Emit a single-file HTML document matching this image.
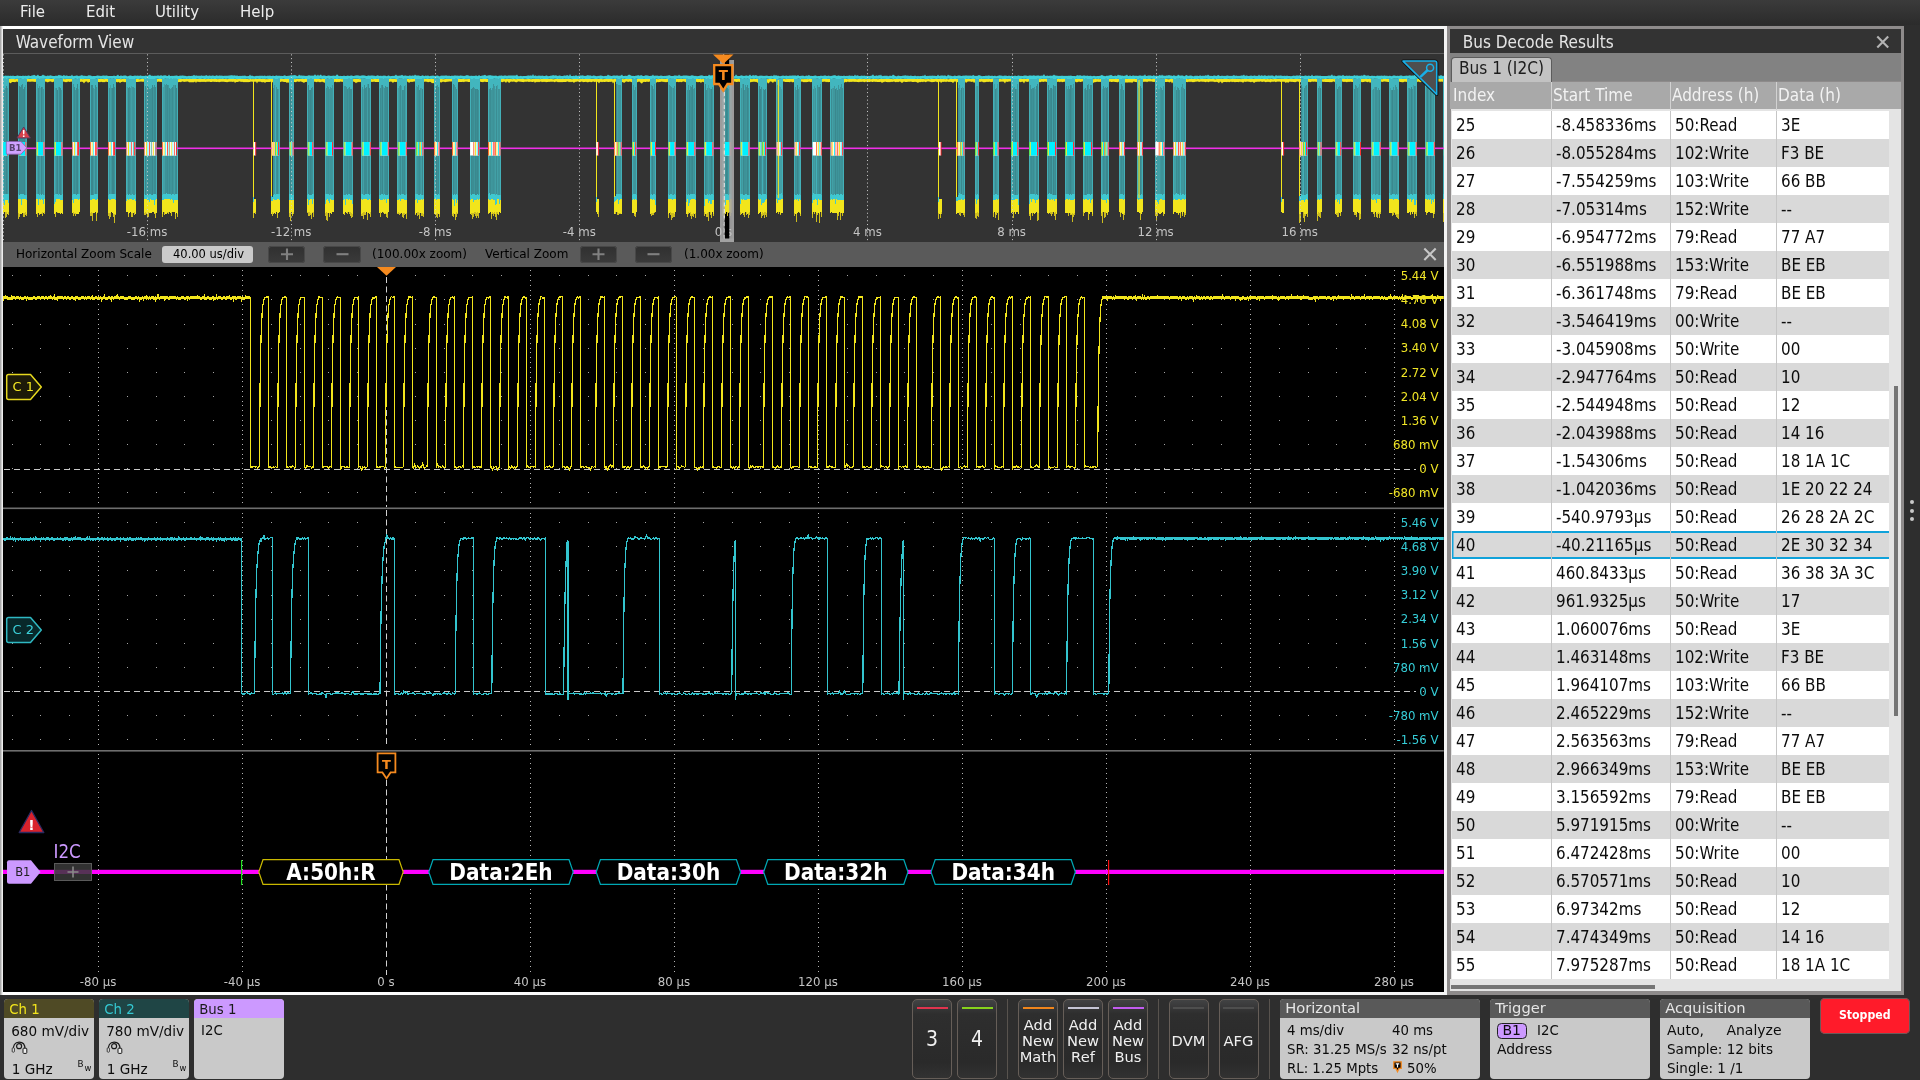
<!DOCTYPE html><html><head><meta charset="utf-8"><title>Oscilloscope</title><style>
html,body{margin:0;padding:0;}
body{width:1920px;height:1080px;position:relative;overflow:hidden;background:#2e2e2e;font-family:"DejaVu Sans", "Liberation Sans", sans-serif;}
#root{position:absolute;left:0;top:0;width:1920px;height:1080px;will-change:transform;}
.abs{position:absolute;}
#menubar{left:0;top:0;width:1920px;height:25px;background:linear-gradient(#3b3b3b,#2b2b2b);}
#menubar span{position:absolute;top:3.9px;font-size:15px;color:#ececec;line-height:17px;}
#wvframe{left:0;top:26px;width:1447.2px;height:968.7px;background:linear-gradient(90deg,#9a9a9a,#ffffff 3px,#f4f4f4);}
#wvtitle{left:3px;top:29px;width:1441px;height:24px;background:#333333;}
#wvtitle span{position:absolute;left:12.7px;top:3.2px;font-size:17px;color:#e4e4e4;line-height:20px;font-family:"DejaVu Sans Condensed", "Liberation Sans Narrow", "Liberation Sans", sans-serif;}
#ovline{left:3px;top:53px;width:1441px;height:1px;background:#5c5c5c;}
#ov{left:3px;top:54px;width:1441px;height:188px;background:#333333;}
#zoombar{left:3px;top:242px;width:1441px;height:25px;background:#5a5a5a;font-size:12px;color:#000;}
#zoombar span{position:absolute;top:4.8px;line-height:14px;white-space:nowrap;}
.zbtn{position:absolute;top:3.6px;height:17.2px;width:37.6px;margin-left:-0.8px;background:linear-gradient(#303030,#3a3a3a);border-radius:3.5px;box-shadow:0 0 0 1px #484848 inset;}
#main{left:3px;top:267px;width:1440.8px;height:724.7px;background:#000;}
svg{position:absolute;left:0;top:0;}
#bdframe{left:1448px;top:27px;width:1456px;}
#bdr{left:1447.2px;top:26px;width:456.6px;height:969px;background:#8e8b8b;}
#bdtitle{left:1450px;top:29px;width:451px;height:24px;background:#333333;}
#bdtitle span{position:absolute;left:12.7px;top:3.2px;font-size:17px;color:#e4e4e4;line-height:20px;font-family:"DejaVu Sans Condensed", "Liberation Sans Narrow", "Liberation Sans", sans-serif;}
#bdtabs{left:1450px;top:53px;width:451px;height:28px;background:#828282;}
#bdtab{left:1450.6px;top:57px;width:101.2px;height:24.6px;background:#c2c2c2;border-radius:4px 4px 0 0;border:1px solid #5c5c5c;border-bottom:none;box-sizing:border-box;font-size:17.1px;color:#1c1c1c;line-height:20px;font-family:"DejaVu Sans Condensed", "Liberation Sans Narrow", "Liberation Sans", sans-serif;}
#bdhead{left:1450px;top:81.6px;width:451px;height:27.4px;background:#a9a9a9;font-size:17px;color:#f2f2f2;font-family:"DejaVu Sans Condensed", "Liberation Sans Narrow", "Liberation Sans", sans-serif;}
#bdhead span{position:absolute;top:3.6px;line-height:20px;white-space:nowrap;}
#bdhead i{position:absolute;top:0;width:1.2px;height:28px;background:#d2d2d2;}
#bdbody{left:1451.2px;top:109px;width:449.8px;height:882px;background:#e4e4e4;}
.row{position:absolute;left:1451.5px;width:437.5px;height:28px;font-size:16.85px;color:#0c0c0c;font-family:"DejaVu Sans Condensed", "Liberation Sans Narrow", "Liberation Sans", sans-serif;}
.r0{background:#ffffff;}.r1{background:#d9d9d9;}
.sel{box-shadow:0 2px 0 0 #10a2da inset,0 -2px 0 0 #10a2da inset,1.5px 0 0 0 #10a2da inset;}
.c{position:absolute;top:0;height:28px;line-height:28.6px;white-space:nowrap;box-sizing:border-box;border-right:1px solid #c6c6c6;padding-left:4.5px;}
.c1{left:0;width:100px;}.c2{left:100px;width:119px;}.c3{left:219px;width:106px;}.c4{left:325px;width:112.5px;border-right:none;}
.badge{position:absolute;top:999px;height:80px;border-radius:4px;overflow:hidden;background:#c9c9c9;font-size:13.3px;color:#0c0c0c;}
.badge .hd{position:absolute;left:0;top:0;right:0;height:18.5px;line-height:18.8px;font-size:14.7px;padding-left:5.2px;}
.badge span{position:absolute;white-space:nowrap;line-height:17px;}
.btn{position:absolute;top:999px;height:80px;width:40px;border-radius:5px;box-sizing:border-box;border:1.2px solid #665e58;background:linear-gradient(#424344,#2e2e2e 18%,#2a2a2a 80%,#323232);color:#f0f0f0;text-align:center;}
.btn i{position:absolute;left:3.5px;right:3.5px;top:7px;height:2px;}
.btn span{position:absolute;left:-4px;right:-4px;text-align:center;}
.vsep{position:absolute;top:999px;width:1.2px;height:80px;background:#58534e;}
</style></head><body><div id="root">
<div id="menubar" class="abs"><span style="left:20px">File</span><span style="left:86px">Edit</span><span style="left:155px">Utility</span><span style="left:240px">Help</span></div>
<div id="wvframe" class="abs"></div>
<div id="wvtitle" class="abs"><span>Waveform View</span></div>
<div id="ovline" class="abs"></div>
<div id="ov" class="abs"></div>
<div id="zoombar" class="abs"><span style="left:13px">Horizontal Zoom Scale</span><div style="position:absolute;left:158.5px;top:4px;width:91.5px;height:16.5px;background:#cacaca;border-radius:3px;"></div><span style="left:170px;font-size:11.5px">40.00 us/div</span><div class="zbtn" style="left:265.5px"></div><div class="zbtn" style="left:321px"></div><span style="left:369px">(100.00x zoom)</span><span style="left:482px">Vertical Zoom</span><div class="zbtn" style="left:577.5px"></div><div class="zbtn" style="left:632.5px"></div><span style="left:681px">(1.00x zoom)</span></div>
<div id="main" class="abs"></div>
<svg class="abs" width="1447" height="1000" viewBox="0 0 1447 1000" style="left:0;top:0">
<g>
<rect x="724.8" y="54" width="4.4" height="188" fill="#000"/>
<clipPath id="ovclip"><rect x="3" y="54" width="1441" height="188"/></clipPath>
<g clip-path="url(#ovclip)">
<path d="M3 78.9 L4 78.9 L5 78.8 L6 79.1 L7 78.7 L8 78.7 L9 79 L10 78.7 L11 78.8 L12 78.9 L13 79 L14 79 L15 79.2 L16 79.1 L17 78.8 L18 78.9 L19 79.2 L20 78.8 L21 79.2 L22 79 L23 78.7 L24 79.1 L25 78.8 L26 78.8 L27 78.8 L28 79 L29 78.8 L30 79.1 L31 78.8 L32 79 L33 78.8 L34 78.9 L35 78.7 L36 79 L37 79.2 L38 79.1 L39 79.2 L40 78.8 L41 78.8 L42 79 L43 78.7 L44 79.1 L45 79 L46 79.1 L47 79 L48 78.8 L49 78.7 L50 78.7 L51 79 L52 79.1 L53 79 L54 78.7 L55 79.1 L56 79 L57 78.9 L58 79 L59 79.1 L60 79.2 L61 79.2 L62 79.1 L63 79 L64 79 L65 79.2 L66 78.9 L67 78.9 L68 79.1 L69 78.9 L70 78.9 L71 78.8 L72 79 L73 79.2 L74 79.1 L75 78.8 L76 79.2 L77 79 L78 78.9 L79 79.1 L80 78.8 L81 78.8 L82 78.9 L83 79.2 L84 78.7 L85 79.1 L86 79.1 L87 78.9 L88 78.8 L89 79 L90 79 L91 79 L92 78.8 L93 79.1 L94 78.9 L95 79 L96 79.1 L97 79.2 L98 78.9 L99 78.9 L100 79.1 L101 79 L102 79.1 L103 78.8 L104 79.2 L105 78.9 L106 78.9 L107 79 L108 78.7 L109 79.1 L110 79.1 L111 79 L112 79 L113 79.2 L114 79 L115 79 L116 79 L117 79.1 L118 79.1 L119 79 L120 79 L121 79.2 L122 79.1 L123 79 L124 78.9 L125 78.8 L126 78.9 L127 78.9 L128 79 L129 79.1 L130 78.8 L131 78.9 L132 79.1 L133 78.8 L134 78.9 L135 79 L136 79 L137 79.1 L138 78.8 L139 79.2 L140 79.2 L141 79.1 L142 79.1 L143 79.1 L144 78.8 L145 78.7 L146 79.2 L147 79 L148 79 L149 78.8 L150 79 L151 78.8 L152 79.2 L153 78.7 L154 79.1 L155 79 L156 78.7 L157 78.8 L158 78.9 L159 79 L160 79.1 L161 79 L162 79 L163 78.8 L164 79.1 L165 79.1 L166 79.1 L167 79.1 L168 78.9 L169 79 L170 79.2 L171 79 L172 78.9 L173 79.1 L174 78.7 L175 78.8 L176 78.8 L177 78.8 L178 79 L179 79.2 L180 78.7 L181 78.7 L182 78.9 L183 79 L184 78.9 L185 78.9 L186 79 L187 78.8 L188 78.7 L189 78.9 L190 78.7 L191 78.7 L192 78.9 L193 79 L194 78.9 L195 79 L196 78.9 L197 79 L198 79 L199 79 L200 79 L201 79.1 L202 79.1 L203 78.9 L204 79 L205 79.1 L206 79.2 L207 78.7 L208 78.9 L209 79 L210 79 L211 78.9 L212 78.9 L213 78.7 L214 79 L215 78.9 L216 78.9 L217 78.9 L218 79.2 L219 78.7 L220 78.7 L221 79 L222 78.7 L223 78.7 L224 79 L225 78.9 L226 78.8 L227 79.2 L228 78.9 L229 78.9 L230 79.1 L231 78.9 L232 78.9 L233 79.1 L234 79 L235 79.1 L236 79 L237 79.2 L238 78.7 L239 78.7 L240 79.1 L241 78.8 L242 78.8 L243 79 L244 78.9 L245 78.9 L246 79.1 L247 79.1 L248 79.1 L249 79.2 L250 79.1 L251 78.9 L252 79.2 L253 78.8 L254 79.2 L255 78.8 L256 78.8 L257 79 L258 78.8 L259 78.8 L260 78.8 L261 78.8 L262 79 L263 78.8 L264 78.9 L265 78.9 L266 79.2 L267 79 L268 79.2 L269 78.7 L270 79.1 L271 78.8 L272 78.8 L273 79 L274 79 L275 78.7 L276 79.1 L277 79.1 L278 78.9 L279 79.1 L280 78.9 L281 79.1 L282 79 L283 78.9 L284 78.9 L285 78.9 L286 78.9 L287 79.1 L288 78.9 L289 79 L290 79.2 L291 79 L292 79 L293 78.9 L294 78.8 L295 79.2 L296 78.9 L297 78.8 L298 79.1 L299 79.1 L300 78.8 L301 78.9 L302 78.9 L303 79.1 L304 78.9 L305 78.9 L306 79.1 L307 78.7 L308 79 L309 79 L310 79 L311 79.2 L312 79 L313 79.2 L314 79.1 L315 79 L316 78.8 L317 78.9 L318 78.9 L319 78.8 L320 79 L321 79.2 L322 79 L323 78.8 L324 79 L325 79 L326 78.8 L327 79 L328 79.1 L329 79.1 L330 78.9 L331 79 L332 78.8 L333 79 L334 78.8 L335 78.9 L336 79 L337 78.9 L338 79.1 L339 79 L340 79 L341 78.9 L342 79.2 L343 79.1 L344 78.7 L345 79 L346 79 L347 78.9 L348 78.7 L349 79 L350 79.1 L351 79 L352 79.1 L353 79.2 L354 78.8 L355 79.1 L356 78.9 L357 78.7 L358 78.9 L359 78.9 L360 79.2 L361 79.1 L362 78.8 L363 78.8 L364 79.1 L365 79.1 L366 79.1 L367 79 L368 78.7 L369 79.1 L370 78.8 L371 78.9 L372 79 L373 79.2 L374 79 L375 78.9 L376 78.7 L377 78.8 L378 78.8 L379 78.8 L380 79.1 L381 78.9 L382 79.2 L383 79 L384 79 L385 79 L386 79 L387 79.1 L388 78.8 L389 79.1 L390 78.9 L391 78.9 L392 79.1 L393 78.8 L394 78.9 L395 78.8 L396 79.2 L397 79.1 L398 78.9 L399 79 L400 79 L401 78.8 L402 79 L403 78.7 L404 78.8 L405 78.9 L406 78.8 L407 78.7 L408 78.8 L409 78.9 L410 79.2 L411 78.8 L412 78.8 L413 78.9 L414 79 L415 79 L416 79 L417 79.1 L418 79.1 L419 78.8 L420 79 L421 78.8 L422 78.9 L423 79.1 L424 78.7 L425 78.8 L426 78.8 L427 79.1 L428 78.8 L429 79.1 L430 78.7 L431 78.7 L432 79.1 L433 78.9 L434 78.8 L435 78.9 L436 78.8 L437 79.1 L438 78.8 L439 78.9 L440 78.8 L441 78.8 L442 79 L443 79.2 L444 79.2 L445 79 L446 78.8 L447 78.9 L448 78.9 L449 78.8 L450 78.9 L451 78.8 L452 78.9 L453 79.1 L454 78.7 L455 78.7 L456 78.9 L457 78.9 L458 78.9 L459 78.8 L460 78.9 L461 78.9 L462 79.1 L463 78.9 L464 79.1 L465 79.2 L466 79 L467 79.2 L468 78.8 L469 78.7 L470 78.8 L471 79 L472 79.1 L473 78.9 L474 79.1 L475 79.2 L476 79 L477 78.9 L478 79 L479 78.9 L480 78.8 L481 78.8 L482 78.9 L483 78.8 L484 78.7 L485 79.1 L486 78.8 L487 78.9 L488 79.1 L489 79.1 L490 79.1 L491 79 L492 78.7 L493 79.2 L494 78.9 L495 79.2 L496 79.1 L497 78.8 L498 78.8 L499 79 L500 78.9 L501 78.8 L502 79.1 L503 79 L504 78.8 L505 79.2 L506 78.8 L507 79 L508 78.8 L509 78.9 L510 78.7 L511 78.7 L512 79.2 L513 78.9 L514 78.9 L515 79 L516 79.2 L517 78.9 L518 78.8 L519 78.8 L520 79.1 L521 78.7 L522 78.7 L523 79.1 L524 79.1 L525 79.2 L526 78.9 L527 79.2 L528 78.8 L529 79 L530 79 L531 79.2 L532 78.9 L533 79.1 L534 78.8 L535 78.9 L536 79 L537 79 L538 79.1 L539 78.8 L540 79.2 L541 79.1 L542 79 L543 78.8 L544 78.8 L545 79 L546 79.1 L547 79 L548 79.1 L549 79 L550 78.8 L551 79 L552 78.9 L553 79.2 L554 79.2 L555 79.1 L556 79.1 L557 78.9 L558 79 L559 79.1 L560 78.7 L561 78.8 L562 79 L563 78.8 L564 79 L565 78.8 L566 79.1 L567 79.1 L568 78.8 L569 79.1 L570 78.8 L571 79 L572 79.2 L573 79.1 L574 79 L575 78.9 L576 78.8 L577 78.8 L578 78.9 L579 79.2 L580 78.8 L581 79.1 L582 78.9 L583 78.9 L584 78.9 L585 78.9 L586 79 L587 78.8 L588 78.9 L589 79.1 L590 78.7 L591 78.9 L592 79 L593 78.9 L594 78.8 L595 79.1 L596 79 L597 78.7 L598 79.1 L599 79.1 L600 79 L601 78.9 L602 79 L603 79.2 L604 79 L605 78.7 L606 79 L607 78.8 L608 78.9 L609 78.8 L610 79.1 L611 79.1 L612 78.9 L613 79.2 L614 78.9 L615 78.8 L616 79 L617 78.8 L618 78.8 L619 78.9 L620 78.9 L621 79.1 L622 78.8 L623 78.9 L624 79.2 L625 78.8 L626 79.1 L627 78.7 L628 79.2 L629 78.7 L630 78.8 L631 78.9 L632 79.1 L633 79 L634 78.8 L635 78.9 L636 78.9 L637 78.7 L638 79 L639 78.8 L640 78.9 L641 79.1 L642 78.9 L643 79 L644 79 L645 79 L646 78.9 L647 78.7 L648 78.8 L649 79.1 L650 79 L651 79.1 L652 79.1 L653 78.7 L654 79 L655 79 L656 79.1 L657 79.1 L658 79.2 L659 79.1 L660 78.9 L661 78.8 L662 78.7 L663 79 L664 78.8 L665 79 L666 78.9 L667 78.8 L668 78.7 L669 79 L670 79 L671 78.8 L672 79 L673 78.8 L674 79 L675 79.1 L676 78.9 L677 79 L678 79.1 L679 78.7 L680 79.1 L681 79 L682 78.9 L683 79.1 L684 79.1 L685 79 L686 78.8 L687 79.1 L688 78.8 L689 79 L690 79 L691 79 L692 79.1 L693 79.1 L694 78.7 L695 78.8 L696 78.9 L697 78.8 L698 78.8 L699 79 L700 79 L701 79.1 L702 79.2 L703 78.8 L704 79.1 L705 79 L706 79.2 L707 79 L708 78.8 L709 79.2 L710 78.7 L711 78.7 L712 79 L713 79 L714 78.8 L715 78.9 L716 78.9 L717 78.9 L718 79 L719 78.9 L720 79.2 L721 79.1 L722 78.9 L723 79 L724 78.7 L725 78.7 L726 79.2 L727 79.1 L728 79 L729 78.7 L730 79.2 L731 78.9 L732 79.1 L733 79 L734 78.9 L735 78.8 L736 78.9 L737 78.8 L738 79 L739 78.8 L740 78.9 L741 79.1 L742 79.1 L743 78.9 L744 78.9 L745 78.9 L746 79.1 L747 78.9 L748 79.1 L749 78.7 L750 78.7 L751 78.8 L752 79.2 L753 78.8 L754 78.8 L755 79.1 L756 78.9 L757 78.8 L758 78.8 L759 78.9 L760 79 L761 79.1 L762 78.7 L763 78.9 L764 79 L765 79 L766 79.2 L767 79.1 L768 79.2 L769 79.1 L770 78.8 L771 78.8 L772 79.1 L773 78.9 L774 78.9 L775 79 L776 79 L777 79.1 L778 79 L779 79.2 L780 79.1 L781 79 L782 78.8 L783 79 L784 78.8 L785 78.9 L786 79.2 L787 78.7 L788 79 L789 78.7 L790 79 L791 78.9 L792 78.8 L793 78.8 L794 78.9 L795 78.9 L796 79.1 L797 78.8 L798 79.1 L799 79 L800 79.1 L801 79.1 L802 79.2 L803 78.9 L804 79.2 L805 78.7 L806 79.2 L807 78.8 L808 79.2 L809 79.1 L810 79.1 L811 79 L812 78.9 L813 78.7 L814 78.8 L815 79 L816 78.8 L817 79 L818 79.2 L819 79.2 L820 79.1 L821 79 L822 79.1 L823 79.1 L824 79 L825 78.7 L826 79 L827 78.9 L828 78.9 L829 78.9 L830 79 L831 79.2 L832 79.2 L833 79.1 L834 79 L835 79.1 L836 79 L837 78.9 L838 79.2 L839 78.7 L840 78.9 L841 79 L842 79 L843 78.7 L844 78.7 L845 78.7 L846 78.8 L847 78.9 L848 79.2 L849 78.8 L850 78.9 L851 78.8 L852 78.9 L853 78.9 L854 78.9 L855 78.9 L856 78.9 L857 79.2 L858 79 L859 79.1 L860 79 L861 78.8 L862 79.2 L863 78.7 L864 78.8 L865 78.9 L866 79.2 L867 79.1 L868 79 L869 79.1 L870 79.1 L871 79.2 L872 78.9 L873 78.8 L874 78.9 L875 79.1 L876 79.1 L877 79 L878 79.2 L879 78.9 L880 78.9 L881 79.1 L882 78.9 L883 78.9 L884 78.9 L885 78.8 L886 78.7 L887 78.8 L888 78.7 L889 78.8 L890 78.9 L891 78.9 L892 79.1 L893 79.2 L894 79 L895 78.9 L896 79.1 L897 78.8 L898 78.8 L899 78.8 L900 79.1 L901 78.7 L902 79 L903 78.9 L904 79.1 L905 78.7 L906 78.8 L907 78.9 L908 79 L909 78.8 L910 78.7 L911 78.8 L912 78.9 L913 79.1 L914 79 L915 78.9 L916 78.9 L917 79.1 L918 78.7 L919 79.1 L920 78.8 L921 79 L922 78.9 L923 79.1 L924 79.1 L925 79.2 L926 78.9 L927 79.2 L928 78.7 L929 79 L930 79.2 L931 79 L932 78.9 L933 78.8 L934 78.9 L935 78.7 L936 78.8 L937 78.9 L938 78.8 L939 79.1 L940 78.7 L941 78.8 L942 78.8 L943 78.9 L944 78.8 L945 79.2 L946 78.9 L947 79.1 L948 79.2 L949 79.2 L950 78.8 L951 79.1 L952 79 L953 79.1 L954 78.9 L955 78.7 L956 78.9 L957 79 L958 79 L959 79 L960 79.1 L961 78.7 L962 79.1 L963 79.1 L964 79.1 L965 78.7 L966 78.9 L967 79.1 L968 78.7 L969 78.8 L970 79 L971 79 L972 79 L973 78.9 L974 78.8 L975 79.1 L976 79 L977 78.9 L978 79.1 L979 78.8 L980 79.1 L981 78.8 L982 79.1 L983 79.1 L984 79 L985 79 L986 79.1 L987 78.8 L988 78.8 L989 79 L990 79 L991 79.1 L992 78.9 L993 79.1 L994 78.9 L995 78.7 L996 79.2 L997 79.1 L998 79.1 L999 78.9 L1000 78.9 L1001 79 L1002 79.2 L1003 78.8 L1004 78.8 L1005 79 L1006 78.7 L1007 79.1 L1008 79.1 L1009 79 L1010 78.7 L1011 79 L1012 79.1 L1013 79 L1014 79 L1015 79 L1016 79.1 L1017 78.7 L1018 79 L1019 78.7 L1020 79 L1021 78.8 L1022 79.1 L1023 78.9 L1024 78.9 L1025 78.9 L1026 78.8 L1027 79 L1028 78.8 L1029 78.8 L1030 78.9 L1031 79.1 L1032 79 L1033 79 L1034 78.9 L1035 78.8 L1036 78.9 L1037 78.8 L1038 78.9 L1039 78.8 L1040 79.2 L1041 78.9 L1042 79.1 L1043 78.8 L1044 79.1 L1045 78.9 L1046 79.1 L1047 79 L1048 78.8 L1049 79.1 L1050 78.9 L1051 79.2 L1052 79.1 L1053 79.1 L1054 79.2 L1055 78.9 L1056 79 L1057 79.1 L1058 79.1 L1059 78.8 L1060 79.1 L1061 78.9 L1062 79 L1063 78.8 L1064 79.1 L1065 78.8 L1066 78.8 L1067 79 L1068 78.8 L1069 79.1 L1070 78.9 L1071 78.7 L1072 79.2 L1073 79.1 L1074 79.1 L1075 78.7 L1076 78.8 L1077 79.1 L1078 79 L1079 79 L1080 78.9 L1081 79 L1082 79.1 L1083 78.7 L1084 78.9 L1085 79 L1086 78.9 L1087 78.7 L1088 79.1 L1089 79.1 L1090 78.9 L1091 78.9 L1092 78.8 L1093 79 L1094 79.2 L1095 78.8 L1096 78.8 L1097 79.2 L1098 78.8 L1099 79.2 L1100 78.9 L1101 79.1 L1102 78.9 L1103 78.9 L1104 78.9 L1105 78.7 L1106 78.7 L1107 79.2 L1108 78.9 L1109 78.8 L1110 78.9 L1111 78.7 L1112 79.1 L1113 78.8 L1114 79.1 L1115 78.9 L1116 78.8 L1117 79 L1118 78.8 L1119 79.1 L1120 78.9 L1121 78.8 L1122 79 L1123 78.8 L1124 79 L1125 78.8 L1126 78.8 L1127 78.9 L1128 79 L1129 79 L1130 78.9 L1131 78.8 L1132 78.7 L1133 79.1 L1134 79 L1135 79.1 L1136 78.9 L1137 79.1 L1138 79.1 L1139 79 L1140 79.1 L1141 79.1 L1142 79.2 L1143 78.9 L1144 79 L1145 78.9 L1146 79.1 L1147 79.1 L1148 78.8 L1149 79.1 L1150 79 L1151 78.9 L1152 79.2 L1153 78.8 L1154 78.9 L1155 78.9 L1156 79.2 L1157 78.8 L1158 79 L1159 79.2 L1160 78.7 L1161 79.1 L1162 78.8 L1163 78.8 L1164 79.2 L1165 79.1 L1166 78.8 L1167 78.9 L1168 79.2 L1169 79.2 L1170 79.1 L1171 79 L1172 79.1 L1173 78.7 L1174 79.1 L1175 79 L1176 78.9 L1177 79.2 L1178 78.9 L1179 79 L1180 78.7 L1181 78.8 L1182 79 L1183 78.7 L1184 79.1 L1185 78.9 L1186 78.7 L1187 79 L1188 79.2 L1189 78.9 L1190 79 L1191 78.9 L1192 79 L1193 79.1 L1194 78.9 L1195 78.7 L1196 79.2 L1197 79 L1198 78.9 L1199 78.9 L1200 79.2 L1201 78.8 L1202 79.1 L1203 79 L1204 78.7 L1205 79.1 L1206 79 L1207 78.7 L1208 79.1 L1209 78.8 L1210 79 L1211 79 L1212 78.9 L1213 78.8 L1214 79 L1215 79.2 L1216 79.2 L1217 78.7 L1218 78.7 L1219 79.1 L1220 79.1 L1221 79.1 L1222 78.7 L1223 79 L1224 78.8 L1225 78.9 L1226 78.9 L1227 78.8 L1228 79.1 L1229 78.7 L1230 79.2 L1231 78.8 L1232 79 L1233 78.8 L1234 78.7 L1235 78.9 L1236 79.1 L1237 78.7 L1238 78.7 L1239 79 L1240 78.8 L1241 79.2 L1242 78.7 L1243 78.7 L1244 79.1 L1245 78.9 L1246 79 L1247 79 L1248 79.1 L1249 78.8 L1250 78.7 L1251 79.1 L1252 78.8 L1253 78.8 L1254 79 L1255 78.8 L1256 79.1 L1257 78.8 L1258 78.8 L1259 78.7 L1260 78.9 L1261 78.8 L1262 79 L1263 78.8 L1264 78.9 L1265 79 L1266 79.2 L1267 79.1 L1268 78.7 L1269 79.2 L1270 79.1 L1271 79.1 L1272 79 L1273 79.2 L1274 79 L1275 78.7 L1276 79.1 L1277 78.9 L1278 79 L1279 78.9 L1280 78.7 L1281 79.1 L1282 79 L1283 79.1 L1284 79 L1285 78.9 L1286 79 L1287 79 L1288 78.8 L1289 78.7 L1290 78.8 L1291 78.8 L1292 79.1 L1293 78.8 L1294 79.1 L1295 78.9 L1296 78.8 L1297 78.8 L1298 78.8 L1299 78.8 L1300 78.9 L1301 79.1 L1302 79.2 L1303 78.9 L1304 78.8 L1305 79.1 L1306 78.9 L1307 79 L1308 79 L1309 79 L1310 78.9 L1311 78.8 L1312 78.9 L1313 78.7 L1314 78.8 L1315 79 L1316 79 L1317 79 L1318 79 L1319 79 L1320 79 L1321 78.9 L1322 79.1 L1323 79.2 L1324 79 L1325 78.7 L1326 79 L1327 79.1 L1328 79 L1329 78.7 L1330 78.9 L1331 78.8 L1332 78.8 L1333 79.1 L1334 79.2 L1335 78.7 L1336 78.9 L1337 78.8 L1338 79.1 L1339 78.9 L1340 79 L1341 79 L1342 79.1 L1343 78.9 L1344 78.8 L1345 79 L1346 78.9 L1347 78.8 L1348 78.9 L1349 78.9 L1350 79.1 L1351 78.9 L1352 79 L1353 79.2 L1354 79.2 L1355 79.1 L1356 78.8 L1357 78.7 L1358 78.7 L1359 79.2 L1360 79 L1361 78.8 L1362 78.8 L1363 78.8 L1364 78.8 L1365 78.8 L1366 79 L1367 79 L1368 78.9 L1369 79 L1370 79 L1371 78.7 L1372 78.8 L1373 78.8 L1374 79 L1375 79.1 L1376 78.8 L1377 78.8 L1378 79 L1379 78.9 L1380 78.9 L1381 78.9 L1382 79.2 L1383 79 L1384 79.1 L1385 79 L1386 78.8 L1387 79 L1388 78.9 L1389 78.8 L1390 78.8 L1391 79.1 L1392 78.8 L1393 78.7 L1394 78.9 L1395 79 L1396 78.7 L1397 79.1 L1398 79.1 L1399 78.8 L1400 79 L1401 79 L1402 78.9 L1403 79.1 L1404 79.1 L1405 78.8 L1406 78.8 L1407 79 L1408 78.9 L1409 78.9 L1410 78.9 L1411 79.1 L1412 79.2 L1413 79 L1414 78.9 L1415 78.9 L1416 78.9 L1417 79.2 L1418 78.8 L1419 78.7 L1420 79 L1421 78.8 L1422 78.9 L1423 78.8 L1424 78.8 L1425 79 L1426 79.2 L1427 79.1 L1428 79 L1429 79 L1430 78.9 L1431 79 L1432 78.8 L1433 78.9 L1434 78.8 L1435 79 L1436 79.2 L1437 78.8 L1438 79.1 L1439 79 L1440 78.8 L1441 78.9 L1442 78.9 L1443 78.9 L1444 79.2 L1444 82.2 L1443 82.1 L1442 81.6 L1441 81.8 L1440 81.8 L1439 81.6 L1438 81.7 L1437 82.2 L1436 82 L1435 82.1 L1434 82.9 L1433 82 L1432 81.9 L1431 82.2 L1430 81.7 L1429 81.5 L1428 82 L1427 81.6 L1426 82.1 L1425 82.1 L1424 81.5 L1423 82 L1422 81.9 L1421 81.9 L1420 82.2 L1419 81.7 L1418 81.5 L1417 82.3 L1416 82.3 L1415 81.5 L1414 81.9 L1413 81.8 L1412 81.9 L1411 82.1 L1410 82 L1409 81.8 L1408 82.1 L1407 81.8 L1406 82 L1405 81.6 L1404 82.1 L1403 82.3 L1402 82.2 L1401 82 L1400 82 L1399 81.6 L1398 82 L1397 81.7 L1396 81.7 L1395 81.5 L1394 81.5 L1393 82.2 L1392 81.7 L1391 81.6 L1390 82.3 L1389 81.9 L1388 82.1 L1387 81.8 L1386 81.8 L1385 81.6 L1384 81.5 L1383 81.8 L1382 82.1 L1381 81.6 L1380 82.1 L1379 82.2 L1378 81.7 L1377 81.9 L1376 82.1 L1375 82.2 L1374 81.9 L1373 82 L1372 82.1 L1371 81.9 L1370 82.9 L1369 81.6 L1368 82.3 L1367 82.1 L1366 81.7 L1365 81.6 L1364 82 L1363 81.9 L1362 82.2 L1361 81.8 L1360 82.2 L1359 82 L1358 81.8 L1357 82.9 L1356 81.9 L1355 83 L1354 82.8 L1353 82.1 L1352 81.9 L1351 81.8 L1350 81.7 L1349 82 L1348 81.7 L1347 82.3 L1346 82.1 L1345 81.7 L1344 81.9 L1343 81.7 L1342 81.5 L1341 81.7 L1340 81.8 L1339 81.9 L1338 81.6 L1337 81.8 L1336 82 L1335 82.3 L1334 81.6 L1333 81.6 L1332 82.2 L1331 81.9 L1330 82.3 L1329 82 L1328 82 L1327 82 L1326 82.1 L1325 82 L1324 81.8 L1323 81.9 L1322 81.6 L1321 81.8 L1320 82.1 L1319 82.3 L1318 81.7 L1317 81.7 L1316 82 L1315 81.6 L1314 81.7 L1313 81.7 L1312 81.6 L1311 82 L1310 82.2 L1309 81.7 L1308 82 L1307 81.9 L1306 81.8 L1305 83 L1304 82 L1303 81.8 L1302 82 L1301 82.3 L1300 82.2 L1299 82.1 L1298 81.6 L1297 81.5 L1296 82 L1295 82.3 L1294 82 L1293 82.1 L1292 81.7 L1291 82 L1290 81.5 L1289 82.1 L1288 83 L1287 81.8 L1286 83 L1285 82.2 L1284 81.5 L1283 82 L1282 81.6 L1281 82 L1280 81.8 L1279 81.6 L1278 81.8 L1277 81.5 L1276 82.2 L1275 81.8 L1274 81.6 L1273 81.9 L1272 81.6 L1271 82.2 L1270 82.3 L1269 81.7 L1268 82.1 L1267 81.7 L1266 82.2 L1265 82.1 L1264 81.5 L1263 81.7 L1262 82.1 L1261 81.6 L1260 81.6 L1259 82.1 L1258 81.5 L1257 82.1 L1256 81.8 L1255 82.2 L1254 83.1 L1253 81.9 L1252 81.7 L1251 82.3 L1250 81.9 L1249 81.8 L1248 81.7 L1247 81.5 L1246 82 L1245 81.7 L1244 81.8 L1243 83 L1242 81.8 L1241 82.2 L1240 81.6 L1239 82.2 L1238 82.1 L1237 82 L1236 81.9 L1235 82.3 L1234 81.9 L1233 81.7 L1232 82.3 L1231 81.5 L1230 82 L1229 82.3 L1228 81.8 L1227 82.2 L1226 81.9 L1225 82.1 L1224 82.1 L1223 82.2 L1222 83.4 L1221 81.9 L1220 81.5 L1219 83.2 L1218 82.3 L1217 82 L1216 81.7 L1215 82.3 L1214 81.8 L1213 81.7 L1212 81.6 L1211 81.7 L1210 81.6 L1209 82 L1208 82.3 L1207 81.6 L1206 82.2 L1205 82.1 L1204 81.8 L1203 81.7 L1202 81.7 L1201 81.5 L1200 81.7 L1199 82.1 L1198 81.6 L1197 81.6 L1196 81.8 L1195 81.8 L1194 82.2 L1193 82.1 L1192 82.3 L1191 81.5 L1190 82.2 L1189 81.5 L1188 82.2 L1187 82 L1186 82 L1185 81.6 L1184 82 L1183 82.2 L1182 82.2 L1181 81.7 L1180 81.8 L1179 81.9 L1178 81.7 L1177 82.1 L1176 82 L1175 82 L1174 82.3 L1173 82.1 L1172 83.5 L1171 81.6 L1170 82.2 L1169 82.3 L1168 81.7 L1167 82 L1166 81.9 L1165 82.1 L1164 82.1 L1163 81.6 L1162 82.1 L1161 81.5 L1160 81.7 L1159 83 L1158 82 L1157 81.7 L1156 82.2 L1155 82 L1154 81.8 L1153 82 L1152 81.6 L1151 81.6 L1150 81.5 L1149 81.5 L1148 81.6 L1147 82.2 L1146 81.5 L1145 82.1 L1144 81.6 L1143 82.3 L1142 81.5 L1141 82 L1140 83.5 L1139 82 L1138 82 L1137 82.2 L1136 82.1 L1135 81.9 L1134 81.5 L1133 81.8 L1132 83.2 L1131 81.7 L1130 83 L1129 81.8 L1128 83 L1127 81.9 L1126 82.9 L1125 82.1 L1124 82.2 L1123 81.8 L1122 81.5 L1121 82.2 L1120 82.2 L1119 81.6 L1118 82.3 L1117 82.3 L1116 82.1 L1115 81.9 L1114 81.7 L1113 81.8 L1112 82.1 L1111 82.1 L1110 81.6 L1109 82 L1108 81.8 L1107 83.5 L1106 81.6 L1105 81.8 L1104 82 L1103 82 L1102 81.9 L1101 82.1 L1100 81.7 L1099 81.9 L1098 81.7 L1097 81.7 L1096 82.1 L1095 82.2 L1094 82.2 L1093 83.3 L1092 81.6 L1091 81.7 L1090 81.9 L1089 82 L1088 81.6 L1087 81.9 L1086 82.2 L1085 81.7 L1084 81.9 L1083 81.6 L1082 81.6 L1081 82 L1080 81.9 L1079 81.6 L1078 81.9 L1077 82.3 L1076 82.3 L1075 81.6 L1074 81.6 L1073 82 L1072 81.8 L1071 81.8 L1070 82 L1069 83.3 L1068 81.6 L1067 82.1 L1066 83.4 L1065 81.7 L1064 81.8 L1063 82.1 L1062 82.2 L1061 81.6 L1060 82.2 L1059 81.8 L1058 81.8 L1057 82.1 L1056 81.8 L1055 81.8 L1054 81.8 L1053 82 L1052 82 L1051 82 L1050 81.8 L1049 81.9 L1048 81.6 L1047 82.1 L1046 81.8 L1045 81.6 L1044 81.7 L1043 81.9 L1042 81.5 L1041 82.1 L1040 82.3 L1039 82 L1038 81.7 L1037 81.5 L1036 82.2 L1035 81.5 L1034 81.6 L1033 81.5 L1032 81.7 L1031 82.1 L1030 81.6 L1029 81.5 L1028 81.8 L1027 82.1 L1026 81.6 L1025 81.6 L1024 83.6 L1023 81.8 L1022 81.8 L1021 81.9 L1020 82.3 L1019 81.6 L1018 81.9 L1017 81.9 L1016 82 L1015 82.3 L1014 82 L1013 82.1 L1012 81.8 L1011 81.6 L1010 81.6 L1009 81.5 L1008 81.8 L1007 82 L1006 81.5 L1005 83.6 L1004 82.1 L1003 81.5 L1002 81.7 L1001 81.6 L1000 82.1 L999 81.8 L998 82.2 L997 81.7 L996 82 L995 81.8 L994 82.8 L993 81.7 L992 82.1 L991 82.3 L990 81.7 L989 81.7 L988 82.1 L987 81.8 L986 82 L985 82.2 L984 82.3 L983 82.2 L982 81.6 L981 81.8 L980 82.1 L979 81.7 L978 83.5 L977 82.1 L976 82.3 L975 82 L974 83.1 L973 81.5 L972 81.9 L971 81.8 L970 81.6 L969 81.6 L968 81.6 L967 82 L966 82.9 L965 81.5 L964 81.6 L963 83.4 L962 82 L961 81.7 L960 81.6 L959 81.7 L958 81.9 L957 82.2 L956 81.8 L955 81.5 L954 81.8 L953 83.2 L952 82 L951 82.1 L950 81.7 L949 82 L948 81.7 L947 81.6 L946 82.2 L945 81.5 L944 82 L943 81.7 L942 81.9 L941 83 L940 81.5 L939 82.1 L938 82 L937 82.3 L936 81.6 L935 81.7 L934 82 L933 81.9 L932 82.2 L931 82 L930 81.8 L929 81.6 L928 81.6 L927 81.6 L926 82.2 L925 81.9 L924 81.6 L923 82.3 L922 81.8 L921 82.1 L920 82.2 L919 82 L918 83 L917 82.2 L916 81.9 L915 81.8 L914 82.1 L913 82.1 L912 81.9 L911 81.6 L910 81.7 L909 81.7 L908 81.8 L907 81.9 L906 82 L905 82.1 L904 81.6 L903 82.3 L902 82.9 L901 82.2 L900 81.5 L899 81.8 L898 82.2 L897 81.8 L896 82.2 L895 81.9 L894 81.6 L893 81.7 L892 82 L891 81.8 L890 82.2 L889 82.1 L888 82.2 L887 81.9 L886 82.1 L885 81.6 L884 82.2 L883 82 L882 83.2 L881 81.8 L880 82.1 L879 82.1 L878 82 L877 81.9 L876 81.8 L875 82 L874 81.6 L873 82 L872 82.1 L871 81.6 L870 81.9 L869 82 L868 82.1 L867 82.2 L866 81.5 L865 82.3 L864 82 L863 81.8 L862 81.8 L861 82.1 L860 81.8 L859 82.3 L858 82.1 L857 82.1 L856 81.8 L855 81.9 L854 81.7 L853 81.8 L852 81.8 L851 82.1 L850 81.8 L849 82.2 L848 81.6 L847 82 L846 82.3 L845 81.8 L844 83.2 L843 82.1 L842 82 L841 82.1 L840 81.6 L839 81.7 L838 83.5 L837 81.6 L836 82.1 L835 81.8 L834 81.7 L833 81.5 L832 81.9 L831 81.7 L830 82 L829 82 L828 82.3 L827 81.8 L826 82.3 L825 81.5 L824 81.7 L823 81.7 L822 81.9 L821 83.2 L820 81.8 L819 82 L818 82.2 L817 82.3 L816 81.6 L815 81.9 L814 82 L813 81.6 L812 81.8 L811 82.3 L810 82.1 L809 81.5 L808 82 L807 82.1 L806 82.2 L805 82 L804 82.2 L803 82.1 L802 81.5 L801 81.7 L800 82.1 L799 82.1 L798 82.3 L797 81.7 L796 81.9 L795 81.9 L794 81.9 L793 82.2 L792 82.2 L791 81.6 L790 82.3 L789 81.9 L788 82 L787 81.9 L786 81.9 L785 81.9 L784 81.6 L783 81.6 L782 82.1 L781 82.3 L780 82.2 L779 81.7 L778 81.9 L777 82 L776 81.8 L775 81.8 L774 81.5 L773 82.9 L772 81.9 L771 81.5 L770 81.6 L769 83.1 L768 83.6 L767 81.9 L766 81.9 L765 81.7 L764 81.6 L763 82.1 L762 81.7 L761 81.9 L760 81.9 L759 81.6 L758 83.1 L757 82.3 L756 81.8 L755 82.1 L754 81.6 L753 82.1 L752 81.8 L751 82.2 L750 82.2 L749 81.9 L748 81.9 L747 81.7 L746 81.8 L745 81.6 L744 82.2 L743 82.3 L742 81.7 L741 81.9 L740 82.1 L739 81.7 L738 81.7 L737 82 L736 82.1 L735 81.6 L734 81.7 L733 81.8 L732 81.7 L731 83.1 L730 82.2 L729 81.6 L728 82.1 L727 82.1 L726 82.8 L725 81.6 L724 81.9 L723 82 L722 82 L721 83.5 L720 82.3 L719 82.1 L718 81.6 L717 81.9 L716 81.9 L715 81.7 L714 81.9 L713 81.6 L712 82.2 L711 82 L710 82 L709 81.7 L708 82 L707 81.6 L706 81.6 L705 81.8 L704 82.3 L703 81.9 L702 81.8 L701 83 L700 82 L699 81.9 L698 82.2 L697 81.9 L696 81.7 L695 81.7 L694 81.9 L693 81.7 L692 81.7 L691 81.8 L690 82.2 L689 81.6 L688 81.7 L687 81.6 L686 82.3 L685 81.9 L684 81.5 L683 81.6 L682 81.9 L681 82.3 L680 81.8 L679 82.2 L678 82 L677 81.7 L676 82.3 L675 81.8 L674 81.8 L673 81.8 L672 81.7 L671 82.1 L670 81.8 L669 82.2 L668 81.8 L667 82.2 L666 81.9 L665 82.2 L664 81.7 L663 81.9 L662 81.6 L661 81.8 L660 81.9 L659 81.9 L658 82.2 L657 81.8 L656 83.3 L655 81.5 L654 81.9 L653 83.4 L652 82.1 L651 81.8 L650 81.6 L649 81.8 L648 82.1 L647 81.6 L646 81.9 L645 82 L644 81.8 L643 82.3 L642 83.6 L641 83.2 L640 81.9 L639 81.6 L638 81.9 L637 82.2 L636 81.8 L635 81.8 L634 82.1 L633 82.2 L632 82.3 L631 81.9 L630 81.6 L629 81.8 L628 82 L627 81.6 L626 81.6 L625 82.2 L624 83.1 L623 82 L622 82.3 L621 81.6 L620 81.9 L619 81.5 L618 82.1 L617 81.6 L616 81.6 L615 82.1 L614 81.9 L613 83.5 L612 81.5 L611 82.1 L610 81.7 L609 82 L608 82.1 L607 81.8 L606 81.7 L605 81.9 L604 82.1 L603 81.8 L602 82.3 L601 81.8 L600 81.9 L599 83.6 L598 82 L597 81.8 L596 81.6 L595 82.2 L594 81.8 L593 81.6 L592 82 L591 82.3 L590 81.8 L589 82 L588 82.2 L587 82.2 L586 81.7 L585 82.1 L584 81.9 L583 82.2 L582 81.6 L581 81.8 L580 82.3 L579 82 L578 81.6 L577 81.6 L576 82 L575 81.8 L574 83.1 L573 82.1 L572 81.7 L571 82.2 L570 81.8 L569 82.2 L568 81.5 L567 81.6 L566 81.9 L565 82.1 L564 82.1 L563 82 L562 82.2 L561 82.1 L560 82.2 L559 81.9 L558 82.3 L557 81.7 L556 81.6 L555 82.3 L554 82.1 L553 81.6 L552 82 L551 81.5 L550 82 L549 81.8 L548 82.1 L547 82 L546 82.2 L545 81.7 L544 82 L543 81.8 L542 82.3 L541 81.6 L540 81.7 L539 82.3 L538 81.8 L537 82.3 L536 81.8 L535 83.1 L534 81.6 L533 81.9 L532 82.1 L531 81.8 L530 81.8 L529 82.1 L528 81.8 L527 81.5 L526 82.1 L525 81.6 L524 82.2 L523 82.1 L522 81.9 L521 81.7 L520 81.7 L519 81.6 L518 81.5 L517 82.2 L516 82.2 L515 82 L514 81.5 L513 81.8 L512 81.7 L511 81.6 L510 82.2 L509 83 L508 81.7 L507 81.6 L506 83.1 L505 81.7 L504 81.6 L503 81.9 L502 82.3 L501 81.8 L500 82.1 L499 81.9 L498 83.1 L497 82.1 L496 82.9 L495 83.6 L494 82 L493 81.6 L492 82 L491 81.7 L490 81.6 L489 82 L488 82 L487 82.1 L486 82.1 L485 81.8 L484 81.7 L483 82.2 L482 82.1 L481 82.1 L480 81.6 L479 81.6 L478 81.7 L477 81.7 L476 81.9 L475 82.2 L474 82.1 L473 82.2 L472 82.3 L471 82 L470 81.9 L469 81.9 L468 82 L467 81.6 L466 81.7 L465 81.5 L464 82.2 L463 81.8 L462 82 L461 82 L460 82 L459 82 L458 82.2 L457 83 L456 82 L455 83.1 L454 81.8 L453 81.9 L452 81.6 L451 81.6 L450 81.6 L449 81.6 L448 81.8 L447 81.8 L446 82 L445 82.3 L444 81.7 L443 81.7 L442 82 L441 82.8 L440 81.7 L439 81.8 L438 81.7 L437 82 L436 82.1 L435 81.8 L434 83.3 L433 83 L432 83.2 L431 82.2 L430 81.8 L429 82.1 L428 82.2 L427 81.7 L426 81.8 L425 81.5 L424 82.1 L423 81.7 L422 82.3 L421 81.9 L420 81.6 L419 81.8 L418 81.8 L417 81.9 L416 82.2 L415 81.5 L414 81.5 L413 81.8 L412 81.9 L411 81.7 L410 82.1 L409 82.9 L408 81.8 L407 81.7 L406 81.9 L405 82.1 L404 83.6 L403 81.8 L402 82.2 L401 81.7 L400 81.6 L399 81.9 L398 81.5 L397 81.7 L396 82 L395 82.1 L394 81.8 L393 82.9 L392 82 L391 81.5 L390 81.7 L389 82.1 L388 81.9 L387 81.6 L386 82.3 L385 82.2 L384 82.1 L383 82 L382 81.9 L381 82.1 L380 83.6 L379 81.9 L378 82.1 L377 82.1 L376 82 L375 81.9 L374 81.6 L373 82 L372 81.7 L371 82 L370 82 L369 81.7 L368 81.7 L367 82.3 L366 82.1 L365 81.8 L364 81.5 L363 82 L362 82.2 L361 81.8 L360 82.2 L359 81.7 L358 82.2 L357 82.2 L356 83.3 L355 82.2 L354 81.8 L353 81.5 L352 81.6 L351 82.2 L350 81.7 L349 82.2 L348 82.2 L347 81.8 L346 81.9 L345 83.1 L344 81.6 L343 81.7 L342 82.1 L341 81.5 L340 81.8 L339 82.2 L338 81.8 L337 82.3 L336 82.1 L335 81.8 L334 82.3 L333 81.5 L332 82 L331 81.6 L330 81.6 L329 81.5 L328 81.8 L327 81.7 L326 82.3 L325 82.9 L324 82.2 L323 82.2 L322 81.6 L321 82.3 L320 81.9 L319 82.2 L318 81.6 L317 82.2 L316 82 L315 81.7 L314 81.7 L313 81.9 L312 81.6 L311 81.9 L310 81.6 L309 82.1 L308 81.6 L307 81.8 L306 82 L305 82.1 L304 83.1 L303 82.2 L302 81.9 L301 81.6 L300 81.6 L299 82 L298 81.6 L297 81.6 L296 82.2 L295 82 L294 82.1 L293 82 L292 81.7 L291 81.7 L290 82.1 L289 83.2 L288 82.1 L287 83.3 L286 81.9 L285 82 L284 81.9 L283 81.7 L282 81.6 L281 81.7 L280 82.2 L279 81.7 L278 82.3 L277 81.6 L276 81.6 L275 82.2 L274 81.6 L273 82.3 L272 82.2 L271 81.6 L270 82.1 L269 81.9 L268 82 L267 81.9 L266 82.1 L265 83 L264 81.9 L263 82.2 L262 82.2 L261 82.1 L260 81.6 L259 82.1 L258 81.6 L257 83.5 L256 81.5 L255 82 L254 81.5 L253 81.8 L252 81.8 L251 81.6 L250 82.1 L249 82 L248 82.2 L247 82 L246 82.2 L245 81.9 L244 82.3 L243 82.1 L242 81.7 L241 82.1 L240 81.6 L239 81.6 L238 81.9 L237 82 L236 81.9 L235 83 L234 81.6 L233 81.9 L232 81.7 L231 81.8 L230 81.7 L229 81.8 L228 82.1 L227 82.3 L226 82.1 L225 82.1 L224 81.7 L223 81.7 L222 81.7 L221 81.7 L220 82 L219 82.2 L218 81.8 L217 81.9 L216 82 L215 81.7 L214 82.1 L213 81.6 L212 82.1 L211 81.9 L210 81.9 L209 81.6 L208 82 L207 81.5 L206 82.2 L205 81.7 L204 82 L203 81.7 L202 82.1 L201 81.7 L200 82.3 L199 81.8 L198 81.9 L197 81.6 L196 83 L195 81.6 L194 82.3 L193 82.2 L192 82.3 L191 82.2 L190 82.3 L189 82.2 L188 81.6 L187 81.5 L186 81.7 L185 81.7 L184 81.9 L183 81.5 L182 81.6 L181 82.2 L180 82 L179 82 L178 82.3 L177 82.2 L176 81.8 L175 83.1 L174 82 L173 82.1 L172 82.3 L171 82 L170 82 L169 82 L168 81.5 L167 81.6 L166 82.1 L165 82.2 L164 82.2 L163 82.2 L162 82.3 L161 81.8 L160 82.1 L159 81.5 L158 81.7 L157 81.9 L156 82.1 L155 81.8 L154 81.8 L153 82.3 L152 82.2 L151 81.7 L150 82 L149 81.5 L148 81.7 L147 82.1 L146 82.3 L145 81.7 L144 81.8 L143 81.8 L142 81.7 L141 81.6 L140 81.7 L139 81.8 L138 82.1 L137 82 L136 82 L135 81.6 L134 81.8 L133 81.7 L132 81.6 L131 82 L130 82 L129 81.5 L128 82.2 L127 81.8 L126 82.2 L125 81.9 L124 82.3 L123 81.6 L122 82 L121 81.9 L120 83.3 L119 81.7 L118 82.3 L117 82.2 L116 81.7 L115 81.9 L114 81.7 L113 81.6 L112 82.3 L111 82.1 L110 81.6 L109 81.6 L108 82.1 L107 82.1 L106 81.6 L105 82.2 L104 81.9 L103 82.2 L102 82 L101 81.7 L100 82.3 L99 82 L98 82 L97 82.1 L96 82.2 L95 82.1 L94 82.1 L93 81.6 L92 81.5 L91 81.7 L90 82.1 L89 81.9 L88 82.9 L87 81.5 L86 81.5 L85 82 L84 83.5 L83 81.9 L82 81.8 L81 81.8 L80 81.9 L79 82.3 L78 82.2 L77 81.8 L76 82.2 L75 81.8 L74 81.8 L73 82 L72 81.7 L71 81.5 L70 82 L69 81.7 L68 81.5 L67 82.2 L66 82.1 L65 82.2 L64 81.6 L63 81.8 L62 82.2 L61 82.2 L60 81.8 L59 82.1 L58 82.1 L57 82.3 L56 81.9 L55 83.6 L54 81.5 L53 82 L52 82.3 L51 81.6 L50 81.6 L49 81.7 L48 82.2 L47 82.2 L46 81.6 L45 81.7 L44 81.7 L43 82.3 L42 81.8 L41 82.3 L40 82.1 L39 82.2 L38 81.6 L37 81.9 L36 81.8 L35 82 L34 81.7 L33 81.7 L32 81.6 L31 81.8 L30 81.7 L29 81.7 L28 81.6 L27 82.1 L26 81.9 L25 81.5 L24 81.6 L23 81.8 L22 82.1 L21 81.8 L20 82.2 L19 83.5 L18 82.2 L17 81.6 L16 81.8 L15 82.3 L14 81.9 L13 82 L12 81.9 L11 83 L10 83.2 L9 82 L8 82.3 L7 82.1 L6 81.6 L5 81.9 L4 81.9 L3 81.9Z" fill="#f2e51c"/>
<path d="M3.5 198.5V213.6M4.5 198.5V212.3M5.5 198.5V211.6M6.5 198.5V212.2M7.5 198.5V213.8M8.5 198.5V211.7M18.5 198.5V213.4M19.5 198.5V213.5M20.5 198.5V213.9M21.5 198.5V213.8M22.5 198.5V212.6M23.5 198.5V212.7M24.5 198.5V213.3M25.5 198.5V211.8M26.5 198.5V213.6M36.5 198.5V213.9M37.5 198.5V213.4M38.5 198.5V213.3M39.5 198.5V213.5M40.5 198.5V213.6M41.5 198.5V212.8M42.5 198.5V211.6M43.5 198.5V212.7M44.5 198.5V211.6M54.5 198.5V214M55.5 198.5V213.2M56.5 198.5V212.3M57.5 198.5V211.9M58.5 198.5V213.1M59.5 198.5V213.1M60.5 198.5V213.7M61.5 198.5V213.3M62.5 198.5V213.9M72.5 198.5V213.2M73.5 198.5V211.6M74.5 198.5V213M75.5 198.5V212.9M76.5 198.5V214M77.5 198.5V214M78.5 198.5V213.8M79.5 198.5V212.4M90.5 198.5V212.6M91.5 198.5V211.6M92.5 198.5V212.7M93.5 198.5V213.1M94.5 198.5V213.3M95.5 198.5V212M96.5 198.5V213.9M97.5 198.5V212M108.5 198.5V212.8M109.5 198.5V212.6M110.5 198.5V213.1M111.5 198.5V212M112.5 198.5V213.3M113.5 198.5V213.9M114.5 198.5V213.9M115.5 198.5V213.6M126.5 198.5V212M127.5 198.5V211.8M128.5 198.5V213.5M129.5 198.5V213M130.5 198.5V211.7M131.5 198.5V213M132.5 198.5V212.9M133.5 198.5V212.6M134.5 198.5V211.6M135.5 198.5V213.7M144.5 198.5V212.7M145.5 198.5V212.3M146.5 198.5V213M147.5 198.5V214M148.5 198.5V212.4M149.5 198.5V212.9M150.5 198.5V213M151.5 198.5V212.9M152.5 198.5V211.8M153.5 198.5V211.9M154.5 198.5V213.2M155.5 198.5V213.3M156.5 198.5V212.6M162.5 198.5V213.5M163.5 198.5V212M164.5 198.5V211.8M165.5 198.5V213.6M166.5 198.5V213.6M167.5 198.5V211.5M168.5 198.5V211.8M169.5 198.5V211.7M170.5 198.5V212.7M171.5 198.5V211.6M172.5 198.5V212.2M173.5 198.5V211.5M174.5 198.5V211.5M175.5 198.5V213.7M176.5 198.5V212.5M177.5 198.5V214M253.5 198.5V212.7M253.5 80V199M254.5 198.5V212.9M255.5 198.5V212.4M271.5 198.5V213.6M271.5 80V199M272.5 198.5V211.9M273.5 198.5V213.9M274.5 198.5V213.1M275.5 198.5V213M275.5 198.5V213.9M276.5 198.5V211.7M277.5 198.5V212.6M278.5 198.5V213M279.5 198.5V212.2M289.5 198.5V213.3M290.5 198.5V212.7M291.5 198.5V211.8M292.5 198.5V213.6M293.5 198.5V211.7M307.5 198.5V211.5M308.5 198.5V212M309.5 198.5V211.6M310.5 198.5V213.1M311.5 198.5V213.7M312.5 198.5V211.5M313.5 198.5V211.6M325.5 198.5V213.4M326.5 198.5V212.3M327.5 198.5V212.9M328.5 198.5V213.4M329.5 198.5V213.1M330.5 198.5V212.5M331.5 198.5V213.5M332.5 198.5V211.6M333.5 198.5V211.9M343.5 198.5V213.6M344.5 198.5V212.6M345.5 198.5V211.5M346.5 198.5V212.7M347.5 198.5V212.4M348.5 198.5V212.4M349.5 198.5V212.1M350.5 198.5V211.5M351.5 198.5V213.4M352.5 198.5V213.7M361.5 198.5V213.9M362.5 198.5V212.6M363.5 198.5V211.9M364.5 198.5V211.5M365.5 198.5V213.2M366.5 198.5V212.2M367.5 198.5V212.9M368.5 198.5V213.2M369.5 198.5V213.5M370.5 198.5V212.3M379.5 198.5V213.4M380.5 198.5V212.1M381.5 198.5V212.5M382.5 198.5V211.8M383.5 198.5V211.6M384.5 198.5V213.8M385.5 198.5V212.6M386.5 198.5V213.8M387.5 198.5V213.2M388.5 198.5V212.4M397.5 198.5V213.2M398.5 198.5V211.6M399.5 198.5V212.5M400.5 198.5V212.7M401.5 198.5V213.1M402.5 198.5V213.7M403.5 198.5V213M404.5 198.5V212.6M405.5 198.5V213.6M406.5 198.5V212.6M415.5 198.5V213.8M416.5 198.5V212.7M417.5 198.5V212.3M418.5 198.5V211.8M419.5 198.5V213.7M420.5 198.5V212.7M419.5 198.5V213.1M420.5 198.5V211.5M421.5 198.5V212.8M422.5 198.5V213.4M423.5 198.5V213.9M434.5 198.5V213.7M435.5 198.5V213.5M436.5 198.5V213.5M437.5 198.5V213.3M438.5 198.5V213.5M439.5 198.5V213.6M452.5 198.5V213.8M453.5 198.5V213M454.5 198.5V213.9M455.5 198.5V213.5M456.5 198.5V212.3M457.5 198.5V212.8M470.5 198.5V213.5M471.5 198.5V213.1M472.5 198.5V212.6M473.5 198.5V213.4M474.5 198.5V213M473.5 198.5V213.1M474.5 198.5V211.5M475.5 198.5V212.4M476.5 198.5V213.2M477.5 198.5V212M478.5 198.5V213.1M479.5 198.5V212.5M488.5 198.5V212.8M489.5 198.5V213M490.5 198.5V212.4M491.5 198.5V213.9M492.5 198.5V211.5M493.5 198.5V212.9M494.5 198.5V211.6M495.5 198.5V213.8M494.5 198.5V211.9M495.5 198.5V213.7M496.5 198.5V212.2M497.5 198.5V211.8M498.5 198.5V213.7M499.5 198.5V212.3M500.5 198.5V212.5M596.5 198.5V212.4M596.5 80V199M597.5 198.5V213.8M598.5 198.5V212M614.5 198.5V213.7M614.5 80V199M615.5 198.5V211.7M616.5 198.5V212.2M617.5 198.5V212.1M618.5 198.5V212.9M617.5 198.5V213.5M618.5 198.5V212.6M619.5 198.5V212.8M620.5 198.5V212.7M621.5 198.5V213.8M632.5 198.5V213.1M633.5 198.5V213.2M634.5 198.5V213.7M635.5 198.5V213.5M636.5 198.5V211.9M650.5 198.5V213.5M651.5 198.5V213M652.5 198.5V213.1M653.5 198.5V213.4M654.5 198.5V212M655.5 198.5V211.6M668.5 198.5V213.8M669.5 198.5V213.2M670.5 198.5V212M671.5 198.5V213.3M672.5 198.5V213.1M673.5 198.5V213.4M674.5 198.5V213.7M675.5 198.5V211.5M686.5 198.5V214M687.5 198.5V213.7M688.5 198.5V212.2M689.5 198.5V213.2M690.5 198.5V211.6M691.5 198.5V214M692.5 198.5V214M693.5 198.5V212.7M694.5 198.5V213.9M695.5 198.5V212.8M704.5 198.5V212.2M705.5 198.5V213.5M706.5 198.5V213.5M707.5 198.5V212.6M708.5 198.5V211.7M709.5 198.5V211.7M710.5 198.5V211.6M711.5 198.5V213.9M712.5 198.5V212.4M713.5 198.5V213.6M722.5 198.5V213.6M723.5 198.5V213.7M724.5 198.5V213.4M725.5 198.5V212.5M726.5 198.5V212.4M727.5 198.5V211.5M728.5 198.5V211.9M729.5 198.5V211.6M730.5 198.5V211.8M731.5 198.5V212.6M740.5 198.5V212.2M741.5 198.5V213.9M742.5 198.5V212.6M743.5 198.5V213.3M744.5 198.5V213.4M745.5 198.5V212.2M746.5 198.5V211.8M747.5 198.5V213.9M748.5 198.5V213.2M749.5 198.5V211.5M758.5 198.5V213.9M759.5 198.5V212.8M760.5 198.5V212.2M761.5 198.5V213.8M762.5 198.5V211.7M762.5 198.5V212.4M763.5 198.5V212.9M764.5 198.5V212M765.5 198.5V212.1M766.5 198.5V213M776.5 198.5V213M777.5 198.5V211.6M778.5 198.5V212M779.5 198.5V212.1M780.5 198.5V214M781.5 198.5V212.5M782.5 198.5V213.4M794.5 198.5V213.2M795.5 198.5V213.6M796.5 198.5V213.8M797.5 198.5V212.6M798.5 198.5V212.4M799.5 198.5V211.7M800.5 198.5V213.5M812.5 198.5V213.9M813.5 198.5V212.4M814.5 198.5V212.1M815.5 198.5V211.8M816.5 198.5V213.2M816.5 198.5V211.9M817.5 198.5V212.8M818.5 198.5V213.1M819.5 198.5V213.5M820.5 198.5V212.2M821.5 198.5V212.1M830.5 198.5V212.9M831.5 198.5V212M832.5 198.5V212.8M833.5 198.5V213.4M834.5 198.5V212.9M835.5 198.5V213.2M836.5 198.5V213.4M837.5 198.5V212.4M838.5 198.5V213.7M837.5 198.5V213.7M838.5 198.5V212.5M839.5 198.5V211.8M840.5 198.5V212.5M841.5 198.5V212.9M842.5 198.5V213.1M843.5 198.5V212.5M938.5 198.5V212.7M938.5 80V199M939.5 198.5V213.9M940.5 198.5V213.6M941.5 198.5V211.7M956.5 198.5V213.9M956.5 80V199M957.5 198.5V212.8M958.5 198.5V213.3M959.5 198.5V211.8M960.5 198.5V212.3M961.5 198.5V212.8M960.5 198.5V211.8M961.5 198.5V212.5M962.5 198.5V213M963.5 198.5V212.5M964.5 198.5V212.7M975.5 198.5V212.7M976.5 198.5V212.9M977.5 198.5V212M978.5 198.5V212.6M993.5 198.5V213.3M994.5 198.5V211.8M995.5 198.5V213.6M996.5 198.5V212.1M997.5 198.5V213.4M998.5 198.5V212M1011.5 198.5V212.9M1012.5 198.5V211.7M1013.5 198.5V213M1014.5 198.5V211.6M1015.5 198.5V213.8M1016.5 198.5V212.3M1017.5 198.5V212.3M1018.5 198.5V213.6M1029.5 198.5V213.5M1030.5 198.5V213.7M1031.5 198.5V212.6M1032.5 198.5V212.7M1033.5 198.5V213.2M1034.5 198.5V214M1035.5 198.5V212.5M1036.5 198.5V211.7M1037.5 198.5V213.3M1038.5 198.5V212.9M1047.5 198.5V213.1M1048.5 198.5V212.8M1049.5 198.5V212.7M1050.5 198.5V212.3M1051.5 198.5V211.8M1052.5 198.5V211.6M1053.5 198.5V212.2M1054.5 198.5V213.4M1055.5 198.5V212.3M1056.5 198.5V213.5M1065.5 198.5V212.8M1066.5 198.5V212.6M1067.5 198.5V212.8M1068.5 198.5V213.4M1069.5 198.5V212.9M1070.5 198.5V212.9M1071.5 198.5V213.7M1072.5 198.5V212.7M1073.5 198.5V213.6M1074.5 198.5V213M1083.5 198.5V212M1084.5 198.5V212.5M1085.5 198.5V211.6M1086.5 198.5V212.1M1087.5 198.5V212.4M1088.5 198.5V212.9M1089.5 198.5V213.6M1090.5 198.5V211.6M1091.5 198.5V212M1092.5 198.5V214M1101.5 198.5V213.4M1102.5 198.5V212.2M1103.5 198.5V211.7M1104.5 198.5V214M1105.5 198.5V214M1104.5 198.5V212.3M1105.5 198.5V212.4M1106.5 198.5V212.6M1107.5 198.5V213.4M1108.5 198.5V211.9M1119.5 198.5V212.4M1120.5 198.5V213M1121.5 198.5V212.3M1122.5 198.5V213.9M1123.5 198.5V213.9M1124.5 198.5V213.4M1137.5 198.5V212.2M1138.5 198.5V212.3M1139.5 198.5V213.3M1140.5 198.5V212.8M1141.5 198.5V213.5M1142.5 198.5V211.6M1155.5 198.5V212M1156.5 198.5V213.2M1157.5 198.5V211.9M1158.5 198.5V213.4M1159.5 198.5V213.9M1158.5 198.5V211.7M1159.5 198.5V212.4M1160.5 198.5V213.9M1161.5 198.5V212.9M1162.5 198.5V211.7M1163.5 198.5V213M1164.5 198.5V213.9M1173.5 198.5V213.6M1174.5 198.5V211.7M1175.5 198.5V212.2M1176.5 198.5V212.6M1177.5 198.5V213.3M1178.5 198.5V213.9M1179.5 198.5V213M1180.5 198.5V213.4M1180.5 198.5V213.4M1181.5 198.5V212.4M1182.5 198.5V213.5M1183.5 198.5V211.8M1184.5 198.5V213.1M1185.5 198.5V212.8M1281.5 198.5V211.8M1281.5 80V199M1282.5 198.5V212.6M1283.5 198.5V213.3M1299.5 198.5V213.8M1299.5 80V199M1300.5 198.5V211.6M1301.5 198.5V211.8M1302.5 198.5V212M1303.5 198.5V212.2M1303.5 198.5V213.4M1304.5 198.5V213.8M1305.5 198.5V214M1306.5 198.5V213.6M1307.5 198.5V213.2M1317.5 198.5V213.8M1318.5 198.5V212.4M1319.5 198.5V212.6M1320.5 198.5V212.2M1321.5 198.5V211.6M1335.5 198.5V213.8M1336.5 198.5V213.2M1337.5 198.5V212.8M1338.5 198.5V212.4M1339.5 198.5V212.7M1340.5 198.5V212.8M1341.5 198.5V212.1M1353.5 198.5V212.2M1354.5 198.5V212.4M1355.5 198.5V213M1356.5 198.5V213.5M1357.5 198.5V212.1M1358.5 198.5V212.6M1359.5 198.5V212.5M1360.5 198.5V214M1371.5 198.5V212.1M1372.5 198.5V211.5M1373.5 198.5V212M1374.5 198.5V213.4M1375.5 198.5V211.7M1376.5 198.5V213.5M1377.5 198.5V212.7M1378.5 198.5V212.2M1379.5 198.5V213.4M1380.5 198.5V211.7M1389.5 198.5V212.6M1390.5 198.5V212.7M1391.5 198.5V213M1392.5 198.5V212.7M1393.5 198.5V211.8M1394.5 198.5V211.8M1395.5 198.5V213.5M1396.5 198.5V213.8M1397.5 198.5V213.5M1398.5 198.5V213.7M1407.5 198.5V213.4M1408.5 198.5V213.1M1409.5 198.5V212M1410.5 198.5V213.6M1411.5 198.5V211.7M1412.5 198.5V214M1413.5 198.5V212.4M1414.5 198.5V213.7M1415.5 198.5V212.4M1416.5 198.5V212.2M1425.5 198.5V212.3M1426.5 198.5V212.6M1427.5 198.5V212.7M1428.5 198.5V211.6M1429.5 198.5V212.3M1430.5 198.5V212.8M1431.5 198.5V213.1M1432.5 198.5V212.6M1433.5 198.5V213.7M1434.5 198.5V212.4M1443.5 198.5V213.1" stroke="#f2e51c" stroke-width="1" fill="none" shape-rendering="crispEdges"/>
<path d="M5.5 211.6V218.3M6.5 212.2V217M8.5 211.7V215.3M18.5 213.4V219.1M19.5 213.5V216.6M23.5 212.7V216.8M24.5 213.3V217.4M25.5 211.8V215.2M26.5 213.6V215.5M37.5 213.4V217.4M39.5 213.5V214.7M41.5 212.8V214.4M42.5 211.6V215.6M44.5 211.6V213.8M55.5 213.2V217.3M57.5 211.9V213.2M73.5 211.6V216M74.5 213V214.3M75.5 212.9V215.8M90.5 212.6V215.8M91.5 211.6V216.4M92.5 212.7V220.8M96.5 213.9V221.2M97.5 212V213.1M108.5 212.8V216.2M109.5 212.6V218.6M110.5 213.1V216.5M113.5 213.9V216.8M114.5 213.9V222.5M115.5 213.6V214.6M128.5 213.5V217.3M131.5 213V216.8M132.5 212.9V217.2M134.5 211.6V215M144.5 212.7V214.9M145.5 212.3V215.3M146.5 213V214.3M147.5 214V217.1M148.5 212.4V217.1M154.5 213.2V214.3M155.5 213.3V217.5M162.5 213.5V216.7M164.5 211.8V214.9M167.5 211.5V213M168.5 211.8V213.7M171.5 211.6V216.4M175.5 213.7V218.6M177.5 214V217.3M253.5 212.7V217.5M255.5 212.4V214.3M272.5 211.9V215.7M277.5 212.6V217.9M289.5 213.3V216.8M290.5 212.7V221M292.5 213.6V216.1M293.5 211.7V213.7M307.5 211.5V212.9M308.5 212V216.2M309.5 211.6V216.4M310.5 213.1V215.2M311.5 213.7V218.7M312.5 211.5V212.7M313.5 211.6V217.3M325.5 213.4V215.9M326.5 212.3V219.8M327.5 212.9V220.9M329.5 213.1V216.6M344.5 212.6V214.5M347.5 212.4V213.8M349.5 212.1V214.4M350.5 211.5V216M351.5 213.4V218.2M352.5 213.7V216.8M361.5 213.9V216.1M362.5 212.6V215.6M363.5 211.9V218.7M364.5 211.5V214.7M365.5 213.2V214.7M367.5 212.9V220.3M370.5 212.3V217.2M380.5 212.1V217M383.5 211.6V213.3M385.5 212.6V213.9M386.5 213.8V217.1M387.5 213.2V218M397.5 213.2V214.4M398.5 211.6V213.6M399.5 212.5V214.9M400.5 212.7V214.4M402.5 213.7V216.8M403.5 213V217.7M404.5 212.6V215.2M406.5 212.6V218.7M415.5 213.8V215.2M417.5 212.3V216.3M418.5 211.8V215.3M419.5 213.7V219M419.5 213.1V217.1M421.5 212.8V216M422.5 213.4V215.6M423.5 213.9V217.4M435.5 213.5V214.5M436.5 213.5V216.9M437.5 213.3V218M439.5 213.6V216.9M452.5 213.8V216.4M453.5 213V216.6M455.5 213.5V219.7M456.5 212.3V217.1M457.5 212.8V214.3M471.5 213.1V214.8M472.5 212.6V219.3M473.5 213.4V215.1M473.5 213.1V217.3M474.5 211.5V214.1M475.5 212.4V215.8M476.5 213.2V218.3M477.5 212V215.9M478.5 213.1V218.1M488.5 212.8V213.9M491.5 213.9V219.3M492.5 211.5V214.2M493.5 212.9V216.2M494.5 211.6V214.1M495.5 213.7V217.4M496.5 212.2V220M497.5 211.8V214M498.5 213.7V215.3M598.5 212V216.5M615.5 211.7V213.9M617.5 212.1V214.5M618.5 212.6V215.1M619.5 212.8V214.4M620.5 212.7V213.9M634.5 213.7V215.6M635.5 213.5V216.7M651.5 213V215.9M652.5 213.1V215.4M653.5 213.4V215.4M654.5 212V213.4M668.5 213.8V217.9M670.5 212V215M671.5 213.3V220.3M672.5 213.1V218M673.5 213.4V216.6M674.5 213.7V216.9M687.5 213.7V216.9M688.5 212.2V213.5M690.5 211.6V215.7M691.5 214V218.6M692.5 214V216.2M693.5 212.7V216.8M695.5 212.8V217.7M704.5 212.2V216M706.5 213.5V217M707.5 212.6V216.6M708.5 211.7V221M710.5 211.6V214.5M711.5 213.9V217.6M713.5 213.6V216.3M722.5 213.6V215.7M723.5 213.7V217.2M724.5 213.4V217M725.5 212.5V214.2M727.5 211.5V215.9M728.5 211.9V213.4M730.5 211.8V215.6M740.5 212.2V214.9M743.5 213.3V215.4M744.5 213.4V217M746.5 211.8V215.2M748.5 213.2V217.5M749.5 211.5V215.3M761.5 213.8V217.5M762.5 211.7V213.9M762.5 212.4V215.8M763.5 212.9V214.7M764.5 212V218.3M765.5 212.1V215.1M766.5 213V217M778.5 212V213.5M780.5 214V215.3M794.5 213.2V215.5M796.5 213.8V222M799.5 211.7V213M800.5 213.5V216.2M812.5 213.9V217.6M814.5 212.1V214.3M816.5 213.2V221.7M817.5 212.8V214.9M819.5 213.5V222.5M821.5 212.1V217.2M837.5 213.7V220.3M838.5 212.5V216.3M840.5 212.5V219.7M842.5 213.1V216.4M938.5 212.7V218.6M940.5 213.6V218.4M941.5 211.7V214.4M959.5 211.8V214.8M960.5 211.8V215.8M963.5 212.5V214.8M964.5 212.7V217.1M975.5 212.7V217.5M976.5 212.9V219.4M977.5 212V215.9M978.5 212.6V217.4M993.5 213.3V217.4M995.5 213.6V218.2M996.5 212.1V215.3M998.5 212V219.5M1013.5 213V217.9M1029.5 213.5V216.2M1030.5 213.7V220M1032.5 212.7V216M1037.5 213.3V221.1M1038.5 212.9V220.1M1048.5 212.8V214.1M1050.5 212.3V213.9M1051.5 211.8V216.2M1052.5 211.6V213.5M1054.5 213.4V215.9M1055.5 212.3V219.8M1068.5 213.4V215.5M1070.5 212.9V214.7M1071.5 213.7V215M1072.5 212.7V221.6M1073.5 213.6V217.1M1074.5 213V214.6M1083.5 212V215.6M1088.5 212.9V219.6M1092.5 214V215.5M1101.5 213.4V216M1102.5 212.2V223M1104.5 214V217.7M1104.5 212.3V217.4M1105.5 212.4V216.7M1107.5 213.4V215M1120.5 213V216.8M1121.5 212.3V213.3M1123.5 213.9V219.6M1124.5 213.4V214.6M1140.5 212.8V220M1155.5 212V216.2M1156.5 213.2V220.1M1157.5 211.9V216.4M1163.5 213V215.6M1178.5 213.9V215.2M1180.5 213.4V216.1M1180.5 213.4V218.3M1182.5 213.5V216.2M1184.5 213.1V217.4M1185.5 212.8V215.1M1299.5 213.8V223M1300.5 211.6V221.6M1303.5 212.2V217.5M1304.5 213.8V222M1305.5 214V216.2M1307.5 213.2V217.4M1317.5 213.8V221.3M1318.5 212.4V215.8M1319.5 212.6V216.6M1320.5 212.2V217.7M1336.5 213.2V214.7M1337.5 212.8V216.8M1338.5 212.4V217.2M1340.5 212.8V216.4M1354.5 212.4V215.2M1355.5 213V215.2M1356.5 213.5V216.9M1359.5 212.5V219.9M1360.5 214V218.9M1373.5 212V214.1M1374.5 213.4V217.4M1376.5 213.5V217.1M1377.5 212.7V217.6M1378.5 212.2V213.5M1379.5 213.4V217.5M1380.5 211.7V213.8M1392.5 212.7V216.2M1393.5 211.8V214.7M1394.5 211.8V213.3M1395.5 213.5V215.1M1396.5 213.8V217.4M1397.5 213.5V217.5M1398.5 213.7V218.7M1410.5 213.6V215.3M1414.5 213.7V218.3M1415.5 212.4V214.1M1416.5 212.2V215.8M1426.5 212.6V214.5M1433.5 213.7V217.5M1434.5 212.4V214.3M1443.5 213.1V221.9" stroke="#cdbd1e" stroke-width="1" fill="none" shape-rendering="crispEdges"/>
<path d="M3.5 79V196M8.5 79V196M18.5 79V196M26.5 79V196M36.5 79V196M44.5 79V196M54.5 79V196M62.5 79V196M72.5 79V196M79.5 79V196M90.5 79V196M97.5 79V196M108.5 79V196M115.5 79V196M126.5 79V196M135.5 79V196M144.5 79V196M156.5 79V196M162.5 79V196M177.5 79V196M275.5 79V196M275.5 79V196M279.5 79V196M289.5 79V196M293.5 79V196M307.5 79V196M313.5 79V196M325.5 79V196M333.5 79V196M343.5 79V196M352.5 79V196M361.5 79V196M370.5 79V196M379.5 79V196M388.5 79V196M397.5 79V196M406.5 79V196M415.5 79V196M420.5 79V196M419.5 79V196M423.5 79V196M434.5 79V196M439.5 79V196M452.5 79V196M457.5 79V196M470.5 79V196M474.5 79V196M473.5 79V196M479.5 79V196M488.5 79V196M495.5 79V196M494.5 79V196M500.5 79V196M618.5 79V196M617.5 79V196M621.5 79V196M632.5 79V196M636.5 79V196M650.5 79V196M655.5 79V196M668.5 79V196M675.5 79V196M686.5 79V196M695.5 79V196M704.5 79V196M713.5 79V196M722.5 79V196M731.5 79V196M740.5 79V196M749.5 79V196M758.5 79V196M762.5 79V196M762.5 79V196M766.5 79V196M776.5 79V196M782.5 79V196M794.5 79V196M800.5 79V196M812.5 79V196M816.5 79V196M816.5 79V196M821.5 79V196M830.5 79V196M838.5 79V196M837.5 79V196M843.5 79V196M961.5 79V196M960.5 79V196M964.5 79V196M975.5 79V196M978.5 79V196M993.5 79V196M998.5 79V196M1011.5 79V196M1018.5 79V196M1029.5 79V196M1038.5 79V196M1047.5 79V196M1056.5 79V196M1065.5 79V196M1074.5 79V196M1083.5 79V196M1092.5 79V196M1101.5 79V196M1105.5 79V196M1104.5 79V196M1108.5 79V196M1119.5 79V196M1124.5 79V196M1137.5 79V196M1142.5 79V196M1155.5 79V196M1159.5 79V196M1158.5 79V196M1164.5 79V196M1173.5 79V196M1180.5 79V196M1180.5 79V196M1185.5 79V196M1303.5 79V196M1303.5 79V196M1307.5 79V196M1317.5 79V196M1321.5 79V196M1335.5 79V196M1341.5 79V196M1353.5 79V196M1360.5 79V196M1371.5 79V196M1380.5 79V196M1389.5 79V196M1398.5 79V196M1407.5 79V196M1416.5 79V196M1425.5 79V196M1434.5 79V196M1443.5 79V196" stroke="#43b0b8" stroke-width="1" fill="none" shape-rendering="crispEdges"/>
<path d="M4.5 79V196M56.5 79V196M96.5 79V196M109.5 79V196M114.5 79V196M147.5 79V196M148.5 79V196M149.5 79V196M150.5 79V196M151.5 79V196M165.5 79V196M166.5 79V196M273.5 79V196M276.5 79V196M312.5 79V196M328.5 79V196M344.5 79V196M345.5 79V196M346.5 79V196M362.5 79V196M384.5 79V196M403.5 79V196M418.5 79V196M437.5 79V196M456.5 79V196M478.5 79V196M489.5 79V196M493.5 79V196M670.5 79V196M671.5 79V196M673.5 79V196M690.5 79V196M694.5 79V196M706.5 79V196M723.5 79V196M724.5 79V196M744.5 79V196M745.5 79V196M748.5 79V196M761.5 79V196M763.5 79V196M795.5 79V196M798.5 79V196M817.5 79V196M818.5 79V196M820.5 79V196M841.5 79V196M842.5 79V196M958.5 79V196M963.5 79V196M1013.5 79V196M1030.5 79V196M1032.5 79V196M1049.5 79V196M1054.5 79V196M1068.5 79V196M1071.5 79V196M1086.5 79V196M1104.5 79V196M1161.5 79V196M1162.5 79V196M1179.5 79V196M1306.5 79V196M1318.5 79V196M1338.5 79V196M1355.5 79V196M1357.5 79V196M1375.5 79V196M1376.5 79V196M1391.5 79V196M1409.5 79V196M1412.5 79V196" stroke="#3d9298" stroke-width="1" fill="none" shape-rendering="crispEdges"/>
<path d="M5.5 79V196M7.5 79V196M42.5 79V196M43.5 79V196M73.5 79V196M75.5 79V196M133.5 79V196M170.5 79V196M171.5 79V196M291.5 79V196M326.5 79V196M327.5 79V196M330.5 79V196M331.5 79V196M348.5 79V196M381.5 79V196M417.5 79V196M454.5 79V196M455.5 79V196M474.5 79V196M492.5 79V196M498.5 79V196M499.5 79V196M634.5 79V196M635.5 79V196M651.5 79V196M674.5 79V196M687.5 79V196M688.5 79V196M710.5 79V196M725.5 79V196M746.5 79V196M796.5 79V196M815.5 79V196M836.5 79V196M838.5 79V196M840.5 79V196M1088.5 79V196M1120.5 79V196M1122.5 79V196M1138.5 79V196M1177.5 79V196M1181.5 79V196M1339.5 79V196M1340.5 79V196M1373.5 79V196M1378.5 79V196M1394.5 79V196M1395.5 79V196M1415.5 79V196M1431.5 79V196" stroke="#3e959b" stroke-width="1" fill="none" shape-rendering="crispEdges"/>
<path d="M6.5 79V196M19.5 79V196M24.5 79V196M41.5 79V196M57.5 79V196M60.5 79V196M77.5 79V196M91.5 79V196M92.5 79V196M112.5 79V196M113.5 79V196M128.5 79V196M145.5 79V196M152.5 79V196M176.5 79V196M290.5 79V196M308.5 79V196M310.5 79V196M368.5 79V196M382.5 79V196M387.5 79V196M422.5 79V196M436.5 79V196M453.5 79V196M471.5 79V196M475.5 79V196M477.5 79V196M616.5 79V196M652.5 79V196M689.5 79V196M692.5 79V196M705.5 79V196M711.5 79V196M726.5 79V196M729.5 79V196M743.5 79V196M747.5 79V196M759.5 79V196M760.5 79V196M764.5 79V196M765.5 79V196M797.5 79V196M819.5 79V196M835.5 79V196M961.5 79V196M1015.5 79V196M1036.5 79V196M1037.5 79V196M1048.5 79V196M1051.5 79V196M1053.5 79V196M1070.5 79V196M1085.5 79V196M1087.5 79V196M1106.5 79V196M1107.5 79V196M1140.5 79V196M1301.5 79V196M1320.5 79V196M1337.5 79V196M1379.5 79V196M1392.5 79V196M1411.5 79V196M1427.5 79V196M1430.5 79V196" stroke="#3a888e" stroke-width="1" fill="none" shape-rendering="crispEdges"/>
<path d="M20.5 79V196M21.5 79V196M22.5 79V196M23.5 79V196M38.5 79V196M59.5 79V196M74.5 79V196M76.5 79V196M95.5 79V196M129.5 79V196M154.5 79V196M155.5 79V196M167.5 79V196M169.5 79V196M172.5 79V196M175.5 79V196M277.5 79V196M309.5 79V196M311.5 79V196M347.5 79V196M349.5 79V196M350.5 79V196M351.5 79V196M364.5 79V196M365.5 79V196M366.5 79V196M369.5 79V196M380.5 79V196M385.5 79V196M386.5 79V196M400.5 79V196M402.5 79V196M404.5 79V196M419.5 79V196M438.5 79V196M472.5 79V196M473.5 79V196M476.5 79V196M490.5 79V196M496.5 79V196M691.5 79V196M727.5 79V196M777.5 79V196M831.5 79V196M837.5 79V196M839.5 79V196M995.5 79V196M1031.5 79V196M1033.5 79V196M1050.5 79V196M1055.5 79V196M1069.5 79V196M1089.5 79V196M1090.5 79V196M1091.5 79V196M1103.5 79V196M1121.5 79V196M1123.5 79V196M1176.5 79V196M1178.5 79V196M1184.5 79V196M1304.5 79V196M1354.5 79V196M1396.5 79V196M1414.5 79V196" stroke="#3b8d93" stroke-width="1" fill="none" shape-rendering="crispEdges"/>
<path d="M25.5 79V196M37.5 79V196M40.5 79V196M55.5 79V196M58.5 79V196M78.5 79V196M94.5 79V196M110.5 79V196M127.5 79V196M131.5 79V196M146.5 79V196M163.5 79V196M164.5 79V196M174.5 79V196M278.5 79V196M292.5 79V196M363.5 79V196M367.5 79V196M383.5 79V196M398.5 79V196M401.5 79V196M405.5 79V196M416.5 79V196M421.5 79V196M435.5 79V196M495.5 79V196M497.5 79V196M617.5 79V196M672.5 79V196M708.5 79V196M728.5 79V196M730.5 79V196M742.5 79V196M778.5 79V196M779.5 79V196M780.5 79V196M781.5 79V196M799.5 79V196M814.5 79V196M832.5 79V196M960.5 79V196M962.5 79V196M976.5 79V196M994.5 79V196M997.5 79V196M1012.5 79V196M1035.5 79V196M1052.5 79V196M1102.5 79V196M1157.5 79V196M1158.5 79V196M1159.5 79V196M1174.5 79V196M1175.5 79V196M1302.5 79V196M1336.5 79V196M1358.5 79V196M1359.5 79V196M1372.5 79V196M1374.5 79V196M1390.5 79V196M1397.5 79V196M1408.5 79V196M1413.5 79V196M1429.5 79V196M1432.5 79V196" stroke="#42a0a6" stroke-width="1" fill="none" shape-rendering="crispEdges"/>
<path d="M39.5 79V196M61.5 79V196M93.5 79V196M111.5 79V196M130.5 79V196M132.5 79V196M134.5 79V196M153.5 79V196M168.5 79V196M173.5 79V196M274.5 79V196M329.5 79V196M332.5 79V196M399.5 79V196M420.5 79V196M491.5 79V196M494.5 79V196M618.5 79V196M619.5 79V196M620.5 79V196M633.5 79V196M653.5 79V196M654.5 79V196M669.5 79V196M693.5 79V196M707.5 79V196M709.5 79V196M712.5 79V196M741.5 79V196M813.5 79V196M833.5 79V196M834.5 79V196M959.5 79V196M977.5 79V196M996.5 79V196M1014.5 79V196M1016.5 79V196M1017.5 79V196M1034.5 79V196M1066.5 79V196M1067.5 79V196M1072.5 79V196M1073.5 79V196M1084.5 79V196M1105.5 79V196M1139.5 79V196M1141.5 79V196M1156.5 79V196M1160.5 79V196M1163.5 79V196M1182.5 79V196M1183.5 79V196M1305.5 79V196M1319.5 79V196M1356.5 79V196M1377.5 79V196M1393.5 79V196M1410.5 79V196M1426.5 79V196M1428.5 79V196M1433.5 79V196" stroke="#3f979d" stroke-width="1" fill="none" shape-rendering="crispEdges"/>
<path d="M3.5 78.5V89.6M4.5 78.5V89.8M5.5 78.5V87.7M6.5 78.5V85.9M7.5 78.5V88.3M8.5 78.5V85.1M18.5 78.5V84.5M19.5 78.5V85.7M20.5 78.5V87.2M21.5 78.5V84.8M22.5 78.5V84.3M23.5 78.5V88.5M24.5 78.5V87.3M25.5 78.5V84.6M26.5 78.5V89M36.5 78.5V88.6M37.5 78.5V84.2M38.5 78.5V87.7M39.5 78.5V85.9M40.5 78.5V87.9M41.5 78.5V87M42.5 78.5V86.5M43.5 78.5V88.8M44.5 78.5V84.2M54.5 78.5V87.4M55.5 78.5V88.2M56.5 78.5V88.4M57.5 78.5V89.5M58.5 78.5V87M59.5 78.5V86.6M60.5 78.5V87.6M61.5 78.5V89.9M62.5 78.5V85.7M72.5 78.5V84.8M73.5 78.5V84.1M74.5 78.5V86.6M75.5 78.5V89.9M76.5 78.5V88.4M77.5 78.5V84M78.5 78.5V88.6M79.5 78.5V85.5M90.5 78.5V85.3M91.5 78.5V84.6M92.5 78.5V84.5M93.5 78.5V87.6M94.5 78.5V88.6M95.5 78.5V85.3M96.5 78.5V86.5M97.5 78.5V87.1M108.5 78.5V85.9M109.5 78.5V87.9M110.5 78.5V85.1M111.5 78.5V87.6M112.5 78.5V88.1M113.5 78.5V84.3M114.5 78.5V86.5M115.5 78.5V87.7M126.5 78.5V86.7M127.5 78.5V86.6M128.5 78.5V88.2M129.5 78.5V86.7M130.5 78.5V88.3M131.5 78.5V86.1M132.5 78.5V87M133.5 78.5V86.8M134.5 78.5V87.6M135.5 78.5V87.8M144.5 78.5V84.9M145.5 78.5V85.8M146.5 78.5V88.1M147.5 78.5V84.1M148.5 78.5V87M149.5 78.5V88.7M150.5 78.5V89.3M151.5 78.5V87.9M152.5 78.5V85.1M153.5 78.5V86.6M154.5 78.5V84.8M155.5 78.5V87.2M156.5 78.5V86.4M162.5 78.5V86.9M163.5 78.5V86.7M164.5 78.5V84.2M165.5 78.5V84.8M166.5 78.5V84.1M167.5 78.5V85.3M168.5 78.5V84.6M169.5 78.5V87.8M170.5 78.5V88.9M171.5 78.5V88.4M172.5 78.5V87M173.5 78.5V85.1M174.5 78.5V84.8M175.5 78.5V84.8M176.5 78.5V88.1M177.5 78.5V85.2M273.5 78.5V88.3M274.5 78.5V84.8M275.5 78.5V85.3M275.5 78.5V84.4M276.5 78.5V87.2M277.5 78.5V88.8M278.5 78.5V88.8M279.5 78.5V84.6M289.5 78.5V84.6M290.5 78.5V89M291.5 78.5V89.3M292.5 78.5V89.7M293.5 78.5V87.8M307.5 78.5V86.2M308.5 78.5V85.4M309.5 78.5V90M310.5 78.5V89.5M311.5 78.5V88M312.5 78.5V86.7M313.5 78.5V88.6M325.5 78.5V88.7M326.5 78.5V88.2M327.5 78.5V85.8M328.5 78.5V86.6M329.5 78.5V88.8M330.5 78.5V86.5M331.5 78.5V88.1M332.5 78.5V85.1M333.5 78.5V87.7M343.5 78.5V84.7M344.5 78.5V85.9M345.5 78.5V85.9M346.5 78.5V86.8M347.5 78.5V89.1M348.5 78.5V87.9M349.5 78.5V86.8M350.5 78.5V89.3M351.5 78.5V89.4M352.5 78.5V87.5M361.5 78.5V89.3M362.5 78.5V86.7M363.5 78.5V89M364.5 78.5V84.8M365.5 78.5V88.4M366.5 78.5V87M367.5 78.5V84.1M368.5 78.5V84.4M369.5 78.5V88M370.5 78.5V89.5M379.5 78.5V88.6M380.5 78.5V87.8M381.5 78.5V84.6M382.5 78.5V84.9M383.5 78.5V86.6M384.5 78.5V87.9M385.5 78.5V85.6M386.5 78.5V86.8M387.5 78.5V87.3M388.5 78.5V87.3M397.5 78.5V87.9M398.5 78.5V87.8M399.5 78.5V86.2M400.5 78.5V84.7M401.5 78.5V85.8M402.5 78.5V90M403.5 78.5V89.7M404.5 78.5V86.3M405.5 78.5V84.8M406.5 78.5V87.3M415.5 78.5V88.5M416.5 78.5V85.6M417.5 78.5V87.4M418.5 78.5V85.4M419.5 78.5V85.8M420.5 78.5V88.1M419.5 78.5V90M420.5 78.5V84.1M421.5 78.5V87.6M422.5 78.5V88.7M423.5 78.5V86.1M434.5 78.5V86M435.5 78.5V89.4M436.5 78.5V85.9M437.5 78.5V85.4M438.5 78.5V87M439.5 78.5V87.4M452.5 78.5V89.8M453.5 78.5V84.1M454.5 78.5V84.6M455.5 78.5V86.6M456.5 78.5V88.5M457.5 78.5V84.8M470.5 78.5V89.1M471.5 78.5V89M472.5 78.5V87.6M473.5 78.5V86.8M474.5 78.5V88.4M473.5 78.5V85.8M474.5 78.5V84.3M475.5 78.5V88.5M476.5 78.5V88.7M477.5 78.5V88.9M478.5 78.5V89.8M479.5 78.5V88.7M488.5 78.5V85.9M489.5 78.5V89M490.5 78.5V87.9M491.5 78.5V89.5M492.5 78.5V87.7M493.5 78.5V84.1M494.5 78.5V86.4M495.5 78.5V89.1M494.5 78.5V86.1M495.5 78.5V84.3M496.5 78.5V85.9M497.5 78.5V84.7M498.5 78.5V88.6M499.5 78.5V88.5M500.5 78.5V87.6M616.5 78.5V84.4M617.5 78.5V84.3M618.5 78.5V85M617.5 78.5V84.1M618.5 78.5V85.4M619.5 78.5V84.6M620.5 78.5V85.1M621.5 78.5V85.8M632.5 78.5V89.3M633.5 78.5V85M634.5 78.5V89.5M635.5 78.5V86.9M636.5 78.5V86.9M650.5 78.5V85.2M651.5 78.5V84.9M652.5 78.5V86.3M653.5 78.5V89.1M654.5 78.5V84.2M655.5 78.5V90M668.5 78.5V84.4M669.5 78.5V84.6M670.5 78.5V86.4M671.5 78.5V87.4M672.5 78.5V87.7M673.5 78.5V87.9M674.5 78.5V86.4M675.5 78.5V89.4M686.5 78.5V86.6M687.5 78.5V89.7M688.5 78.5V85.2M689.5 78.5V89.7M690.5 78.5V85.6M691.5 78.5V87.4M692.5 78.5V84.9M693.5 78.5V88.7M694.5 78.5V87.9M695.5 78.5V85.4M704.5 78.5V85.8M705.5 78.5V84.2M706.5 78.5V89.9M707.5 78.5V88.3M708.5 78.5V85.4M709.5 78.5V88.4M710.5 78.5V88.6M711.5 78.5V89.2M712.5 78.5V87M713.5 78.5V89M722.5 78.5V87.1M723.5 78.5V89.5M724.5 78.5V86.4M725.5 78.5V85.1M726.5 78.5V86.5M727.5 78.5V87.6M728.5 78.5V89.4M729.5 78.5V87.2M730.5 78.5V88.7M731.5 78.5V87.4M740.5 78.5V84.6M741.5 78.5V88.4M742.5 78.5V84.3M743.5 78.5V84.1M744.5 78.5V89.5M745.5 78.5V84.8M746.5 78.5V87.3M747.5 78.5V85M748.5 78.5V88M749.5 78.5V88.4M758.5 78.5V88.9M759.5 78.5V85.8M760.5 78.5V89.2M761.5 78.5V87M762.5 78.5V87.6M762.5 78.5V87.5M763.5 78.5V89.4M764.5 78.5V89.8M765.5 78.5V88.7M766.5 78.5V86.8M776.5 78.5V85.8M777.5 78.5V85.1M778.5 78.5V89.9M779.5 78.5V86.3M780.5 78.5V87.1M781.5 78.5V89.2M782.5 78.5V89.7M794.5 78.5V89.1M795.5 78.5V86.8M796.5 78.5V89.8M797.5 78.5V85.2M798.5 78.5V88.9M799.5 78.5V86.5M800.5 78.5V87.2M812.5 78.5V86.9M813.5 78.5V89.4M814.5 78.5V86.1M815.5 78.5V87.6M816.5 78.5V88.9M816.5 78.5V89.7M817.5 78.5V84.7M818.5 78.5V87.3M819.5 78.5V87.4M820.5 78.5V84.4M821.5 78.5V87.5M830.5 78.5V85.6M831.5 78.5V89M832.5 78.5V87.8M833.5 78.5V88.4M834.5 78.5V86.4M835.5 78.5V88.9M836.5 78.5V87.8M837.5 78.5V89.9M838.5 78.5V85.2M837.5 78.5V85M838.5 78.5V84.4M839.5 78.5V88.5M840.5 78.5V87.2M841.5 78.5V84.3M842.5 78.5V88M843.5 78.5V85.8M958.5 78.5V87.9M959.5 78.5V85.2M960.5 78.5V85M961.5 78.5V88.1M960.5 78.5V89.6M961.5 78.5V85.1M962.5 78.5V87.2M963.5 78.5V88M964.5 78.5V85.7M975.5 78.5V86.6M976.5 78.5V86.1M977.5 78.5V85.5M978.5 78.5V85.6M993.5 78.5V84.7M994.5 78.5V84.4M995.5 78.5V89.2M996.5 78.5V88M997.5 78.5V84.3M998.5 78.5V90M1011.5 78.5V85M1012.5 78.5V87.9M1013.5 78.5V88.2M1014.5 78.5V87.3M1015.5 78.5V89.1M1016.5 78.5V89.2M1017.5 78.5V84.3M1018.5 78.5V88.5M1029.5 78.5V84.5M1030.5 78.5V85.3M1031.5 78.5V88.9M1032.5 78.5V87.8M1033.5 78.5V88.4M1034.5 78.5V87.1M1035.5 78.5V88.7M1036.5 78.5V86M1037.5 78.5V84.2M1038.5 78.5V86.9M1047.5 78.5V89.9M1048.5 78.5V85M1049.5 78.5V89.9M1050.5 78.5V88M1051.5 78.5V87.9M1052.5 78.5V88.7M1053.5 78.5V84.6M1054.5 78.5V85.8M1055.5 78.5V85.9M1056.5 78.5V85.7M1065.5 78.5V87.2M1066.5 78.5V85.5M1067.5 78.5V89.4M1068.5 78.5V86.3M1069.5 78.5V89.2M1070.5 78.5V84.7M1071.5 78.5V84.8M1072.5 78.5V88.1M1073.5 78.5V84.4M1074.5 78.5V87.3M1083.5 78.5V87M1084.5 78.5V88.5M1085.5 78.5V87.9M1086.5 78.5V89.6M1087.5 78.5V84.8M1088.5 78.5V84.1M1089.5 78.5V89M1090.5 78.5V84.9M1091.5 78.5V85.2M1092.5 78.5V84.1M1101.5 78.5V87.3M1102.5 78.5V89.2M1103.5 78.5V85.7M1104.5 78.5V88.4M1105.5 78.5V87.4M1104.5 78.5V85.3M1105.5 78.5V87.1M1106.5 78.5V87.5M1107.5 78.5V86.7M1108.5 78.5V84.1M1119.5 78.5V86.3M1120.5 78.5V89.3M1121.5 78.5V84.1M1122.5 78.5V85.9M1123.5 78.5V89.9M1124.5 78.5V88.9M1137.5 78.5V86.7M1138.5 78.5V87.9M1139.5 78.5V84.7M1140.5 78.5V85.5M1141.5 78.5V88M1142.5 78.5V89.8M1155.5 78.5V89.6M1156.5 78.5V88.1M1157.5 78.5V85M1158.5 78.5V88.4M1159.5 78.5V84.5M1158.5 78.5V88.6M1159.5 78.5V88.5M1160.5 78.5V87.1M1161.5 78.5V88M1162.5 78.5V89.6M1163.5 78.5V86M1164.5 78.5V87.6M1173.5 78.5V86.3M1174.5 78.5V86.9M1175.5 78.5V86M1176.5 78.5V89.5M1177.5 78.5V86.7M1178.5 78.5V87.8M1179.5 78.5V89.8M1180.5 78.5V87.5M1180.5 78.5V88.6M1181.5 78.5V86.7M1182.5 78.5V84.4M1183.5 78.5V88.4M1184.5 78.5V88.6M1185.5 78.5V86.2M1301.5 78.5V84.8M1302.5 78.5V86.5M1303.5 78.5V89.4M1303.5 78.5V86.8M1304.5 78.5V88.2M1305.5 78.5V85.7M1306.5 78.5V84.9M1307.5 78.5V87.4M1317.5 78.5V89.8M1318.5 78.5V88M1319.5 78.5V85.7M1320.5 78.5V87.9M1321.5 78.5V89M1335.5 78.5V87.7M1336.5 78.5V84.2M1337.5 78.5V88.6M1338.5 78.5V86.9M1339.5 78.5V86.1M1340.5 78.5V87M1341.5 78.5V87M1353.5 78.5V87.8M1354.5 78.5V88.7M1355.5 78.5V85.1M1356.5 78.5V86.4M1357.5 78.5V87.9M1358.5 78.5V87M1359.5 78.5V84.4M1360.5 78.5V88.7M1371.5 78.5V88M1372.5 78.5V89.8M1373.5 78.5V88.8M1374.5 78.5V87.3M1375.5 78.5V86.9M1376.5 78.5V86.7M1377.5 78.5V89.9M1378.5 78.5V88.3M1379.5 78.5V89.6M1380.5 78.5V88.8M1389.5 78.5V86.1M1390.5 78.5V88.2M1391.5 78.5V89.7M1392.5 78.5V89.6M1393.5 78.5V86.8M1394.5 78.5V89.8M1395.5 78.5V85.2M1396.5 78.5V86.7M1397.5 78.5V88.7M1398.5 78.5V89.8M1407.5 78.5V89.8M1408.5 78.5V87.6M1409.5 78.5V87.7M1410.5 78.5V89.2M1411.5 78.5V86.9M1412.5 78.5V88.9M1413.5 78.5V84.6M1414.5 78.5V85.6M1415.5 78.5V86.3M1416.5 78.5V85.3M1425.5 78.5V87.1M1426.5 78.5V86.3M1427.5 78.5V86.4M1428.5 78.5V87.3M1429.5 78.5V89.8M1430.5 78.5V85.3M1431.5 78.5V84.9M1432.5 78.5V85.8M1433.5 78.5V88.8M1434.5 78.5V85.7M1443.5 78.5V85.5" stroke="#42b6be" stroke-width="1" fill="none" shape-rendering="crispEdges"/>
<path d="M3.5 194.1V202.8M4.5 194.3V204.9M5.5 194.1V199.9M6.5 193.5V199.7M7.5 194.3V199.6M8.5 193.9V203.1M18.5 193.7V199.4M19.5 194.6V198.8M20.5 193.7V198.9M21.5 193.9V205.2M22.5 193.9V198.9M23.5 194V199.4M24.5 195.1V199.4M25.5 195V199.3M26.5 194.7V199.7M36.5 194V199.4M37.5 194.2V199.1M38.5 194.2V205.4M39.5 195V199.4M40.5 193.7V199.9M41.5 195V199.2M42.5 194.2V199.9M43.5 195.1V204.1M44.5 194.6V199M54.5 194.5V204.2M55.5 193.8V202.1M56.5 194.1V199.1M57.5 194.4V198.9M58.5 195.2V199.4M59.5 193.7V199.3M60.5 194.5V200M61.5 194.7V199.9M62.5 193.5V199.9M72.5 194.9V199.6M73.5 194.2V203.4M74.5 193.6V199M75.5 193.7V199.3M76.5 194.8V199.4M77.5 194V199M78.5 194.4V199.8M79.5 194.1V199.2M90.5 194.9V199.9M91.5 194.5V199.6M92.5 194.8V199.4M93.5 194.5V199.3M94.5 193.6V198.9M95.5 193.7V199.7M96.5 194V199.9M97.5 193.5V199M108.5 194.7V198.9M109.5 194.2V199.6M110.5 194.4V199.6M111.5 194.4V199M112.5 194.4V199.4M113.5 194.4V198.9M114.5 194.2V199M115.5 194V199.7M126.5 195V201.4M127.5 193.9V198.8M128.5 194.7V199.6M129.5 194.1V199.4M130.5 194.5V198.8M131.5 195.1V199.3M132.5 194.3V200M133.5 195.1V199.9M134.5 195V199M135.5 193.5V200.5M144.5 193.7V199.4M145.5 195.1V199.1M146.5 194.9V198.9M147.5 195V199.7M148.5 194.8V199.9M149.5 194.4V202.1M150.5 193.5V199M151.5 195.1V199.6M152.5 194.8V199.8M153.5 193.6V199.5M154.5 193.9V204.8M155.5 193.5V199.9M156.5 194.8V199.4M162.5 194.6V199.5M163.5 193.9V199.7M164.5 193.8V199.1M165.5 193.7V199.2M166.5 193.4V199.2M167.5 194V199M168.5 193.6V199.2M169.5 193.8V198.9M170.5 193.8V200M171.5 194.6V198.8M172.5 193.6V199.9M173.5 194V202.7M174.5 195.2V199.7M175.5 194.1V199.5M176.5 194.4V199.8M177.5 194.3V199.6M253.5 196.5V201.5M271.5 196.1V200.8M272.5 196.8V201.1M273.5 194.7V199.4M274.5 193.5V199.6M275.5 195.1V199.2M275.5 194.8V199.9M276.5 194V199.9M277.5 193.7V199.1M278.5 194V199.2M279.5 194.4V199.7M289.5 194V199.5M290.5 194.4V200M291.5 194.8V199.5M292.5 194.6V199.6M293.5 194.6V199.6M307.5 195V199.4M308.5 194.1V205M309.5 194.5V199.6M310.5 194.9V199.2M311.5 194.7V199M312.5 193.5V203.9M313.5 194.4V198.8M325.5 194.3V204.3M326.5 194.2V199.5M327.5 194.3V199.3M328.5 193.6V201M329.5 194.6V202.8M330.5 193.5V199.4M331.5 194.9V199.8M332.5 194.9V199.7M333.5 193.7V199.9M343.5 194.7V199.5M344.5 195V198.8M345.5 194.5V205M346.5 193.5V198.8M347.5 194.9V199.1M348.5 193.6V199.5M349.5 193.5V199.3M350.5 195.1V199.6M351.5 194.9V199.8M352.5 195V204.1M361.5 193.8V199M362.5 194.3V200M363.5 195.1V199.4M364.5 194.7V199.4M365.5 193.8V199.3M366.5 194.4V199.1M367.5 194.4V199.6M368.5 194.4V199.9M369.5 195V198.9M370.5 194V199.5M379.5 195V199.4M380.5 195.1V199.9M381.5 194.4V199.7M382.5 194.2V199.7M383.5 194.6V199M384.5 194.3V199.6M385.5 195.1V199M386.5 194.6V202.7M387.5 195.2V199.4M388.5 193.7V199.4M397.5 193.9V199.7M398.5 194.8V199.8M399.5 194.3V199.3M400.5 195.1V201M401.5 194.2V199.3M402.5 193.5V199M403.5 193.5V199.1M404.5 194.7V199.8M405.5 194.6V199.7M406.5 193.9V199.9M415.5 193.8V199.7M416.5 193.6V199.4M417.5 194.3V203.2M418.5 194.7V199.7M419.5 194.6V199.5M420.5 194.3V199.1M419.5 194.6V199M420.5 194.5V199.9M421.5 194.7V199.4M422.5 194.6V199.6M423.5 194.9V199.1M434.5 194.4V198.9M435.5 194.8V199.1M436.5 193.9V199.5M437.5 194.9V199M438.5 193.9V199.4M439.5 195V199.4M452.5 194.4V199.4M453.5 194.7V200M454.5 194V205.8M455.5 195V199.1M456.5 194.4V203.4M457.5 195.1V199.7M470.5 194V199.9M471.5 194.9V199M472.5 193.9V199M473.5 193.8V199M474.5 194.1V199.5M473.5 194.1V201.5M474.5 195.2V198.9M475.5 194.6V199.8M476.5 195.1V199.7M477.5 194.4V199.2M478.5 194.5V200M479.5 193.6V199.3M488.5 194V198.8M489.5 193.4V199.8M490.5 194.7V199.9M491.5 193.7V199M492.5 193.8V198.9M493.5 194.2V199.8M494.5 194V199.2M495.5 194.6V198.9M494.5 193.5V199.6M495.5 195V205.2M496.5 193.8V203.9M497.5 194.6V199M498.5 194.7V199.4M499.5 194.9V203.9M500.5 194.9V200M596.5 196.5V201.5M614.5 196.8V201.5M615.5 196.4V200.5M616.5 193.6V199.9M617.5 194.8V199.1M618.5 193.5V204.1M617.5 193.7V199M618.5 194.5V199.7M619.5 193.9V199.7M620.5 194.3V198.8M621.5 194.5V199.4M632.5 195.2V200M633.5 194V198.9M634.5 193.7V199.8M635.5 194.3V199M636.5 194.6V199.9M650.5 194.6V199.4M651.5 193.7V199M652.5 194.5V200M653.5 194.1V199.3M654.5 193.7V199.8M655.5 195V204.8M668.5 194.1V199.4M669.5 195V198.8M670.5 193.5V199.2M671.5 194.2V199M672.5 195.2V199.9M673.5 194.7V199.1M674.5 193.6V199.2M675.5 194.9V199.2M686.5 193.6V201.9M687.5 194.5V198.9M688.5 193.7V206M689.5 194.7V203.1M690.5 193.6V199.9M691.5 193.5V199.2M692.5 194.2V199.3M693.5 193.9V199.1M694.5 194.4V198.8M695.5 194.5V199.6M704.5 194.2V205.6M705.5 195V199.2M706.5 194.7V199.2M707.5 194V198.8M708.5 195.2V202.8M709.5 193.7V200.9M710.5 194.5V204.4M711.5 193.6V204M712.5 194.2V199.9M713.5 194.6V199.5M722.5 194.3V199.5M723.5 194.1V199.3M724.5 194.4V199.6M725.5 194.2V204.7M726.5 193.7V199.9M727.5 194.3V199.9M728.5 194.7V199.5M729.5 193.7V201.9M730.5 193.5V199.1M731.5 194.7V198.9M740.5 193.6V203.6M741.5 194.3V199.1M742.5 193.8V199.9M743.5 195V199.4M744.5 195V199.9M745.5 193.7V199.8M746.5 194.2V199.8M747.5 194.9V199M748.5 194.5V199.4M749.5 194.9V199.1M758.5 193.8V199M759.5 194V199.5M760.5 193.9V198.8M761.5 194.5V204.8M762.5 193.6V199.3M762.5 194.1V202.6M763.5 193.6V203M764.5 193.6V201.8M765.5 194.3V199.5M766.5 195.2V199M776.5 194.1V199.4M777.5 194.5V203.1M778.5 194.4V199.6M779.5 194V200M780.5 193.9V199.5M781.5 193.4V199.3M782.5 194.9V199.1M794.5 194.1V199.8M795.5 194.5V198.9M796.5 194.5V199.5M797.5 194.2V199M798.5 194.7V201.2M799.5 193.8V199M800.5 194.7V199.9M812.5 194.9V203.3M813.5 193.4V200M814.5 194.1V199.6M815.5 194.2V198.9M816.5 194.8V199M816.5 194.4V199.6M817.5 194V204.6M818.5 193.9V199.1M819.5 194V199.9M820.5 193.9V199.6M821.5 194.6V199.6M830.5 194.7V199.8M831.5 194.4V198.8M832.5 194.5V199.8M833.5 195V199.3M834.5 194.2V198.8M835.5 194.6V204M836.5 194.4V199.2M837.5 194.9V199.8M838.5 195V199.8M837.5 194V199.7M838.5 194.1V199.3M839.5 194.5V199.5M840.5 193.9V199.5M841.5 193.5V199.6M842.5 195.2V199.5M843.5 194.2V199.9M938.5 196.5V201.5M956.5 196.9V201.3M957.5 196.9V201.3M958.5 195.2V199.9M959.5 193.4V199.8M960.5 194.7V199.2M961.5 194.4V199.3M960.5 194.1V199.8M961.5 194.2V199.3M962.5 194.8V199.8M963.5 194.7V199.5M964.5 195.2V198.9M975.5 194.4V199M976.5 195.2V204.2M977.5 194.2V199.9M978.5 194.9V199.1M993.5 194.9V200M994.5 195V199.7M995.5 193.6V199.6M996.5 193.9V199M997.5 195.2V199.9M998.5 194.9V199.2M1011.5 194.2V199.8M1012.5 194.6V199.6M1013.5 193.8V199.7M1014.5 195.2V199.6M1015.5 194.5V199.4M1016.5 194.7V199.3M1017.5 195V198.9M1018.5 193.7V204.7M1029.5 194.6V204.2M1030.5 194.1V198.8M1031.5 194V202M1032.5 193.5V199M1033.5 193.8V199.1M1034.5 194.1V199.9M1035.5 194.5V203.2M1036.5 193.9V199.8M1037.5 194.8V199.7M1038.5 194.8V199M1047.5 195V199.1M1048.5 193.8V199.4M1049.5 193.4V199.5M1050.5 193.6V199.7M1051.5 194.3V198.9M1052.5 194.6V199.5M1053.5 194.9V199.3M1054.5 194.8V200.8M1055.5 195V199.1M1056.5 195.2V199.1M1065.5 194.2V199.7M1066.5 194V199.4M1067.5 193.9V199.4M1068.5 193.9V199.8M1069.5 195V198.8M1070.5 193.9V199.6M1071.5 194.6V199.5M1072.5 193.8V200M1073.5 194.4V199.5M1074.5 193.7V199.2M1083.5 195V199.2M1084.5 194.8V199.6M1085.5 194.9V199.3M1086.5 194.5V199.2M1087.5 194.3V199.7M1088.5 194.2V200M1089.5 193.7V198.8M1090.5 195.1V202.9M1091.5 193.7V199.8M1092.5 193.6V199.2M1101.5 193.7V198.9M1102.5 195.2V199.8M1103.5 194.4V199.9M1104.5 193.9V199.6M1105.5 193.7V199.1M1104.5 195.1V199.5M1105.5 193.8V199.9M1106.5 194.7V203M1107.5 193.7V199.2M1108.5 193.7V200M1119.5 194.8V199.2M1120.5 193.9V199M1121.5 194.2V199M1122.5 194V199.2M1123.5 194.7V199.8M1124.5 193.5V199M1137.5 194.7V199.2M1138.5 194.3V199.7M1139.5 195.2V199M1140.5 194.5V199.2M1141.5 194.4V199.4M1142.5 194.9V199M1155.5 193.4V199.7M1156.5 195V199.8M1157.5 194V201.9M1158.5 193.6V204.3M1159.5 193.8V199M1158.5 194.9V199.3M1159.5 194.9V199.9M1160.5 194.2V199.2M1161.5 193.6V199.1M1162.5 194.7V199.9M1163.5 193.7V199.5M1164.5 193.8V199.5M1173.5 194V199.9M1174.5 195.1V199.2M1175.5 194.2V199.9M1176.5 193.4V199.8M1177.5 193.5V199.6M1178.5 193.7V198.8M1179.5 194.8V198.9M1180.5 194.5V199.1M1180.5 193.4V199.9M1181.5 195V199.6M1182.5 193.5V199.4M1183.5 194V199M1184.5 194.5V199.9M1185.5 193.9V199.1M1281.5 196.5V201.5M1299.5 196.1V200.6M1300.5 196.1V200.5M1301.5 194.1V199.5M1302.5 194.7V199.7M1303.5 194.5V199.5M1303.5 194.6V199.4M1304.5 194.9V202M1305.5 194.5V199.9M1306.5 194.4V199.1M1307.5 193.7V199.5M1317.5 194.6V199.7M1318.5 194.9V199.1M1319.5 194.9V199.7M1320.5 193.7V199.1M1321.5 194.6V199.2M1335.5 194.5V199.9M1336.5 194.5V199.4M1337.5 193.7V201.7M1338.5 193.8V199.5M1339.5 193.6V204.4M1340.5 194.6V199M1341.5 194.7V199.1M1353.5 194.2V198.9M1354.5 194.9V199M1355.5 194.4V199M1356.5 193.6V199.3M1357.5 194.5V199M1358.5 194.5V199.3M1359.5 194.4V199.6M1360.5 194.8V199.3M1371.5 194.2V199.4M1372.5 194.5V199.9M1373.5 193.6V199.6M1374.5 194.3V198.9M1375.5 194.5V199.5M1376.5 194.2V203M1377.5 194.1V199.2M1378.5 194.5V198.8M1379.5 194.8V199.3M1380.5 194.8V199.6M1389.5 193.4V199.4M1390.5 194.9V198.9M1391.5 194.8V199.3M1392.5 194.4V199M1393.5 194.3V199.7M1394.5 193.7V198.9M1395.5 194.7V198.9M1396.5 194.2V199.3M1397.5 194.5V199.1M1398.5 193.5V199.8M1407.5 194.4V198.9M1408.5 195.1V199.2M1409.5 195.2V199.9M1410.5 193.8V199M1411.5 193.8V202.1M1412.5 195.1V199.8M1413.5 194.4V198.9M1414.5 193.8V204.5M1415.5 194.1V204.8M1416.5 194V199.6M1425.5 194.7V199.1M1426.5 194.1V199.2M1427.5 194.7V199.6M1428.5 195V199.1M1429.5 195V199.8M1430.5 193.7V199.4M1431.5 195.1V204.2M1432.5 194.1V199.9M1433.5 194V202.1M1434.5 194.7V198.9M1443.5 193.5V198.9" stroke="#3fc8d0" stroke-width="1" fill="none" shape-rendering="crispEdges"/>
<path d="M3 75.3 L4 75.9 L5 75.7 L6 75.5 L7 75.9 L8 75.5 L9 76 L10 75.7 L11 75.8 L12 76 L13 75.5 L14 76 L15 76 L16 76.1 L17 75.5 L18 75.6 L19 75.9 L20 75.8 L21 76.1 L22 76.1 L23 75.5 L24 76.1 L25 75.8 L26 75.8 L27 76 L28 75.5 L29 75.5 L30 75.9 L31 75.9 L32 75.3 L33 75.4 L34 74.7 L35 75.3 L36 75.9 L37 75.4 L38 74.5 L39 76.1 L40 76 L41 75.9 L42 75.6 L43 74.6 L44 75.6 L45 75.5 L46 76.2 L47 75.7 L48 75.5 L49 76.1 L50 75.3 L51 75.4 L52 75.7 L53 76 L54 75.9 L55 76.1 L56 75.5 L57 76 L58 75.6 L59 74.8 L60 75.5 L61 75.3 L62 76 L63 75.8 L64 74.7 L65 76 L66 75.6 L67 75.5 L68 76 L69 76 L70 75.8 L71 76 L72 74.4 L73 76.2 L74 75.8 L75 75.9 L76 75.4 L77 75.6 L78 75.8 L79 76.2 L80 75.5 L81 75.7 L82 74.8 L83 76.1 L84 75.5 L85 76 L86 75.8 L87 76.2 L88 75.5 L89 75.3 L90 75.4 L91 75.4 L92 76.2 L93 76.1 L94 76.1 L95 76.1 L96 76.1 L97 75.6 L98 75.6 L99 75.7 L100 75.8 L101 75.9 L102 75.7 L103 75.6 L104 75.5 L105 75.7 L106 75.6 L107 75.6 L108 76.1 L109 76.1 L110 76 L111 76 L112 75.9 L113 76.1 L114 75.4 L115 76.1 L116 76 L117 75.4 L118 74.5 L119 75.9 L120 76 L121 75.3 L122 76.1 L123 75.8 L124 75.4 L125 75.5 L126 75.6 L127 76.2 L128 76.2 L129 75.7 L130 75.6 L131 75.6 L132 76 L133 76.1 L134 75.8 L135 75.5 L136 75.7 L137 75.8 L138 75.4 L139 75.9 L140 75.4 L141 75.5 L142 76 L143 75.8 L144 76.1 L145 75.7 L146 75.6 L147 76 L148 75.7 L149 74.9 L150 74.4 L151 75.8 L152 75.7 L153 75.8 L154 76.1 L155 75.4 L156 76 L157 75.5 L158 75.6 L159 75.6 L160 75.9 L161 74.8 L162 75.9 L163 75.6 L164 75.4 L165 75.3 L166 75.6 L167 76 L168 75.9 L169 74.5 L170 76.1 L171 75.9 L172 75.7 L173 76.1 L174 75.7 L175 75.7 L176 75.6 L177 75.5 L178 76.1 L179 75.9 L180 75.4 L181 75.7 L182 75.5 L183 75.6 L184 75.8 L185 75.8 L186 75.9 L187 76.2 L188 76 L189 75.8 L190 76 L191 75.9 L192 75.7 L193 75.8 L194 74.8 L195 75.8 L196 75.4 L197 75.5 L198 76 L199 75.4 L200 76 L201 75.4 L202 75.4 L203 75.9 L204 75.5 L205 76.1 L206 74.9 L207 75.5 L208 76 L209 75.5 L210 75.4 L211 75.9 L212 75.6 L213 75.6 L214 75.7 L215 75.9 L216 75.5 L217 75.3 L218 75.9 L219 75.6 L220 75.6 L221 75.7 L222 75.4 L223 76.1 L224 75.7 L225 75.7 L226 75.7 L227 75.8 L228 75.7 L229 75.6 L230 75.4 L231 75.3 L232 75.3 L233 75.4 L234 75.6 L235 75.3 L236 76 L237 75.3 L238 76.1 L239 75.9 L240 75.7 L241 75.9 L242 75.8 L243 75.7 L244 75.7 L245 75.4 L246 76 L247 76.2 L248 76.1 L249 76 L250 74.5 L251 75.9 L252 75.5 L253 75.9 L254 76.2 L255 76.2 L256 75.8 L257 76 L258 75.8 L259 75.9 L260 75.6 L261 76 L262 75.4 L263 75.9 L264 75.8 L265 75.5 L266 76.2 L267 75.8 L268 75.8 L269 75.8 L270 75.4 L271 76.1 L272 75.9 L273 75.6 L274 76.1 L275 75.9 L276 75.5 L277 75.4 L278 76 L279 75.5 L280 76 L281 75.8 L282 76 L283 75.9 L284 75.5 L285 75.3 L286 76 L287 75.9 L288 75.7 L289 75.7 L290 75.5 L291 75.3 L292 75.4 L293 75.3 L294 75.3 L295 75 L296 75.5 L297 76 L298 76.2 L299 74.5 L300 75.4 L301 75.4 L302 75.4 L303 75.7 L304 75.5 L305 76.1 L306 75.8 L307 76 L308 75.5 L309 75.3 L310 75.6 L311 75.7 L312 75.5 L313 75.7 L314 75.5 L315 74.2 L316 75.4 L317 75.8 L318 74.4 L319 76.1 L320 74.9 L321 74.4 L322 76 L323 75.5 L324 75.6 L325 75.6 L326 76 L327 76 L328 75.5 L329 75.5 L330 75.7 L331 75.9 L332 75.8 L333 75.7 L334 75.6 L335 75.9 L336 75.6 L337 74.2 L338 75.3 L339 76.2 L340 75.7 L341 75.9 L342 76.1 L343 76.1 L344 75.6 L345 76 L346 75.9 L347 75.7 L348 75.6 L349 76 L350 75.8 L351 75.6 L352 75.4 L353 75.9 L354 76.1 L355 75.4 L356 75.6 L357 75.3 L358 75.4 L359 75.4 L360 75.9 L361 75.6 L362 75.4 L363 75.3 L364 75.4 L365 75.6 L366 76 L367 75.9 L368 75.6 L369 75.4 L370 75.8 L371 75.6 L372 75.4 L373 75.6 L374 75.8 L375 75.7 L376 76.2 L377 75.3 L378 75.6 L379 75.7 L380 76 L381 75.4 L382 76.2 L383 75.5 L384 75.8 L385 75.6 L386 76 L387 76.2 L388 75.4 L389 75.6 L390 76.2 L391 76 L392 76 L393 75.8 L394 76.1 L395 75.6 L396 74.4 L397 75.8 L398 75.7 L399 75.8 L400 75.4 L401 75.4 L402 74.8 L403 75.6 L404 76.1 L405 75.3 L406 75.8 L407 75.8 L408 76 L409 75.8 L410 75.3 L411 76.1 L412 75.5 L413 75.6 L414 75.7 L415 74.6 L416 75.4 L417 75.5 L418 75.5 L419 75.5 L420 76.1 L421 75.9 L422 75.6 L423 75.3 L424 76.2 L425 75.8 L426 75.6 L427 75.9 L428 75.3 L429 76.2 L430 76.1 L431 75.8 L432 75.8 L433 75.6 L434 75.7 L435 76.1 L436 75.8 L437 75.5 L438 75.4 L439 76.2 L440 76.2 L441 75.6 L442 75.8 L443 75.6 L444 75.8 L445 75.5 L446 75.6 L447 75.6 L448 76.1 L449 75.5 L450 76 L451 75.9 L452 75.4 L453 75.9 L454 75.4 L455 75.4 L456 75.5 L457 75.8 L458 75.6 L459 75.9 L460 75.4 L461 75.4 L462 75.8 L463 75.7 L464 76.1 L465 75.7 L466 75.5 L467 74.9 L468 75.6 L469 75.5 L470 76.2 L471 75.6 L472 76 L473 75.7 L474 76 L475 75.8 L476 75.5 L477 75.7 L478 76.2 L479 74.8 L480 76.1 L481 76.1 L482 75.6 L483 75.5 L484 75.3 L485 74.8 L486 75.5 L487 76.1 L488 75.3 L489 75.4 L490 75 L491 75.4 L492 75.4 L493 75.8 L494 75.7 L495 75.8 L496 75.6 L497 76 L498 76.2 L499 75.4 L500 75.7 L501 75.4 L502 75.5 L503 76 L504 75.6 L505 75.6 L506 75.5 L507 76.1 L508 75.4 L509 75.6 L510 75.4 L511 75.5 L512 75.4 L513 75.6 L514 75.5 L515 75.4 L516 75.6 L517 74.5 L518 76.1 L519 76.2 L520 76 L521 75.7 L522 76.2 L523 76 L524 76 L525 76.1 L526 76.1 L527 75.8 L528 75.4 L529 75.6 L530 75.8 L531 75.3 L532 76 L533 74.1 L534 76.1 L535 75.5 L536 75.5 L537 76.2 L538 75.4 L539 75.8 L540 75.5 L541 76.1 L542 75.6 L543 75.8 L544 76.1 L545 75.9 L546 75.6 L547 75.6 L548 76.2 L549 76 L550 76.1 L551 75.6 L552 75.7 L553 74.9 L554 75.4 L555 75.4 L556 75.3 L557 75.8 L558 76.1 L559 75.5 L560 75.6 L561 76 L562 76 L563 76.1 L564 75.4 L565 75.5 L566 75.7 L567 75 L568 75.4 L569 76 L570 74.1 L571 76 L572 76.1 L573 76 L574 75.6 L575 76.2 L576 74.8 L577 76.2 L578 75.8 L579 75.7 L580 75.6 L581 75.6 L582 75.4 L583 75.3 L584 75.9 L585 75.7 L586 76 L587 75.3 L588 75.3 L589 75.6 L590 75.5 L591 75.5 L592 76.2 L593 75.4 L594 75.5 L595 75.8 L596 76.1 L597 76.2 L598 75.8 L599 76 L600 75.4 L601 75.4 L602 75.8 L603 76.1 L604 76.2 L605 75.7 L606 76.1 L607 75.7 L608 74.6 L609 75.6 L610 75.5 L611 75.9 L612 76 L613 75.6 L614 75.4 L615 75.4 L616 75.7 L617 75.3 L618 75.8 L619 75.7 L620 75.7 L621 75.4 L622 74.4 L623 76 L624 76.1 L625 75.8 L626 75.7 L627 76 L628 75.3 L629 74.4 L630 74.9 L631 75.6 L632 76.1 L633 75.8 L634 75.9 L635 76.1 L636 75.4 L637 75.8 L638 75 L639 75.6 L640 75.7 L641 75 L642 75.4 L643 76 L644 76 L645 75.4 L646 75.3 L647 75.6 L648 75.5 L649 75.9 L650 75.9 L651 75.7 L652 75.8 L653 74.6 L654 76.1 L655 75.4 L656 75.7 L657 75.5 L658 75.8 L659 75.9 L660 75.8 L661 75.4 L662 75.8 L663 75.9 L664 76.1 L665 75.8 L666 75.9 L667 75.5 L668 75.7 L669 74.9 L670 75.5 L671 75.9 L672 76 L673 76 L674 75.7 L675 75.3 L676 75.8 L677 75.4 L678 76 L679 74.4 L680 75.7 L681 75.8 L682 76 L683 75.5 L684 75.5 L685 75.6 L686 75.6 L687 75.5 L688 75.8 L689 75.7 L690 76.1 L691 75.5 L692 75.3 L693 75.4 L694 75.7 L695 75.9 L696 75.8 L697 76.2 L698 76.1 L699 75.9 L700 75.6 L701 75.6 L702 75.3 L703 75.7 L704 76 L705 76.1 L706 75.7 L707 76 L708 76 L709 74.6 L710 75.6 L711 75.5 L712 75.3 L713 75.3 L714 75.6 L715 75.6 L716 74.6 L717 75.9 L718 75.4 L719 75.3 L720 75.6 L721 75.8 L722 75.4 L723 76.1 L724 75.6 L725 75.4 L726 75.6 L727 75.7 L728 75.6 L729 76.2 L730 75.4 L731 75.7 L732 75.8 L733 75.6 L734 76.2 L735 75.9 L736 74.3 L737 75.8 L738 75.9 L739 76.1 L740 76.1 L741 75.3 L742 75.6 L743 75.7 L744 75.9 L745 75.7 L746 75.6 L747 75.6 L748 76 L749 75.6 L750 74.4 L751 75.8 L752 76 L753 74.8 L754 75.7 L755 75.3 L756 75.3 L757 75.4 L758 76.2 L759 75.7 L760 75.7 L761 75.5 L762 75.7 L763 75.7 L764 76.1 L765 75.8 L766 75.8 L767 75.6 L768 75.9 L769 76 L770 76 L771 75.8 L772 75.8 L773 76.2 L774 74.6 L775 75.9 L776 74.7 L777 76.1 L778 75.5 L779 76 L780 76.2 L781 76 L782 75.7 L783 75.5 L784 75.7 L785 75.9 L786 75.5 L787 75.7 L788 76.1 L789 75.8 L790 75.5 L791 75.8 L792 75.6 L793 75.5 L794 75.6 L795 75.6 L796 75.5 L797 75.9 L798 74.7 L799 75.9 L800 75.9 L801 75.8 L802 75.8 L803 75.5 L804 76 L805 76.2 L806 75.5 L807 75.7 L808 75.8 L809 74.7 L810 76.1 L811 75.8 L812 76 L813 76.1 L814 75.8 L815 75.4 L816 75.4 L817 76.2 L818 75.9 L819 75.9 L820 76.1 L821 75.4 L822 76 L823 75.7 L824 75.7 L825 75.3 L826 75.8 L827 76 L828 75.7 L829 75.6 L830 76.2 L831 75.7 L832 75.9 L833 75.3 L834 75.6 L835 74.9 L836 75.8 L837 76 L838 75.6 L839 75.4 L840 76 L841 75.8 L842 76 L843 76 L844 75.6 L845 76.1 L846 75.9 L847 75.8 L848 76.1 L849 75.4 L850 75.4 L851 76.1 L852 75.6 L853 76.1 L854 75.9 L855 74.6 L856 76.1 L857 75.3 L858 75.5 L859 76.1 L860 75.9 L861 75.8 L862 75.4 L863 76 L864 75.4 L865 75.8 L866 75.9 L867 75.7 L868 76 L869 76.1 L870 76 L871 75.8 L872 75.4 L873 74.2 L874 75.7 L875 75.9 L876 75.5 L877 75.4 L878 75.9 L879 74.7 L880 75.7 L881 74.6 L882 76.2 L883 75.7 L884 75.9 L885 75.5 L886 76 L887 75.6 L888 76.2 L889 75.9 L890 75.4 L891 76.1 L892 75.7 L893 74.6 L894 75.3 L895 75.7 L896 76.2 L897 76.2 L898 75.5 L899 75.8 L900 75.9 L901 75.9 L902 75.9 L903 75.5 L904 75.7 L905 75.3 L906 75.4 L907 75.7 L908 75.5 L909 76 L910 75.8 L911 75.4 L912 76 L913 75.9 L914 76 L915 75.5 L916 76.1 L917 76.2 L918 75.8 L919 76.2 L920 75.9 L921 75.9 L922 76.1 L923 75.5 L924 76.1 L925 74.4 L926 75.9 L927 75.9 L928 75.8 L929 76.1 L930 75.4 L931 75.9 L932 75.5 L933 75.8 L934 75.7 L935 75.7 L936 76 L937 75.9 L938 74.6 L939 76.1 L940 75.8 L941 75.4 L942 75.6 L943 75.6 L944 75.8 L945 75.3 L946 76 L947 76.2 L948 74.6 L949 75.4 L950 75.4 L951 75.7 L952 76.1 L953 76.2 L954 75.8 L955 75.5 L956 75.9 L957 76 L958 75.4 L959 75.5 L960 75.5 L961 75.9 L962 76 L963 75.6 L964 75.7 L965 75.5 L966 75.4 L967 75.6 L968 75.8 L969 75.6 L970 75.8 L971 75.5 L972 76.1 L973 74.7 L974 75.4 L975 76.1 L976 75.7 L977 76.1 L978 75.4 L979 74.9 L980 75.6 L981 75.8 L982 76.2 L983 76.1 L984 76.1 L985 76.1 L986 75.4 L987 75.9 L988 75.4 L989 75.6 L990 75.8 L991 75.9 L992 75.6 L993 75.9 L994 75.9 L995 75.6 L996 76.2 L997 76 L998 75.7 L999 75.6 L1000 75.3 L1001 75.7 L1002 75.4 L1003 76.2 L1004 75.5 L1005 75.7 L1006 75.4 L1007 76 L1008 76.1 L1009 75.5 L1010 76.1 L1011 76 L1012 75.5 L1013 76 L1014 76.1 L1015 75.5 L1016 76.1 L1017 76 L1018 75.6 L1019 75.5 L1020 75.9 L1021 75.7 L1022 76.1 L1023 76 L1024 75.6 L1025 75.5 L1026 75.4 L1027 75.7 L1028 75.9 L1029 75.6 L1030 75.5 L1031 75.5 L1032 75.7 L1033 75.6 L1034 75.3 L1035 75.8 L1036 75.8 L1037 75.5 L1038 75.4 L1039 75.4 L1040 75.9 L1041 75.5 L1042 75.7 L1043 75.5 L1044 74.1 L1045 75.8 L1046 76 L1047 75.5 L1048 75.8 L1049 76 L1050 75.5 L1051 75.8 L1052 75.8 L1053 75.6 L1054 74.6 L1055 75.4 L1056 75.6 L1057 75.7 L1058 75.8 L1059 76 L1060 75.8 L1061 76 L1062 75.4 L1063 76.1 L1064 75.8 L1065 76 L1066 75.8 L1067 75.9 L1068 75.7 L1069 75.8 L1070 75.7 L1071 75.4 L1072 76.1 L1073 76 L1074 76.1 L1075 75.9 L1076 76.2 L1077 74.9 L1078 75.6 L1079 75.4 L1080 75.3 L1081 75.6 L1082 76.1 L1083 75.4 L1084 75.6 L1085 75.4 L1086 76.1 L1087 75.5 L1088 75.8 L1089 76 L1090 75.8 L1091 75.7 L1092 76.2 L1093 76 L1094 75.8 L1095 76 L1096 76.2 L1097 75.9 L1098 76.1 L1099 76 L1100 75.7 L1101 75.4 L1102 74.8 L1103 75.8 L1104 75.7 L1105 76.2 L1106 75.9 L1107 75.4 L1108 76 L1109 75.3 L1110 75.4 L1111 74.7 L1112 75.6 L1113 75.9 L1114 76 L1115 75.6 L1116 75.7 L1117 75.9 L1118 74.5 L1119 75.5 L1120 74.9 L1121 75.8 L1122 75.5 L1123 75.7 L1124 76.1 L1125 75.4 L1126 75.5 L1127 74.6 L1128 76 L1129 76.1 L1130 75.3 L1131 76 L1132 76.1 L1133 75.3 L1134 75.7 L1135 75.8 L1136 75.7 L1137 75.7 L1138 75.9 L1139 75.6 L1140 75.4 L1141 75.5 L1142 75.9 L1143 75.4 L1144 75.8 L1145 74.2 L1146 76.1 L1147 75.9 L1148 75.6 L1149 75.4 L1150 75.5 L1151 75.4 L1152 75.9 L1153 75.7 L1154 74.9 L1155 76.2 L1156 75.6 L1157 75.8 L1158 76.1 L1159 75.6 L1160 74.7 L1161 76.1 L1162 74.6 L1163 75.7 L1164 75.4 L1165 76 L1166 75.4 L1167 75.6 L1168 75.4 L1169 75 L1170 75.4 L1171 75.4 L1172 75.7 L1173 75.9 L1174 74.8 L1175 76.2 L1176 75.5 L1177 76.2 L1178 74.5 L1179 75.3 L1180 75.8 L1181 75.6 L1182 75.5 L1183 75.4 L1184 76.2 L1185 76 L1186 75 L1187 75.3 L1188 76.1 L1189 75.8 L1190 75.6 L1191 75.6 L1192 75.7 L1193 76.2 L1194 76.2 L1195 75.5 L1196 75.9 L1197 75.5 L1198 76.1 L1199 76 L1200 75.3 L1201 75.8 L1202 76.1 L1203 75.4 L1204 76.1 L1205 75.4 L1206 75.3 L1207 75.8 L1208 74.4 L1209 75.5 L1210 75.9 L1211 75.8 L1212 75.9 L1213 75.9 L1214 75.3 L1215 75.7 L1216 75.8 L1217 75.9 L1218 74.8 L1219 75.5 L1220 75.9 L1221 75.9 L1222 75.4 L1223 76.1 L1224 75.8 L1225 76.1 L1226 75.8 L1227 75.5 L1228 75.6 L1229 76 L1230 75.8 L1231 75.9 L1232 75.7 L1233 75.8 L1234 74.7 L1235 76 L1236 75.6 L1237 75.7 L1238 75.9 L1239 75.7 L1240 75.9 L1241 75.6 L1242 75.4 L1243 75.6 L1244 74.6 L1245 75.9 L1246 75.6 L1247 75.5 L1248 76 L1249 75.9 L1250 75.7 L1251 75.6 L1252 75.7 L1253 76.1 L1254 75.5 L1255 75.5 L1256 75.9 L1257 75.7 L1258 76 L1259 74.5 L1260 75.9 L1261 75.4 L1262 75.3 L1263 76.1 L1264 75.4 L1265 75.3 L1266 75.8 L1267 76 L1268 75.4 L1269 75.4 L1270 75.8 L1271 75.6 L1272 75.5 L1273 75.6 L1274 76.2 L1275 76.2 L1276 74.8 L1277 75.9 L1278 75.4 L1279 75.8 L1280 75.5 L1281 75.4 L1282 75.8 L1283 75.9 L1284 75.7 L1285 75.7 L1286 75.9 L1287 75.5 L1288 76 L1289 76.1 L1290 76 L1291 76.2 L1292 76.1 L1293 75.8 L1294 75.5 L1295 76 L1296 75.6 L1297 75.4 L1298 75.6 L1299 75.8 L1300 75 L1301 76 L1302 75.8 L1303 76 L1304 76 L1305 75.6 L1306 75.4 L1307 75.9 L1308 75.8 L1309 75.4 L1310 75.9 L1311 76 L1312 74.4 L1313 76.1 L1314 76.1 L1315 75.7 L1316 75.5 L1317 75.8 L1318 75.4 L1319 76 L1320 75.4 L1321 76 L1322 75.9 L1323 75.9 L1324 75.9 L1325 76 L1326 76.1 L1327 76.1 L1328 75.7 L1329 75.4 L1330 75.8 L1331 75.6 L1332 74.2 L1333 75.9 L1334 75.5 L1335 75.7 L1336 76.2 L1337 76.1 L1338 75.6 L1339 75.4 L1340 75.5 L1341 75.7 L1342 75.8 L1343 74.7 L1344 75.8 L1345 76.1 L1346 75.8 L1347 75.4 L1348 75.9 L1349 75.5 L1350 75.8 L1351 76 L1352 75.8 L1353 76 L1354 75.3 L1355 75.3 L1356 76 L1357 75 L1358 76 L1359 75.5 L1360 76 L1361 75.4 L1362 75.6 L1363 75.7 L1364 74.4 L1365 75.3 L1366 75.6 L1367 75.7 L1368 75.3 L1369 75.8 L1370 76 L1371 75.9 L1372 75.5 L1373 75.9 L1374 75.7 L1375 76.1 L1376 76.2 L1377 75.4 L1378 75.7 L1379 75.8 L1380 75.7 L1381 75.8 L1382 75.6 L1383 76 L1384 75.5 L1385 75.5 L1386 76.1 L1387 75.4 L1388 76.2 L1389 75.7 L1390 75.7 L1391 76.1 L1392 76.2 L1393 75.6 L1394 75.4 L1395 75.6 L1396 76.1 L1397 75.8 L1398 75.8 L1399 76 L1400 75.5 L1401 75.6 L1402 75.4 L1403 76.2 L1404 75.8 L1405 75.9 L1406 75.5 L1407 75.7 L1408 75.7 L1409 75.6 L1410 75.3 L1411 75.8 L1412 75.6 L1413 75.6 L1414 75.5 L1415 74.3 L1416 75.4 L1417 75.4 L1418 75.9 L1419 75.6 L1420 76.1 L1421 75.6 L1422 75.4 L1423 76.1 L1424 75.9 L1425 76 L1426 76 L1427 76.1 L1428 76.1 L1429 76.1 L1430 75.5 L1431 75.9 L1432 76.2 L1433 76 L1434 75.4 L1435 76.1 L1436 75.9 L1437 75.7 L1438 74.9 L1439 76.2 L1440 75.5 L1441 75.3 L1442 75.6 L1443 76.2 L1444 75.5 L1444 78.8 L1443 79 L1442 79 L1441 79 L1440 79 L1439 78.7 L1438 78.9 L1437 79 L1436 78.9 L1435 78.8 L1434 79 L1433 78.7 L1432 78.7 L1431 78.7 L1430 79 L1429 78.8 L1428 78.8 L1427 79 L1426 78.9 L1425 79 L1424 78.8 L1423 78.7 L1422 78.8 L1421 79 L1420 78.7 L1419 78.8 L1418 78.8 L1417 79.1 L1416 78.7 L1415 78.9 L1414 79 L1413 78.9 L1412 79 L1411 79.1 L1410 78.9 L1409 78.8 L1408 78.8 L1407 79 L1406 78.9 L1405 78.8 L1404 79.1 L1403 78.7 L1402 78.9 L1401 78.9 L1400 78.9 L1399 79 L1398 78.8 L1397 78.8 L1396 78.7 L1395 78.8 L1394 78.8 L1393 78.8 L1392 78.9 L1391 79 L1390 78.7 L1389 78.7 L1388 79 L1387 78.8 L1386 78.9 L1385 78.9 L1384 78.9 L1383 78.9 L1382 78.8 L1381 79.1 L1380 78.9 L1379 79 L1378 78.9 L1377 78.8 L1376 78.8 L1375 78.7 L1374 78.8 L1373 79.1 L1372 78.8 L1371 78.8 L1370 79.1 L1369 78.9 L1368 78.7 L1367 79.1 L1366 79 L1365 78.9 L1364 78.8 L1363 79 L1362 78.8 L1361 78.9 L1360 78.9 L1359 78.7 L1358 79 L1357 78.9 L1356 78.8 L1355 78.8 L1354 78.7 L1353 79 L1352 79.1 L1351 78.8 L1350 79 L1349 78.7 L1348 79 L1347 78.9 L1346 78.8 L1345 79 L1344 78.9 L1343 78.9 L1342 78.9 L1341 78.7 L1340 78.7 L1339 79 L1338 78.9 L1337 78.8 L1336 78.9 L1335 78.9 L1334 79.1 L1333 79.1 L1332 78.8 L1331 78.7 L1330 78.9 L1329 78.8 L1328 78.8 L1327 78.8 L1326 78.9 L1325 78.9 L1324 78.8 L1323 78.9 L1322 78.7 L1321 78.9 L1320 79 L1319 78.7 L1318 79 L1317 78.8 L1316 79 L1315 78.9 L1314 78.8 L1313 78.9 L1312 78.9 L1311 78.8 L1310 78.7 L1309 79.1 L1308 78.9 L1307 79 L1306 79 L1305 78.9 L1304 78.9 L1303 78.8 L1302 78.8 L1301 78.8 L1300 79 L1299 78.8 L1298 79.1 L1297 79 L1296 79.1 L1295 79 L1294 78.8 L1293 78.8 L1292 79 L1291 78.9 L1290 78.9 L1289 78.8 L1288 78.7 L1287 79.1 L1286 79.1 L1285 79 L1284 78.9 L1283 78.8 L1282 79.1 L1281 78.8 L1280 78.8 L1279 78.8 L1278 78.8 L1277 78.8 L1276 79.1 L1275 79 L1274 78.9 L1273 78.9 L1272 78.7 L1271 78.7 L1270 78.9 L1269 78.7 L1268 79 L1267 78.9 L1266 79 L1265 78.9 L1264 79.1 L1263 79 L1262 78.7 L1261 79 L1260 79 L1259 78.9 L1258 79 L1257 79 L1256 79 L1255 79.1 L1254 78.8 L1253 78.8 L1252 79.1 L1251 78.9 L1250 78.9 L1249 78.9 L1248 78.8 L1247 78.9 L1246 79 L1245 79 L1244 79 L1243 78.7 L1242 78.9 L1241 78.8 L1240 78.8 L1239 78.8 L1238 78.8 L1237 78.8 L1236 78.8 L1235 79 L1234 78.7 L1233 79 L1232 79 L1231 78.7 L1230 79 L1229 78.7 L1228 78.8 L1227 79 L1226 78.9 L1225 79 L1224 79 L1223 78.8 L1222 78.8 L1221 79 L1220 78.8 L1219 79.1 L1218 78.7 L1217 78.9 L1216 78.9 L1215 78.7 L1214 79 L1213 78.9 L1212 78.9 L1211 78.8 L1210 78.9 L1209 78.9 L1208 78.9 L1207 78.8 L1206 78.8 L1205 78.9 L1204 78.8 L1203 78.9 L1202 78.9 L1201 79.1 L1200 78.9 L1199 78.8 L1198 78.9 L1197 79 L1196 79.1 L1195 78.9 L1194 79.1 L1193 78.8 L1192 78.9 L1191 78.9 L1190 78.8 L1189 78.9 L1188 78.8 L1187 79.1 L1186 79 L1185 78.9 L1184 78.9 L1183 79.1 L1182 78.7 L1181 79 L1180 78.8 L1179 78.7 L1178 79 L1177 78.8 L1176 79 L1175 79 L1174 79.1 L1173 78.8 L1172 79.1 L1171 79 L1170 78.8 L1169 78.8 L1168 78.8 L1167 78.7 L1166 78.8 L1165 79 L1164 78.8 L1163 78.8 L1162 78.7 L1161 78.8 L1160 78.7 L1159 78.9 L1158 78.8 L1157 78.9 L1156 78.9 L1155 79 L1154 78.9 L1153 78.9 L1152 78.7 L1151 78.7 L1150 78.9 L1149 79 L1148 79.1 L1147 78.8 L1146 78.9 L1145 79 L1144 78.9 L1143 78.9 L1142 79.1 L1141 79.1 L1140 78.7 L1139 79.1 L1138 78.9 L1137 79 L1136 78.8 L1135 78.9 L1134 79 L1133 79.1 L1132 79 L1131 79 L1130 79.1 L1129 79.1 L1128 78.9 L1127 78.7 L1126 79.1 L1125 78.8 L1124 79 L1123 78.7 L1122 79 L1121 79 L1120 78.9 L1119 79 L1118 78.8 L1117 79 L1116 79 L1115 79 L1114 78.8 L1113 78.9 L1112 78.7 L1111 78.9 L1110 78.8 L1109 78.9 L1108 78.9 L1107 79 L1106 78.7 L1105 79.1 L1104 79.1 L1103 78.9 L1102 79.1 L1101 78.9 L1100 78.7 L1099 79 L1098 79 L1097 78.8 L1096 79 L1095 79 L1094 78.7 L1093 78.7 L1092 78.9 L1091 78.9 L1090 79 L1089 78.9 L1088 78.9 L1087 78.9 L1086 78.8 L1085 78.9 L1084 79 L1083 78.7 L1082 79 L1081 78.8 L1080 78.9 L1079 78.9 L1078 79 L1077 79 L1076 78.8 L1075 78.9 L1074 79.1 L1073 78.7 L1072 79 L1071 79.1 L1070 79 L1069 79 L1068 78.9 L1067 79.1 L1066 78.8 L1065 79 L1064 79 L1063 79 L1062 79 L1061 78.9 L1060 78.8 L1059 78.9 L1058 78.9 L1057 78.8 L1056 78.9 L1055 78.9 L1054 79 L1053 78.9 L1052 78.8 L1051 78.9 L1050 78.7 L1049 78.7 L1048 78.7 L1047 78.8 L1046 79.1 L1045 78.8 L1044 79 L1043 78.8 L1042 78.8 L1041 79.1 L1040 79 L1039 79 L1038 78.7 L1037 79.1 L1036 79 L1035 78.9 L1034 79.1 L1033 79.1 L1032 79 L1031 79.1 L1030 78.9 L1029 79 L1028 79.1 L1027 79 L1026 78.7 L1025 78.7 L1024 78.9 L1023 78.7 L1022 78.7 L1021 78.9 L1020 79 L1019 79.1 L1018 79 L1017 79.1 L1016 79 L1015 79 L1014 79.1 L1013 79.1 L1012 78.8 L1011 79 L1010 79 L1009 78.8 L1008 78.9 L1007 78.8 L1006 79.1 L1005 79 L1004 78.9 L1003 78.9 L1002 79 L1001 78.8 L1000 79.1 L999 78.7 L998 78.8 L997 78.7 L996 78.8 L995 78.7 L994 78.8 L993 79 L992 78.9 L991 78.7 L990 78.8 L989 78.9 L988 78.9 L987 78.8 L986 79 L985 78.8 L984 79 L983 78.7 L982 78.9 L981 78.9 L980 78.7 L979 79 L978 79 L977 79.1 L976 78.9 L975 78.7 L974 78.9 L973 78.9 L972 79 L971 78.8 L970 78.8 L969 78.9 L968 79 L967 78.7 L966 79.1 L965 79 L964 79 L963 78.8 L962 79.1 L961 78.7 L960 78.9 L959 78.8 L958 79 L957 78.8 L956 79 L955 79 L954 78.9 L953 78.7 L952 78.9 L951 78.9 L950 78.9 L949 78.8 L948 78.8 L947 79 L946 79.1 L945 78.9 L944 79.1 L943 79 L942 78.8 L941 79.1 L940 79 L939 78.7 L938 78.8 L937 79.1 L936 79.1 L935 78.8 L934 78.8 L933 78.8 L932 79 L931 79 L930 79.1 L929 78.8 L928 78.9 L927 79 L926 78.9 L925 79 L924 78.8 L923 78.8 L922 78.8 L921 79 L920 79 L919 78.8 L918 78.9 L917 78.9 L916 78.8 L915 79.1 L914 79 L913 79.1 L912 78.9 L911 78.9 L910 79 L909 78.9 L908 79 L907 79.1 L906 78.8 L905 78.9 L904 78.7 L903 78.8 L902 78.7 L901 78.9 L900 79 L899 78.8 L898 79 L897 79 L896 78.9 L895 78.8 L894 79.1 L893 78.9 L892 78.8 L891 78.7 L890 78.7 L889 79 L888 79 L887 79.1 L886 79.1 L885 78.8 L884 78.9 L883 78.7 L882 78.9 L881 78.9 L880 78.8 L879 78.7 L878 78.9 L877 78.8 L876 78.9 L875 78.7 L874 78.9 L873 79 L872 78.8 L871 78.8 L870 78.9 L869 78.9 L868 78.7 L867 79 L866 79 L865 78.9 L864 78.7 L863 78.8 L862 78.9 L861 79 L860 78.9 L859 79.1 L858 78.8 L857 79.1 L856 78.8 L855 79.1 L854 79 L853 79 L852 78.9 L851 79 L850 78.9 L849 79 L848 78.9 L847 78.8 L846 78.7 L845 79 L844 78.8 L843 78.8 L842 78.8 L841 79.1 L840 79 L839 78.9 L838 79 L837 79 L836 79 L835 78.8 L834 78.8 L833 78.8 L832 78.9 L831 79 L830 78.8 L829 79.1 L828 78.8 L827 79.1 L826 79 L825 78.9 L824 79 L823 79 L822 78.8 L821 78.8 L820 79 L819 79 L818 78.8 L817 78.8 L816 78.7 L815 78.9 L814 78.8 L813 79 L812 78.8 L811 79 L810 78.9 L809 79 L808 78.9 L807 79.1 L806 78.7 L805 78.9 L804 78.8 L803 79.1 L802 78.8 L801 79 L800 79.1 L799 78.8 L798 78.8 L797 79 L796 78.9 L795 78.9 L794 79.1 L793 79 L792 78.8 L791 78.9 L790 78.8 L789 78.9 L788 78.7 L787 78.9 L786 78.9 L785 78.8 L784 78.8 L783 78.7 L782 79.1 L781 78.7 L780 78.8 L779 78.8 L778 78.9 L777 79 L776 79 L775 78.9 L774 79.1 L773 78.8 L772 78.8 L771 79 L770 78.9 L769 78.9 L768 78.8 L767 78.7 L766 78.8 L765 78.9 L764 78.7 L763 79 L762 78.7 L761 78.8 L760 78.9 L759 79 L758 78.8 L757 79.1 L756 78.7 L755 78.7 L754 79 L753 78.8 L752 78.8 L751 78.7 L750 78.9 L749 78.9 L748 78.8 L747 78.8 L746 79 L745 78.8 L744 78.7 L743 78.9 L742 79 L741 78.7 L740 78.8 L739 79.1 L738 79.1 L737 78.7 L736 78.8 L735 78.7 L734 78.8 L733 78.8 L732 78.8 L731 79.1 L730 78.9 L729 79 L728 78.9 L727 78.7 L726 79.1 L725 78.7 L724 78.9 L723 78.9 L722 78.8 L721 78.9 L720 78.9 L719 79.1 L718 79 L717 78.7 L716 79.1 L715 78.9 L714 78.7 L713 78.8 L712 78.9 L711 79.1 L710 79.1 L709 79 L708 78.8 L707 79 L706 79 L705 78.8 L704 78.8 L703 79 L702 78.8 L701 79 L700 78.9 L699 78.7 L698 78.9 L697 78.9 L696 78.9 L695 78.9 L694 79 L693 78.7 L692 78.9 L691 79 L690 79 L689 78.9 L688 79 L687 78.8 L686 79 L685 78.8 L684 78.9 L683 78.8 L682 78.8 L681 78.9 L680 78.8 L679 78.7 L678 78.7 L677 78.8 L676 79.1 L675 79 L674 78.9 L673 78.8 L672 78.9 L671 78.8 L670 78.8 L669 78.9 L668 79 L667 78.9 L666 78.7 L665 78.7 L664 78.7 L663 78.7 L662 79 L661 78.7 L660 78.8 L659 79.1 L658 79.1 L657 78.7 L656 78.8 L655 78.9 L654 78.9 L653 78.7 L652 78.9 L651 79 L650 79 L649 78.9 L648 79 L647 79 L646 79.1 L645 79 L644 78.8 L643 79 L642 78.9 L641 79 L640 79.1 L639 79.1 L638 79.1 L637 78.7 L636 78.7 L635 78.9 L634 79.1 L633 78.7 L632 78.8 L631 78.9 L630 78.9 L629 79 L628 79 L627 79 L626 79 L625 78.7 L624 78.7 L623 79 L622 78.8 L621 78.8 L620 79.1 L619 79 L618 79 L617 78.8 L616 78.8 L615 78.9 L614 78.7 L613 78.7 L612 79 L611 79 L610 78.9 L609 79.1 L608 78.9 L607 79 L606 78.9 L605 78.7 L604 78.8 L603 78.8 L602 78.9 L601 78.9 L600 79 L599 78.7 L598 78.8 L597 79.1 L596 78.9 L595 79 L594 78.7 L593 78.8 L592 78.7 L591 78.8 L590 78.9 L589 79 L588 79.1 L587 78.9 L586 79.1 L585 79.1 L584 78.8 L583 78.9 L582 78.9 L581 78.7 L580 79.1 L579 79.1 L578 79 L577 79 L576 78.9 L575 79.1 L574 78.9 L573 78.9 L572 78.9 L571 78.8 L570 78.8 L569 79.1 L568 79.1 L567 78.7 L566 78.9 L565 78.8 L564 78.8 L563 79.1 L562 79.1 L561 78.8 L560 79.1 L559 78.8 L558 79 L557 78.9 L556 78.8 L555 78.7 L554 78.8 L553 79.1 L552 78.8 L551 79 L550 78.8 L549 78.7 L548 78.9 L547 79 L546 79 L545 78.9 L544 79 L543 78.9 L542 78.8 L541 79 L540 79.1 L539 78.8 L538 78.9 L537 78.7 L536 78.9 L535 78.8 L534 78.8 L533 78.8 L532 78.7 L531 78.9 L530 78.7 L529 78.9 L528 79.1 L527 79 L526 78.8 L525 78.8 L524 78.8 L523 78.9 L522 78.9 L521 78.8 L520 78.9 L519 78.7 L518 78.9 L517 78.9 L516 78.9 L515 78.7 L514 78.9 L513 78.9 L512 78.9 L511 78.8 L510 78.8 L509 78.8 L508 78.8 L507 78.9 L506 78.7 L505 78.7 L504 79 L503 78.9 L502 78.9 L501 78.9 L500 78.7 L499 79 L498 79 L497 78.7 L496 78.9 L495 78.7 L494 78.7 L493 78.9 L492 79.1 L491 79.1 L490 78.9 L489 78.9 L488 78.8 L487 78.7 L486 79 L485 78.9 L484 79.1 L483 79 L482 78.8 L481 78.7 L480 78.7 L479 79 L478 79.1 L477 79.1 L476 79 L475 79 L474 78.8 L473 79 L472 79.1 L471 79 L470 78.8 L469 79 L468 78.8 L467 78.9 L466 78.7 L465 79.1 L464 78.9 L463 79 L462 78.7 L461 78.7 L460 78.8 L459 78.9 L458 79.1 L457 78.9 L456 78.8 L455 78.9 L454 79 L453 79.1 L452 79 L451 78.9 L450 78.8 L449 78.9 L448 78.8 L447 78.9 L446 78.8 L445 78.8 L444 78.9 L443 79.1 L442 79 L441 78.9 L440 79.1 L439 79 L438 78.8 L437 78.8 L436 78.8 L435 79 L434 78.8 L433 78.7 L432 78.9 L431 79.1 L430 78.7 L429 78.7 L428 79 L427 78.9 L426 78.8 L425 78.7 L424 79.1 L423 78.7 L422 78.9 L421 79 L420 79 L419 78.9 L418 79 L417 79.1 L416 79.1 L415 78.9 L414 79 L413 78.8 L412 79.1 L411 79 L410 79 L409 78.9 L408 78.8 L407 78.7 L406 79.1 L405 78.8 L404 78.9 L403 78.9 L402 78.8 L401 78.8 L400 78.8 L399 78.8 L398 79.1 L397 79 L396 78.9 L395 78.8 L394 78.8 L393 78.8 L392 78.8 L391 79 L390 78.9 L389 78.8 L388 78.9 L387 78.7 L386 79 L385 78.7 L384 79 L383 79 L382 78.8 L381 78.9 L380 78.7 L379 79 L378 79 L377 78.8 L376 79.1 L375 78.9 L374 79 L373 79.1 L372 78.8 L371 78.9 L370 79.1 L369 79 L368 79.1 L367 78.9 L366 79.1 L365 78.8 L364 78.8 L363 78.7 L362 78.8 L361 78.8 L360 79 L359 78.9 L358 78.7 L357 78.8 L356 78.7 L355 78.7 L354 78.8 L353 78.8 L352 78.9 L351 79 L350 79 L349 78.8 L348 79.1 L347 79.1 L346 79.1 L345 79.1 L344 79 L343 79.1 L342 79 L341 79.1 L340 79.1 L339 78.8 L338 78.9 L337 79.1 L336 78.9 L335 78.8 L334 79 L333 79 L332 78.8 L331 78.8 L330 79 L329 79 L328 78.7 L327 78.7 L326 78.9 L325 79 L324 78.8 L323 79.1 L322 79 L321 78.7 L320 78.8 L319 78.9 L318 78.9 L317 78.9 L316 78.9 L315 79 L314 79.1 L313 78.9 L312 79.1 L311 78.8 L310 79.1 L309 79.1 L308 78.9 L307 79 L306 79.1 L305 78.9 L304 78.7 L303 79 L302 79 L301 78.8 L300 78.8 L299 78.8 L298 78.8 L297 78.7 L296 78.7 L295 79 L294 78.8 L293 78.9 L292 79 L291 78.7 L290 78.9 L289 79 L288 78.9 L287 79.1 L286 78.9 L285 78.9 L284 78.8 L283 78.8 L282 78.9 L281 78.9 L280 79.1 L279 78.7 L278 79.1 L277 78.9 L276 79 L275 78.9 L274 78.8 L273 78.9 L272 78.9 L271 79 L270 79 L269 78.9 L268 79 L267 78.7 L266 78.8 L265 78.9 L264 78.8 L263 79 L262 78.8 L261 78.7 L260 79.1 L259 79 L258 78.7 L257 78.8 L256 79 L255 78.9 L254 78.7 L253 78.9 L252 78.7 L251 79 L250 78.9 L249 79.1 L248 78.7 L247 78.8 L246 78.8 L245 78.9 L244 78.8 L243 78.9 L242 78.8 L241 78.9 L240 79.1 L239 78.9 L238 79 L237 78.9 L236 79 L235 78.8 L234 79 L233 79.1 L232 79.1 L231 79 L230 79 L229 79 L228 78.8 L227 78.8 L226 79.1 L225 78.8 L224 78.8 L223 78.9 L222 79 L221 78.7 L220 79 L219 78.7 L218 79 L217 78.8 L216 79 L215 78.9 L214 79.1 L213 78.7 L212 79.1 L211 78.9 L210 78.8 L209 79 L208 79.1 L207 78.8 L206 78.9 L205 79 L204 78.9 L203 78.7 L202 78.8 L201 79.1 L200 78.9 L199 78.9 L198 78.8 L197 78.8 L196 79.1 L195 79 L194 79 L193 78.9 L192 79.1 L191 78.8 L190 79 L189 78.9 L188 78.7 L187 79 L186 79 L185 78.8 L184 79 L183 78.8 L182 78.7 L181 78.9 L180 78.9 L179 78.9 L178 78.9 L177 79 L176 78.8 L175 79 L174 78.8 L173 78.9 L172 78.9 L171 78.7 L170 78.9 L169 79 L168 78.7 L167 78.9 L166 78.8 L165 78.8 L164 79 L163 79 L162 78.7 L161 79 L160 78.9 L159 79.1 L158 78.8 L157 78.8 L156 78.7 L155 78.9 L154 78.9 L153 79 L152 79.1 L151 79 L150 78.9 L149 79 L148 79 L147 78.7 L146 79 L145 78.9 L144 78.7 L143 79 L142 79 L141 78.7 L140 78.7 L139 79.1 L138 79 L137 79.1 L136 78.7 L135 79.1 L134 79 L133 79.1 L132 79 L131 78.9 L130 79.1 L129 79 L128 78.8 L127 78.9 L126 78.8 L125 78.7 L124 78.9 L123 78.7 L122 78.7 L121 78.9 L120 78.9 L119 78.8 L118 79.1 L117 78.8 L116 78.9 L115 78.9 L114 78.8 L113 78.8 L112 79 L111 78.7 L110 78.8 L109 79.1 L108 78.8 L107 79 L106 79 L105 78.9 L104 79 L103 78.7 L102 78.8 L101 78.9 L100 78.8 L99 78.7 L98 79.1 L97 78.7 L96 78.8 L95 79.1 L94 78.9 L93 79 L92 79 L91 79.1 L90 79 L89 78.8 L88 78.9 L87 78.8 L86 78.9 L85 78.8 L84 79 L83 79 L82 79 L81 79 L80 79 L79 78.8 L78 79 L77 79 L76 78.7 L75 78.8 L74 78.9 L73 78.9 L72 79 L71 78.7 L70 79 L69 78.8 L68 78.9 L67 78.8 L66 79.1 L65 78.7 L64 79.1 L63 79 L62 78.7 L61 78.8 L60 78.8 L59 79.1 L58 78.8 L57 79.1 L56 78.8 L55 78.9 L54 78.9 L53 79 L52 78.8 L51 78.7 L50 78.7 L49 79 L48 79 L47 79 L46 79.1 L45 78.8 L44 78.9 L43 78.8 L42 79 L41 78.8 L40 78.9 L39 78.9 L38 78.7 L37 78.9 L36 79 L35 79.1 L34 78.9 L33 78.9 L32 79.1 L31 78.8 L30 78.8 L29 78.7 L28 79 L27 78.9 L26 79 L25 78.7 L24 78.9 L23 79 L22 78.9 L21 78.8 L20 78.8 L19 79.1 L18 78.8 L17 79.1 L16 78.8 L15 79 L14 79 L13 78.9 L12 79 L11 78.9 L10 78.8 L9 78.8 L8 78.7 L7 79.1 L6 78.9 L5 78.7 L4 78.9 L3 78.9Z" fill="#3fd0d8"/>
<rect x="777.8" y="80" width="1.1" height="118" fill="#f2e51c"/>
<rect x="1138.5" y="80" width="1.1" height="118" fill="#f2e51c"/>
<line x1="147.5" y1="54.4" x2="147.5" y2="242" stroke="#cfcfcf" stroke-width="1" stroke-dasharray="1 2.77"/>
<line x1="291.5" y1="54.4" x2="291.5" y2="242" stroke="#cfcfcf" stroke-width="1" stroke-dasharray="1 2.77"/>
<line x1="435.5" y1="54.4" x2="435.5" y2="242" stroke="#cfcfcf" stroke-width="1" stroke-dasharray="1 2.77"/>
<line x1="579.5" y1="54.4" x2="579.5" y2="242" stroke="#cfcfcf" stroke-width="1" stroke-dasharray="1 2.77"/>
<line x1="723.5" y1="54.4" x2="723.5" y2="242" stroke="#cfcfcf" stroke-width="1" stroke-dasharray="1 2.77"/>
<line x1="867.5" y1="54.4" x2="867.5" y2="242" stroke="#cfcfcf" stroke-width="1" stroke-dasharray="1 2.77"/>
<line x1="1012.5" y1="54.4" x2="1012.5" y2="242" stroke="#cfcfcf" stroke-width="1" stroke-dasharray="1 2.77"/>
<line x1="1156.5" y1="54.4" x2="1156.5" y2="242" stroke="#cfcfcf" stroke-width="1" stroke-dasharray="1 2.77"/>
<line x1="1300.5" y1="54.4" x2="1300.5" y2="242" stroke="#cfcfcf" stroke-width="1" stroke-dasharray="1 2.77"/>
<line x1="3.5" y1="54.4" x2="3.5" y2="242" stroke="#cfcfcf" stroke-width="1" stroke-dasharray="1 2.77"/>
<rect x="3" y="147.5" width="1441" height="1.6" fill="#f030e8"/>
<rect x="3" y="142" width="4.9" height="13.5" fill="#ffffff"/>
<rect x="2" y="142" width="0.8" height="13.5" fill="#30e030"/>
<rect x="2.9" y="142" width="0.8" height="13.5" fill="#f0e000"/>
<rect x="3.1" y="142" width="3.9" height="13.5" fill="#00f0ff"/>
<rect x="7.1" y="142" width="0.9" height="13.5" fill="#ff2020"/>
<rect x="19" y="142" width="7.2" height="13.5" fill="#ffffff"/>
<rect x="19" y="142" width="0.8" height="13.5" fill="#30e030"/>
<rect x="19.9" y="142" width="0.8" height="13.5" fill="#f0e000"/>
<rect x="20.4" y="142" width="4.9" height="13.5" fill="#00f0ff"/>
<rect x="25.4" y="142" width="0.9" height="13.5" fill="#ff2020"/>
<rect x="36.6" y="142" width="7.7" height="13.5" fill="#ffffff"/>
<rect x="36.6" y="142" width="0.8" height="13.5" fill="#30e030"/>
<rect x="37.5" y="142" width="0.8" height="13.5" fill="#f0e000"/>
<rect x="38.1" y="142" width="5.3" height="13.5" fill="#00f0ff"/>
<rect x="43.5" y="142" width="0.9" height="13.5" fill="#ff2020"/>
<rect x="54.4" y="142" width="7.9" height="13.5" fill="#ffffff"/>
<rect x="54.4" y="142" width="0.8" height="13.5" fill="#30e030"/>
<rect x="55.3" y="142" width="0.8" height="13.5" fill="#f0e000"/>
<rect x="55.9" y="142" width="5.5" height="13.5" fill="#00f0ff"/>
<rect x="61.5" y="142" width="0.9" height="13.5" fill="#ff2020"/>
<rect x="72.4" y="142" width="6.5" height="13.5" fill="#ffffff"/>
<rect x="72.4" y="142" width="0.9" height="13.5" fill="#ff6010"/>
<rect x="73.3" y="142" width="0.7" height="13.5" fill="#ffffff"/>
<rect x="74" y="142" width="0.9" height="13.5" fill="#f0e000"/>
<rect x="74.9" y="142" width="0.7" height="13.5" fill="#ffffff"/>
<rect x="75.6" y="142" width="0.9" height="13.5" fill="#00e8f8"/>
<rect x="76.5" y="142" width="0.7" height="13.5" fill="#ffffff"/>
<rect x="77.2" y="142" width="0.9" height="13.5" fill="#ff3020"/>
<rect x="78.1" y="142" width="0.9" height="13.5" fill="#ff2020"/>
<rect x="90.2" y="142" width="6.9" height="13.5" fill="#ffffff"/>
<rect x="90.2" y="142" width="0.9" height="13.5" fill="#ff6010"/>
<rect x="91.1" y="142" width="0.7" height="13.5" fill="#ffffff"/>
<rect x="91.8" y="142" width="0.9" height="13.5" fill="#f0e000"/>
<rect x="92.7" y="142" width="0.7" height="13.5" fill="#ffffff"/>
<rect x="93.4" y="142" width="0.9" height="13.5" fill="#00e8f8"/>
<rect x="94.3" y="142" width="0.7" height="13.5" fill="#ffffff"/>
<rect x="95" y="142" width="0.9" height="13.5" fill="#ff3020"/>
<rect x="95.9" y="142" width="0.7" height="13.5" fill="#ffffff"/>
<rect x="96.3" y="142" width="0.9" height="13.5" fill="#ff2020"/>
<rect x="108.2" y="142" width="6.7" height="13.5" fill="#ffffff"/>
<rect x="108.2" y="142" width="0.9" height="13.5" fill="#ff6010"/>
<rect x="109.1" y="142" width="0.7" height="13.5" fill="#ffffff"/>
<rect x="109.8" y="142" width="0.9" height="13.5" fill="#f0e000"/>
<rect x="110.7" y="142" width="0.7" height="13.5" fill="#ffffff"/>
<rect x="111.4" y="142" width="0.9" height="13.5" fill="#00e8f8"/>
<rect x="112.3" y="142" width="0.7" height="13.5" fill="#ffffff"/>
<rect x="113" y="142" width="0.9" height="13.5" fill="#ff3020"/>
<rect x="113.9" y="142" width="0.7" height="13.5" fill="#ffffff"/>
<rect x="114.1" y="142" width="0.9" height="13.5" fill="#ff2020"/>
<rect x="126.5" y="142" width="8.6" height="13.5" fill="#ffffff"/>
<rect x="126.5" y="142" width="0.9" height="13.5" fill="#ff6010"/>
<rect x="127.4" y="142" width="0.7" height="13.5" fill="#ffffff"/>
<rect x="128.1" y="142" width="0.9" height="13.5" fill="#f0e000"/>
<rect x="129" y="142" width="0.7" height="13.5" fill="#ffffff"/>
<rect x="129.7" y="142" width="0.9" height="13.5" fill="#00e8f8"/>
<rect x="130.6" y="142" width="0.7" height="13.5" fill="#ffffff"/>
<rect x="131.3" y="142" width="0.9" height="13.5" fill="#ff3020"/>
<rect x="132.2" y="142" width="0.7" height="13.5" fill="#ffffff"/>
<rect x="132.9" y="142" width="0.9" height="13.5" fill="#00e8f8"/>
<rect x="133.8" y="142" width="0.7" height="13.5" fill="#ff6010"/>
<rect x="134.3" y="142" width="0.9" height="13.5" fill="#ff2020"/>
<rect x="144.4" y="142" width="11.9" height="13.5" fill="#ffffff"/>
<rect x="144.4" y="142" width="0.9" height="13.5" fill="#ff6010"/>
<rect x="145.3" y="142" width="0.7" height="13.5" fill="#ffffff"/>
<rect x="146" y="142" width="0.9" height="13.5" fill="#f0e000"/>
<rect x="146.9" y="142" width="0.7" height="13.5" fill="#ffffff"/>
<rect x="147.6" y="142" width="0.9" height="13.5" fill="#00e8f8"/>
<rect x="148.5" y="142" width="0.7" height="13.5" fill="#ffffff"/>
<rect x="149.2" y="142" width="0.9" height="13.5" fill="#ff3020"/>
<rect x="150.1" y="142" width="0.7" height="13.5" fill="#ffffff"/>
<rect x="150.8" y="142" width="0.9" height="13.5" fill="#00e8f8"/>
<rect x="151.7" y="142" width="0.7" height="13.5" fill="#ff6010"/>
<rect x="152.4" y="142" width="0.9" height="13.5" fill="#ffffff"/>
<rect x="153.3" y="142" width="0.7" height="13.5" fill="#f0e000"/>
<rect x="154" y="142" width="0.9" height="13.5" fill="#ffffff"/>
<rect x="154.9" y="142" width="0.7" height="13.5" fill="#00e8f8"/>
<rect x="155.5" y="142" width="0.9" height="13.5" fill="#ff2020"/>
<rect x="162.2" y="142" width="14.7" height="13.5" fill="#ffffff"/>
<rect x="162.2" y="142" width="0.9" height="13.5" fill="#ff6010"/>
<rect x="163.1" y="142" width="0.7" height="13.5" fill="#ffffff"/>
<rect x="163.8" y="142" width="0.9" height="13.5" fill="#f0e000"/>
<rect x="164.7" y="142" width="0.7" height="13.5" fill="#ffffff"/>
<rect x="165.4" y="142" width="0.9" height="13.5" fill="#00e8f8"/>
<rect x="166.3" y="142" width="0.7" height="13.5" fill="#ffffff"/>
<rect x="167" y="142" width="0.9" height="13.5" fill="#ff3020"/>
<rect x="167.9" y="142" width="0.7" height="13.5" fill="#ffffff"/>
<rect x="168.6" y="142" width="0.9" height="13.5" fill="#00e8f8"/>
<rect x="169.5" y="142" width="0.7" height="13.5" fill="#ff6010"/>
<rect x="170.2" y="142" width="0.9" height="13.5" fill="#ffffff"/>
<rect x="171.1" y="142" width="0.7" height="13.5" fill="#f0e000"/>
<rect x="171.8" y="142" width="0.9" height="13.5" fill="#ffffff"/>
<rect x="172.7" y="142" width="0.7" height="13.5" fill="#00e8f8"/>
<rect x="173.4" y="142" width="0.9" height="13.5" fill="#ffffff"/>
<rect x="174.3" y="142" width="0.7" height="13.5" fill="#ff3020"/>
<rect x="175" y="142" width="0.9" height="13.5" fill="#ffffff"/>
<rect x="175.9" y="142" width="0.7" height="13.5" fill="#00e8f8"/>
<rect x="176.1" y="142" width="0.9" height="13.5" fill="#ff2020"/>
<rect x="253.7" y="142" width="2" height="13.5" fill="#ffffff"/>
<rect x="255.3" y="142" width="0.9" height="13.5" fill="#ff2020"/>
<rect x="271.7" y="142" width="3.8" height="13.5" fill="#ffffff"/>
<rect x="271.7" y="142" width="0.9" height="13.5" fill="#ff6010"/>
<rect x="272.6" y="142" width="0.7" height="13.5" fill="#ffffff"/>
<rect x="273.3" y="142" width="0.9" height="13.5" fill="#f0e000"/>
<rect x="274.2" y="142" width="0.7" height="13.5" fill="#ffffff"/>
<rect x="274.7" y="142" width="0.9" height="13.5" fill="#ff2020"/>
<rect x="275.2" y="142" width="3.7" height="13.5" fill="#ffffff"/>
<rect x="275.2" y="142" width="0.8" height="13.5" fill="#30e030"/>
<rect x="276.1" y="142" width="0.8" height="13.5" fill="#f0e000"/>
<rect x="276.9" y="142" width="1.1" height="13.5" fill="#00f0ff"/>
<rect x="278.1" y="142" width="0.9" height="13.5" fill="#ff2020"/>
<rect x="289.7" y="142" width="3.7" height="13.5" fill="#ffffff"/>
<rect x="289.7" y="142" width="0.8" height="13.5" fill="#30e030"/>
<rect x="290.6" y="142" width="0.8" height="13.5" fill="#f0e000"/>
<rect x="291.4" y="142" width="1.1" height="13.5" fill="#00f0ff"/>
<rect x="292.6" y="142" width="0.9" height="13.5" fill="#ff2020"/>
<rect x="307.8" y="142" width="5.3" height="13.5" fill="#ffffff"/>
<rect x="307.8" y="142" width="0.8" height="13.5" fill="#30e030"/>
<rect x="308.7" y="142" width="0.8" height="13.5" fill="#f0e000"/>
<rect x="309.4" y="142" width="2.8" height="13.5" fill="#00f0ff"/>
<rect x="312.3" y="142" width="0.9" height="13.5" fill="#ff2020"/>
<rect x="325.8" y="142" width="7" height="13.5" fill="#ffffff"/>
<rect x="325.8" y="142" width="0.8" height="13.5" fill="#30e030"/>
<rect x="326.7" y="142" width="0.8" height="13.5" fill="#f0e000"/>
<rect x="327.5" y="142" width="4.4" height="13.5" fill="#00f0ff"/>
<rect x="332" y="142" width="0.9" height="13.5" fill="#ff2020"/>
<rect x="343.8" y="142" width="8.7" height="13.5" fill="#ffffff"/>
<rect x="343.8" y="142" width="0.8" height="13.5" fill="#30e030"/>
<rect x="344.7" y="142" width="0.8" height="13.5" fill="#f0e000"/>
<rect x="345.5" y="142" width="6.1" height="13.5" fill="#00f0ff"/>
<rect x="351.7" y="142" width="0.9" height="13.5" fill="#ff2020"/>
<rect x="361.9" y="142" width="8.7" height="13.5" fill="#ffffff"/>
<rect x="361.9" y="142" width="0.8" height="13.5" fill="#30e030"/>
<rect x="362.8" y="142" width="0.8" height="13.5" fill="#f0e000"/>
<rect x="363.6" y="142" width="6.1" height="13.5" fill="#00f0ff"/>
<rect x="369.8" y="142" width="0.9" height="13.5" fill="#ff2020"/>
<rect x="379.9" y="142" width="8.7" height="13.5" fill="#ffffff"/>
<rect x="379.9" y="142" width="0.8" height="13.5" fill="#30e030"/>
<rect x="380.8" y="142" width="0.8" height="13.5" fill="#f0e000"/>
<rect x="381.6" y="142" width="6.1" height="13.5" fill="#00f0ff"/>
<rect x="387.8" y="142" width="0.9" height="13.5" fill="#ff2020"/>
<rect x="397.9" y="142" width="8.7" height="13.5" fill="#ffffff"/>
<rect x="397.9" y="142" width="0.8" height="13.5" fill="#30e030"/>
<rect x="398.8" y="142" width="0.8" height="13.5" fill="#f0e000"/>
<rect x="399.6" y="142" width="6.1" height="13.5" fill="#00f0ff"/>
<rect x="405.8" y="142" width="0.9" height="13.5" fill="#ff2020"/>
<rect x="416" y="142" width="3.8" height="13.5" fill="#ffffff"/>
<rect x="416" y="142" width="0.8" height="13.5" fill="#30e030"/>
<rect x="416.9" y="142" width="0.8" height="13.5" fill="#f0e000"/>
<rect x="417.7" y="142" width="1.2" height="13.5" fill="#00f0ff"/>
<rect x="419" y="142" width="0.9" height="13.5" fill="#ff2020"/>
<rect x="419.5" y="142" width="3.7" height="13.5" fill="#ffffff"/>
<rect x="419.5" y="142" width="0.8" height="13.5" fill="#30e030"/>
<rect x="420.4" y="142" width="0.8" height="13.5" fill="#f0e000"/>
<rect x="421.2" y="142" width="1.1" height="13.5" fill="#00f0ff"/>
<rect x="422.4" y="142" width="0.9" height="13.5" fill="#ff2020"/>
<rect x="434" y="142" width="5.3" height="13.5" fill="#ffffff"/>
<rect x="434" y="142" width="0.9" height="13.5" fill="#ff6010"/>
<rect x="434.9" y="142" width="0.7" height="13.5" fill="#ffffff"/>
<rect x="435.6" y="142" width="0.9" height="13.5" fill="#f0e000"/>
<rect x="436.5" y="142" width="0.7" height="13.5" fill="#ffffff"/>
<rect x="437.2" y="142" width="0.9" height="13.5" fill="#00e8f8"/>
<rect x="438.1" y="142" width="0.7" height="13.5" fill="#ffffff"/>
<rect x="438.6" y="142" width="0.9" height="13.5" fill="#ff2020"/>
<rect x="452.1" y="142" width="5.3" height="13.5" fill="#ffffff"/>
<rect x="452.1" y="142" width="0.9" height="13.5" fill="#ff6010"/>
<rect x="453" y="142" width="0.7" height="13.5" fill="#ffffff"/>
<rect x="453.7" y="142" width="0.9" height="13.5" fill="#f0e000"/>
<rect x="454.6" y="142" width="0.7" height="13.5" fill="#ffffff"/>
<rect x="455.3" y="142" width="0.9" height="13.5" fill="#00e8f8"/>
<rect x="456.2" y="142" width="0.7" height="13.5" fill="#ffffff"/>
<rect x="456.6" y="142" width="0.9" height="13.5" fill="#ff2020"/>
<rect x="470.1" y="142" width="3.8" height="13.5" fill="#ffffff"/>
<rect x="473.5" y="142" width="0.9" height="13.5" fill="#ff2020"/>
<rect x="473.6" y="142" width="5.3" height="13.5" fill="#ffffff"/>
<rect x="473.6" y="142" width="0.9" height="13.5" fill="#ff6010"/>
<rect x="474.5" y="142" width="0.7" height="13.5" fill="#ffffff"/>
<rect x="475.2" y="142" width="0.9" height="13.5" fill="#f0e000"/>
<rect x="476.1" y="142" width="0.7" height="13.5" fill="#ffffff"/>
<rect x="476.8" y="142" width="0.9" height="13.5" fill="#00e8f8"/>
<rect x="477.7" y="142" width="0.7" height="13.5" fill="#ffffff"/>
<rect x="478.2" y="142" width="0.9" height="13.5" fill="#ff2020"/>
<rect x="488.1" y="142" width="7.1" height="13.5" fill="#ffffff"/>
<rect x="488.1" y="142" width="0.9" height="13.5" fill="#ff6010"/>
<rect x="489" y="142" width="0.7" height="13.5" fill="#ffffff"/>
<rect x="489.7" y="142" width="0.9" height="13.5" fill="#f0e000"/>
<rect x="490.6" y="142" width="0.7" height="13.5" fill="#ffffff"/>
<rect x="491.3" y="142" width="0.9" height="13.5" fill="#00e8f8"/>
<rect x="492.2" y="142" width="0.7" height="13.5" fill="#ffffff"/>
<rect x="492.9" y="142" width="0.9" height="13.5" fill="#ff3020"/>
<rect x="493.8" y="142" width="0.7" height="13.5" fill="#ffffff"/>
<rect x="494.5" y="142" width="0.9" height="13.5" fill="#ff2020"/>
<rect x="495" y="142" width="5.3" height="13.5" fill="#ffffff"/>
<rect x="495" y="142" width="0.9" height="13.5" fill="#ff6010"/>
<rect x="495.9" y="142" width="0.7" height="13.5" fill="#ffffff"/>
<rect x="496.6" y="142" width="0.9" height="13.5" fill="#f0e000"/>
<rect x="497.5" y="142" width="0.7" height="13.5" fill="#ffffff"/>
<rect x="498.2" y="142" width="0.9" height="13.5" fill="#00e8f8"/>
<rect x="499.1" y="142" width="0.7" height="13.5" fill="#ffffff"/>
<rect x="499.5" y="142" width="0.9" height="13.5" fill="#ff2020"/>
<rect x="596.3" y="142" width="2" height="13.5" fill="#ffffff"/>
<rect x="597.9" y="142" width="0.9" height="13.5" fill="#ff2020"/>
<rect x="614.3" y="142" width="3.8" height="13.5" fill="#ffffff"/>
<rect x="614.3" y="142" width="0.9" height="13.5" fill="#ff6010"/>
<rect x="615.2" y="142" width="0.7" height="13.5" fill="#ffffff"/>
<rect x="615.9" y="142" width="0.9" height="13.5" fill="#f0e000"/>
<rect x="616.8" y="142" width="0.7" height="13.5" fill="#ffffff"/>
<rect x="617.4" y="142" width="0.9" height="13.5" fill="#ff2020"/>
<rect x="617.9" y="142" width="3.7" height="13.5" fill="#ffffff"/>
<rect x="617.9" y="142" width="0.8" height="13.5" fill="#30e030"/>
<rect x="618.8" y="142" width="0.8" height="13.5" fill="#f0e000"/>
<rect x="619.6" y="142" width="1.1" height="13.5" fill="#00f0ff"/>
<rect x="620.7" y="142" width="0.9" height="13.5" fill="#ff2020"/>
<rect x="632.4" y="142" width="3.7" height="13.5" fill="#ffffff"/>
<rect x="632.4" y="142" width="0.8" height="13.5" fill="#30e030"/>
<rect x="633.3" y="142" width="0.8" height="13.5" fill="#f0e000"/>
<rect x="634.1" y="142" width="1.1" height="13.5" fill="#00f0ff"/>
<rect x="635.2" y="142" width="0.9" height="13.5" fill="#ff2020"/>
<rect x="650.4" y="142" width="5.3" height="13.5" fill="#ffffff"/>
<rect x="650.4" y="142" width="0.8" height="13.5" fill="#30e030"/>
<rect x="651.3" y="142" width="0.8" height="13.5" fill="#f0e000"/>
<rect x="652.1" y="142" width="2.8" height="13.5" fill="#00f0ff"/>
<rect x="655" y="142" width="0.9" height="13.5" fill="#ff2020"/>
<rect x="668.5" y="142" width="7" height="13.5" fill="#ffffff"/>
<rect x="668.5" y="142" width="0.8" height="13.5" fill="#30e030"/>
<rect x="669.4" y="142" width="0.8" height="13.5" fill="#f0e000"/>
<rect x="670.1" y="142" width="4.4" height="13.5" fill="#00f0ff"/>
<rect x="674.7" y="142" width="0.9" height="13.5" fill="#ff2020"/>
<rect x="686.5" y="142" width="8.7" height="13.5" fill="#ffffff"/>
<rect x="686.5" y="142" width="0.8" height="13.5" fill="#30e030"/>
<rect x="687.4" y="142" width="0.8" height="13.5" fill="#f0e000"/>
<rect x="688.2" y="142" width="6.1" height="13.5" fill="#00f0ff"/>
<rect x="694.4" y="142" width="0.9" height="13.5" fill="#ff2020"/>
<rect x="704.5" y="142" width="8.7" height="13.5" fill="#ffffff"/>
<rect x="704.5" y="142" width="0.8" height="13.5" fill="#30e030"/>
<rect x="705.4" y="142" width="0.8" height="13.5" fill="#f0e000"/>
<rect x="706.2" y="142" width="6.1" height="13.5" fill="#00f0ff"/>
<rect x="712.4" y="142" width="0.9" height="13.5" fill="#ff2020"/>
<rect x="722.6" y="142" width="8.7" height="13.5" fill="#ffffff"/>
<rect x="722.6" y="142" width="0.8" height="13.5" fill="#30e030"/>
<rect x="723.5" y="142" width="0.8" height="13.5" fill="#f0e000"/>
<rect x="724.2" y="142" width="6.1" height="13.5" fill="#00f0ff"/>
<rect x="730.5" y="142" width="0.9" height="13.5" fill="#ff2020"/>
<rect x="740.6" y="142" width="8.7" height="13.5" fill="#ffffff"/>
<rect x="740.6" y="142" width="0.8" height="13.5" fill="#30e030"/>
<rect x="741.5" y="142" width="0.8" height="13.5" fill="#f0e000"/>
<rect x="742.3" y="142" width="6.1" height="13.5" fill="#00f0ff"/>
<rect x="748.5" y="142" width="0.9" height="13.5" fill="#ff2020"/>
<rect x="758.6" y="142" width="3.8" height="13.5" fill="#ffffff"/>
<rect x="758.6" y="142" width="0.8" height="13.5" fill="#30e030"/>
<rect x="759.5" y="142" width="0.8" height="13.5" fill="#f0e000"/>
<rect x="760.4" y="142" width="1.2" height="13.5" fill="#00f0ff"/>
<rect x="761.7" y="142" width="0.9" height="13.5" fill="#ff2020"/>
<rect x="762.2" y="142" width="3.7" height="13.5" fill="#ffffff"/>
<rect x="762.2" y="142" width="0.8" height="13.5" fill="#30e030"/>
<rect x="763.1" y="142" width="0.8" height="13.5" fill="#f0e000"/>
<rect x="763.8" y="142" width="1.1" height="13.5" fill="#00f0ff"/>
<rect x="765" y="142" width="0.9" height="13.5" fill="#ff2020"/>
<rect x="776.7" y="142" width="5.3" height="13.5" fill="#ffffff"/>
<rect x="776.7" y="142" width="0.9" height="13.5" fill="#ff6010"/>
<rect x="777.6" y="142" width="0.7" height="13.5" fill="#ffffff"/>
<rect x="778.3" y="142" width="0.9" height="13.5" fill="#f0e000"/>
<rect x="779.2" y="142" width="0.7" height="13.5" fill="#ffffff"/>
<rect x="779.9" y="142" width="0.9" height="13.5" fill="#00e8f8"/>
<rect x="780.8" y="142" width="0.7" height="13.5" fill="#ffffff"/>
<rect x="781.2" y="142" width="0.9" height="13.5" fill="#ff2020"/>
<rect x="794.7" y="142" width="5.3" height="13.5" fill="#ffffff"/>
<rect x="794.7" y="142" width="0.9" height="13.5" fill="#ff6010"/>
<rect x="795.6" y="142" width="0.7" height="13.5" fill="#ffffff"/>
<rect x="796.3" y="142" width="0.9" height="13.5" fill="#f0e000"/>
<rect x="797.2" y="142" width="0.7" height="13.5" fill="#ffffff"/>
<rect x="797.9" y="142" width="0.9" height="13.5" fill="#00e8f8"/>
<rect x="798.8" y="142" width="0.7" height="13.5" fill="#ffffff"/>
<rect x="799.2" y="142" width="0.9" height="13.5" fill="#ff2020"/>
<rect x="812.7" y="142" width="3.8" height="13.5" fill="#ffffff"/>
<rect x="816.2" y="142" width="0.9" height="13.5" fill="#ff2020"/>
<rect x="816.3" y="142" width="5.3" height="13.5" fill="#ffffff"/>
<rect x="816.3" y="142" width="0.9" height="13.5" fill="#ff6010"/>
<rect x="817.2" y="142" width="0.7" height="13.5" fill="#ffffff"/>
<rect x="817.9" y="142" width="0.9" height="13.5" fill="#f0e000"/>
<rect x="818.8" y="142" width="0.7" height="13.5" fill="#ffffff"/>
<rect x="819.5" y="142" width="0.9" height="13.5" fill="#00e8f8"/>
<rect x="820.4" y="142" width="0.7" height="13.5" fill="#ffffff"/>
<rect x="820.8" y="142" width="0.9" height="13.5" fill="#ff2020"/>
<rect x="830.8" y="142" width="7.1" height="13.5" fill="#ffffff"/>
<rect x="830.8" y="142" width="0.9" height="13.5" fill="#ff6010"/>
<rect x="831.7" y="142" width="0.7" height="13.5" fill="#ffffff"/>
<rect x="832.4" y="142" width="0.9" height="13.5" fill="#f0e000"/>
<rect x="833.3" y="142" width="0.7" height="13.5" fill="#ffffff"/>
<rect x="834" y="142" width="0.9" height="13.5" fill="#00e8f8"/>
<rect x="834.9" y="142" width="0.7" height="13.5" fill="#ffffff"/>
<rect x="835.6" y="142" width="0.9" height="13.5" fill="#ff3020"/>
<rect x="836.5" y="142" width="0.7" height="13.5" fill="#ffffff"/>
<rect x="837.1" y="142" width="0.9" height="13.5" fill="#ff2020"/>
<rect x="837.6" y="142" width="5.3" height="13.5" fill="#ffffff"/>
<rect x="837.6" y="142" width="0.9" height="13.5" fill="#ff6010"/>
<rect x="838.5" y="142" width="0.7" height="13.5" fill="#ffffff"/>
<rect x="839.2" y="142" width="0.9" height="13.5" fill="#f0e000"/>
<rect x="840.1" y="142" width="0.7" height="13.5" fill="#ffffff"/>
<rect x="840.8" y="142" width="0.9" height="13.5" fill="#00e8f8"/>
<rect x="841.7" y="142" width="0.7" height="13.5" fill="#ffffff"/>
<rect x="842.2" y="142" width="0.9" height="13.5" fill="#ff2020"/>
<rect x="939" y="142" width="2" height="13.5" fill="#ffffff"/>
<rect x="940.6" y="142" width="0.9" height="13.5" fill="#ff2020"/>
<rect x="957" y="142" width="3.8" height="13.5" fill="#ffffff"/>
<rect x="957" y="142" width="0.9" height="13.5" fill="#ff6010"/>
<rect x="957.9" y="142" width="0.7" height="13.5" fill="#ffffff"/>
<rect x="958.6" y="142" width="0.9" height="13.5" fill="#f0e000"/>
<rect x="959.5" y="142" width="0.7" height="13.5" fill="#ffffff"/>
<rect x="960" y="142" width="0.9" height="13.5" fill="#ff2020"/>
<rect x="960.5" y="142" width="3.7" height="13.5" fill="#ffffff"/>
<rect x="960.5" y="142" width="0.8" height="13.5" fill="#30e030"/>
<rect x="961.4" y="142" width="0.8" height="13.5" fill="#f0e000"/>
<rect x="962.2" y="142" width="1.1" height="13.5" fill="#00f0ff"/>
<rect x="963.4" y="142" width="0.9" height="13.5" fill="#ff2020"/>
<rect x="975" y="142" width="3.7" height="13.5" fill="#ffffff"/>
<rect x="975" y="142" width="0.8" height="13.5" fill="#30e030"/>
<rect x="975.9" y="142" width="0.8" height="13.5" fill="#f0e000"/>
<rect x="976.7" y="142" width="1.1" height="13.5" fill="#00f0ff"/>
<rect x="977.9" y="142" width="0.9" height="13.5" fill="#ff2020"/>
<rect x="993.1" y="142" width="5.3" height="13.5" fill="#ffffff"/>
<rect x="993.1" y="142" width="0.8" height="13.5" fill="#30e030"/>
<rect x="994" y="142" width="0.8" height="13.5" fill="#f0e000"/>
<rect x="994.7" y="142" width="2.8" height="13.5" fill="#00f0ff"/>
<rect x="997.6" y="142" width="0.9" height="13.5" fill="#ff2020"/>
<rect x="1011.1" y="142" width="7" height="13.5" fill="#ffffff"/>
<rect x="1011.1" y="142" width="0.8" height="13.5" fill="#30e030"/>
<rect x="1012" y="142" width="0.8" height="13.5" fill="#f0e000"/>
<rect x="1012.8" y="142" width="4.4" height="13.5" fill="#00f0ff"/>
<rect x="1017.3" y="142" width="0.9" height="13.5" fill="#ff2020"/>
<rect x="1029.1" y="142" width="8.7" height="13.5" fill="#ffffff"/>
<rect x="1029.1" y="142" width="0.8" height="13.5" fill="#30e030"/>
<rect x="1030" y="142" width="0.8" height="13.5" fill="#f0e000"/>
<rect x="1030.8" y="142" width="6.1" height="13.5" fill="#00f0ff"/>
<rect x="1037" y="142" width="0.9" height="13.5" fill="#ff2020"/>
<rect x="1047.2" y="142" width="8.7" height="13.5" fill="#ffffff"/>
<rect x="1047.2" y="142" width="0.8" height="13.5" fill="#30e030"/>
<rect x="1048.1" y="142" width="0.8" height="13.5" fill="#f0e000"/>
<rect x="1048.9" y="142" width="6.1" height="13.5" fill="#00f0ff"/>
<rect x="1055.1" y="142" width="0.9" height="13.5" fill="#ff2020"/>
<rect x="1065.2" y="142" width="8.7" height="13.5" fill="#ffffff"/>
<rect x="1065.2" y="142" width="0.8" height="13.5" fill="#30e030"/>
<rect x="1066.1" y="142" width="0.8" height="13.5" fill="#f0e000"/>
<rect x="1066.9" y="142" width="6.1" height="13.5" fill="#00f0ff"/>
<rect x="1073.1" y="142" width="0.9" height="13.5" fill="#ff2020"/>
<rect x="1083.2" y="142" width="8.7" height="13.5" fill="#ffffff"/>
<rect x="1083.2" y="142" width="0.8" height="13.5" fill="#30e030"/>
<rect x="1084.1" y="142" width="0.8" height="13.5" fill="#f0e000"/>
<rect x="1084.9" y="142" width="6.1" height="13.5" fill="#00f0ff"/>
<rect x="1091.1" y="142" width="0.9" height="13.5" fill="#ff2020"/>
<rect x="1101.3" y="142" width="3.8" height="13.5" fill="#ffffff"/>
<rect x="1101.3" y="142" width="0.8" height="13.5" fill="#30e030"/>
<rect x="1102.2" y="142" width="0.8" height="13.5" fill="#f0e000"/>
<rect x="1103" y="142" width="1.2" height="13.5" fill="#00f0ff"/>
<rect x="1104.3" y="142" width="0.9" height="13.5" fill="#ff2020"/>
<rect x="1104.8" y="142" width="3.7" height="13.5" fill="#ffffff"/>
<rect x="1104.8" y="142" width="0.8" height="13.5" fill="#30e030"/>
<rect x="1105.7" y="142" width="0.8" height="13.5" fill="#f0e000"/>
<rect x="1106.5" y="142" width="1.1" height="13.5" fill="#00f0ff"/>
<rect x="1107.7" y="142" width="0.9" height="13.5" fill="#ff2020"/>
<rect x="1119.3" y="142" width="5.3" height="13.5" fill="#ffffff"/>
<rect x="1119.3" y="142" width="0.9" height="13.5" fill="#ff6010"/>
<rect x="1120.2" y="142" width="0.7" height="13.5" fill="#ffffff"/>
<rect x="1120.9" y="142" width="0.9" height="13.5" fill="#f0e000"/>
<rect x="1121.8" y="142" width="0.7" height="13.5" fill="#ffffff"/>
<rect x="1122.5" y="142" width="0.9" height="13.5" fill="#00e8f8"/>
<rect x="1123.4" y="142" width="0.7" height="13.5" fill="#ffffff"/>
<rect x="1123.9" y="142" width="0.9" height="13.5" fill="#ff2020"/>
<rect x="1137.4" y="142" width="5.3" height="13.5" fill="#ffffff"/>
<rect x="1137.4" y="142" width="0.9" height="13.5" fill="#ff6010"/>
<rect x="1138.3" y="142" width="0.7" height="13.5" fill="#ffffff"/>
<rect x="1139" y="142" width="0.9" height="13.5" fill="#f0e000"/>
<rect x="1139.9" y="142" width="0.7" height="13.5" fill="#ffffff"/>
<rect x="1140.6" y="142" width="0.9" height="13.5" fill="#00e8f8"/>
<rect x="1141.5" y="142" width="0.7" height="13.5" fill="#ffffff"/>
<rect x="1141.9" y="142" width="0.9" height="13.5" fill="#ff2020"/>
<rect x="1155.4" y="142" width="3.8" height="13.5" fill="#ffffff"/>
<rect x="1158.8" y="142" width="0.9" height="13.5" fill="#ff2020"/>
<rect x="1158.9" y="142" width="5.3" height="13.5" fill="#ffffff"/>
<rect x="1158.9" y="142" width="0.9" height="13.5" fill="#ff6010"/>
<rect x="1159.8" y="142" width="0.7" height="13.5" fill="#ffffff"/>
<rect x="1160.5" y="142" width="0.9" height="13.5" fill="#f0e000"/>
<rect x="1161.4" y="142" width="0.7" height="13.5" fill="#ffffff"/>
<rect x="1162.1" y="142" width="0.9" height="13.5" fill="#00e8f8"/>
<rect x="1163" y="142" width="0.7" height="13.5" fill="#ffffff"/>
<rect x="1163.5" y="142" width="0.9" height="13.5" fill="#ff2020"/>
<rect x="1173.4" y="142" width="7.1" height="13.5" fill="#ffffff"/>
<rect x="1173.4" y="142" width="0.9" height="13.5" fill="#ff6010"/>
<rect x="1174.3" y="142" width="0.7" height="13.5" fill="#ffffff"/>
<rect x="1175" y="142" width="0.9" height="13.5" fill="#f0e000"/>
<rect x="1175.9" y="142" width="0.7" height="13.5" fill="#ffffff"/>
<rect x="1176.6" y="142" width="0.9" height="13.5" fill="#00e8f8"/>
<rect x="1177.5" y="142" width="0.7" height="13.5" fill="#ffffff"/>
<rect x="1178.2" y="142" width="0.9" height="13.5" fill="#ff3020"/>
<rect x="1179.1" y="142" width="0.7" height="13.5" fill="#ffffff"/>
<rect x="1179.8" y="142" width="0.9" height="13.5" fill="#ff2020"/>
<rect x="1180.3" y="142" width="5.3" height="13.5" fill="#ffffff"/>
<rect x="1180.3" y="142" width="0.9" height="13.5" fill="#ff6010"/>
<rect x="1181.2" y="142" width="0.7" height="13.5" fill="#ffffff"/>
<rect x="1181.9" y="142" width="0.9" height="13.5" fill="#f0e000"/>
<rect x="1182.8" y="142" width="0.7" height="13.5" fill="#ffffff"/>
<rect x="1183.5" y="142" width="0.9" height="13.5" fill="#00e8f8"/>
<rect x="1184.4" y="142" width="0.7" height="13.5" fill="#ffffff"/>
<rect x="1184.8" y="142" width="0.9" height="13.5" fill="#ff2020"/>
<rect x="1281.6" y="142" width="2" height="13.5" fill="#ffffff"/>
<rect x="1283.2" y="142" width="0.9" height="13.5" fill="#ff2020"/>
<rect x="1299.6" y="142" width="3.8" height="13.5" fill="#ffffff"/>
<rect x="1299.6" y="142" width="0.9" height="13.5" fill="#ff6010"/>
<rect x="1300.5" y="142" width="0.7" height="13.5" fill="#ffffff"/>
<rect x="1301.2" y="142" width="0.9" height="13.5" fill="#f0e000"/>
<rect x="1302.1" y="142" width="0.7" height="13.5" fill="#ffffff"/>
<rect x="1302.7" y="142" width="0.9" height="13.5" fill="#ff2020"/>
<rect x="1303.2" y="142" width="3.7" height="13.5" fill="#ffffff"/>
<rect x="1303.2" y="142" width="0.8" height="13.5" fill="#30e030"/>
<rect x="1304.1" y="142" width="0.8" height="13.5" fill="#f0e000"/>
<rect x="1304.9" y="142" width="1.1" height="13.5" fill="#00f0ff"/>
<rect x="1306" y="142" width="0.9" height="13.5" fill="#ff2020"/>
<rect x="1317.7" y="142" width="3.7" height="13.5" fill="#ffffff"/>
<rect x="1317.7" y="142" width="0.8" height="13.5" fill="#30e030"/>
<rect x="1318.6" y="142" width="0.8" height="13.5" fill="#f0e000"/>
<rect x="1319.4" y="142" width="1.1" height="13.5" fill="#00f0ff"/>
<rect x="1320.5" y="142" width="0.9" height="13.5" fill="#ff2020"/>
<rect x="1335.7" y="142" width="5.3" height="13.5" fill="#ffffff"/>
<rect x="1335.7" y="142" width="0.8" height="13.5" fill="#30e030"/>
<rect x="1336.6" y="142" width="0.8" height="13.5" fill="#f0e000"/>
<rect x="1337.4" y="142" width="2.8" height="13.5" fill="#00f0ff"/>
<rect x="1340.3" y="142" width="0.9" height="13.5" fill="#ff2020"/>
<rect x="1353.7" y="142" width="7" height="13.5" fill="#ffffff"/>
<rect x="1353.7" y="142" width="0.8" height="13.5" fill="#30e030"/>
<rect x="1354.6" y="142" width="0.8" height="13.5" fill="#f0e000"/>
<rect x="1355.4" y="142" width="4.4" height="13.5" fill="#00f0ff"/>
<rect x="1360" y="142" width="0.9" height="13.5" fill="#ff2020"/>
<rect x="1371.8" y="142" width="8.7" height="13.5" fill="#ffffff"/>
<rect x="1371.8" y="142" width="0.8" height="13.5" fill="#30e030"/>
<rect x="1372.7" y="142" width="0.8" height="13.5" fill="#f0e000"/>
<rect x="1373.5" y="142" width="6.1" height="13.5" fill="#00f0ff"/>
<rect x="1379.7" y="142" width="0.9" height="13.5" fill="#ff2020"/>
<rect x="1389.8" y="142" width="8.7" height="13.5" fill="#ffffff"/>
<rect x="1389.8" y="142" width="0.8" height="13.5" fill="#30e030"/>
<rect x="1390.7" y="142" width="0.8" height="13.5" fill="#f0e000"/>
<rect x="1391.5" y="142" width="6.1" height="13.5" fill="#00f0ff"/>
<rect x="1397.7" y="142" width="0.9" height="13.5" fill="#ff2020"/>
<rect x="1407.8" y="142" width="8.7" height="13.5" fill="#ffffff"/>
<rect x="1407.8" y="142" width="0.8" height="13.5" fill="#30e030"/>
<rect x="1408.7" y="142" width="0.8" height="13.5" fill="#f0e000"/>
<rect x="1409.5" y="142" width="6.1" height="13.5" fill="#00f0ff"/>
<rect x="1415.7" y="142" width="0.9" height="13.5" fill="#ff2020"/>
<rect x="1425.9" y="142" width="8.7" height="13.5" fill="#ffffff"/>
<rect x="1425.9" y="142" width="0.8" height="13.5" fill="#30e030"/>
<rect x="1426.8" y="142" width="0.8" height="13.5" fill="#f0e000"/>
<rect x="1427.6" y="142" width="6.1" height="13.5" fill="#00f0ff"/>
<rect x="1433.8" y="142" width="0.9" height="13.5" fill="#ff2020"/>
<rect x="1443.9" y="142" width="1.6" height="13.5" fill="#ffffff"/>
<rect x="1443.9" y="142" width="0.8" height="13.5" fill="#30e030"/>
<rect x="1444.8" y="142" width="0.8" height="13.5" fill="#f0e000"/>
<rect x="1445.6" y="142" width="1.1" height="13.5" fill="#00f0ff"/>
<rect x="1446.8" y="142" width="0.9" height="13.5" fill="#ff2020"/>
</g>
<rect x="720" y="60" width="4.8" height="182" fill="#a6a6a6" fill-opacity="0.88"/>
<rect x="729.2" y="60" width="4.8" height="182" fill="#a6a6a6" fill-opacity="0.88"/>
<rect x="720" y="60" width="2.2" height="182" fill="#9c9c9c"/>
<rect x="731.6" y="60" width="2.4" height="182" fill="#9c9c9c"/>
<line x1="724.3" y1="92" x2="724.3" y2="240" stroke="#e8e8e8" stroke-width="1" stroke-dasharray="4 2.5"/>
<text x="147.1" y="236" text-anchor="middle" font-family='"DejaVu Sans", "Liberation Sans", sans-serif' font-size="11.75" fill="#c4c4c4">-16 ms</text>
<text x="291.2" y="236" text-anchor="middle" font-family='"DejaVu Sans", "Liberation Sans", sans-serif' font-size="11.75" fill="#c4c4c4">-12 ms</text>
<text x="435.2" y="236" text-anchor="middle" font-family='"DejaVu Sans", "Liberation Sans", sans-serif' font-size="11.75" fill="#c4c4c4">-8 ms</text>
<text x="579.3" y="236" text-anchor="middle" font-family='"DejaVu Sans", "Liberation Sans", sans-serif' font-size="11.75" fill="#c4c4c4">-4 ms</text>
<text x="723.4" y="236" text-anchor="middle" font-family='"DejaVu Sans", "Liberation Sans", sans-serif' font-size="11.75" fill="#c4c4c4">0 s</text>
<text x="867.5" y="236" text-anchor="middle" font-family='"DejaVu Sans", "Liberation Sans", sans-serif' font-size="11.75" fill="#c4c4c4">4 ms</text>
<text x="1011.6" y="236" text-anchor="middle" font-family='"DejaVu Sans", "Liberation Sans", sans-serif' font-size="11.75" fill="#c4c4c4">8 ms</text>
<text x="1155.6" y="236" text-anchor="middle" font-family='"DejaVu Sans", "Liberation Sans", sans-serif' font-size="11.75" fill="#c4c4c4">12 ms</text>
<text x="1299.7" y="236" text-anchor="middle" font-family='"DejaVu Sans", "Liberation Sans", sans-serif' font-size="11.75" fill="#c4c4c4">16 ms</text>
<rect x="724.8" y="218" width="4.4" height="20.5" fill="#000"/>
<rect x="720" y="238.5" width="14" height="3.5" fill="#a2a2a2"/>
<path d="M713 54.5 H733.5 L723.3 64Z" fill="#f58a1f"/>
<path d="M714.2 65.2 H732.3 V84 H727.5 L723.3 90.6 L719 84 H714.2Z" fill="#000" stroke="#f58a1f" stroke-width="2.3"/>
<text x="723.3" y="80.2" text-anchor="middle" font-family='"DejaVu Sans", "Liberation Sans", sans-serif' font-weight="bold" font-size="13.5" fill="#f58a1f">T</text>
<path d="M23.7 127 L30.4 138 H17Z" fill="#d8404a" stroke="#5a3a60" stroke-width="1" stroke-linejoin="round"/>
<text x="23.7" y="137" text-anchor="middle" font-family='"DejaVu Sans", "Liberation Sans", sans-serif' font-weight="bold" font-size="8.5" fill="#fff">!</text>
<path d="M7.5 141.5 H21 L26.8 147.8 L21 154.2 H7.5 Q6.3 154.2 6.3 153 V142.7 Q6.3 141.5 7.5 141.5Z" fill="#cfa2ff" stroke="#8a60b0" stroke-width="0.8"/>
<text x="15.2" y="151.4" text-anchor="middle" font-family='"DejaVu Sans", "Liberation Sans", sans-serif' font-weight="bold" font-size="8.6" fill="#5a4470">B1</text>
<path d="M1403 61.1 H1434.7 Q1436.7 61.1 1436.7 63.1 V94.4 Z" fill="none" stroke="#101010" stroke-width="3.4" stroke-linejoin="round"/>
<path d="M1403 61.1 H1434.7 Q1436.7 61.1 1436.7 63.1 V94.4 Z" fill="#4e4e4e" stroke="#18b0e8" stroke-width="1.5" stroke-linejoin="round"/>
<circle cx="1430.1" cy="67.7" r="3.5" fill="none" stroke="#18b0e8" stroke-width="1.5"/>
<path d="M1427.2 70.5 L1421 76.3" stroke="#18b0e8" stroke-width="2.4" stroke-linecap="round"/>
</g>
<path d="M281 254.2H293M287 248.4V260" stroke="#808080" stroke-width="2.1" fill="none"/>
<path d="M592.5 254.2H604.5M598.5 248.4V260" stroke="#808080" stroke-width="2.1" fill="none"/>
<path d="M336.5 254.2H348.5" stroke="#808080" stroke-width="2.1" fill="none"/>
<path d="M647.5 254.2H659.5" stroke="#808080" stroke-width="2.1" fill="none"/>
<path d="M1424.3 248.4L1435.7 260M1435.7 248.4L1424.3 260" stroke="#c6c6c6" stroke-width="2.1" fill="none"/>
<clipPath id="mclip"><rect x="3" y="267" width="1440.8" height="724.7"/></clipPath>
<g clip-path="url(#mclip)">
<path d="M98 270.5h1M242 270.5h1M530 270.5h1M674 270.5h1M818 270.5h1M962 270.5h1M1106 270.5h1M1250 270.5h1M1394 270.5h1M98 275.5h1M242 275.5h1M530 275.5h1M674 275.5h1M818 275.5h1M962 275.5h1M1106 275.5h1M1250 275.5h1M1394 275.5h1M98 280.5h1M242 280.5h1M530 280.5h1M674 280.5h1M818 280.5h1M962 280.5h1M1106 280.5h1M1250 280.5h1M1394 280.5h1M98 285.5h1M242 285.5h1M530 285.5h1M674 285.5h1M818 285.5h1M962 285.5h1M1106 285.5h1M1250 285.5h1M1394 285.5h1M98 290.5h1M242 290.5h1M530 290.5h1M674 290.5h1M818 290.5h1M962 290.5h1M1106 290.5h1M1250 290.5h1M1394 290.5h1M98 295.5h1M242 295.5h1M530 295.5h1M674 295.5h1M818 295.5h1M962 295.5h1M1106 295.5h1M1250 295.5h1M1394 295.5h1M98 299.5h1M242 299.5h1M530 299.5h1M674 299.5h1M818 299.5h1M962 299.5h1M1106 299.5h1M1250 299.5h1M1394 299.5h1M98 304.5h1M242 304.5h1M530 304.5h1M674 304.5h1M818 304.5h1M962 304.5h1M1106 304.5h1M1250 304.5h1M1394 304.5h1M98 309.5h1M242 309.5h1M530 309.5h1M674 309.5h1M818 309.5h1M962 309.5h1M1106 309.5h1M1250 309.5h1M1394 309.5h1M98 314.5h1M242 314.5h1M530 314.5h1M674 314.5h1M818 314.5h1M962 314.5h1M1106 314.5h1M1250 314.5h1M1394 314.5h1M98 319.5h1M242 319.5h1M530 319.5h1M674 319.5h1M818 319.5h1M962 319.5h1M1106 319.5h1M1250 319.5h1M1394 319.5h1M98 324.5h1M242 324.5h1M530 324.5h1M674 324.5h1M818 324.5h1M962 324.5h1M1106 324.5h1M1250 324.5h1M1394 324.5h1M98 328.5h1M242 328.5h1M530 328.5h1M674 328.5h1M818 328.5h1M962 328.5h1M1106 328.5h1M1250 328.5h1M1394 328.5h1M98 333.5h1M242 333.5h1M530 333.5h1M674 333.5h1M818 333.5h1M962 333.5h1M1106 333.5h1M1250 333.5h1M1394 333.5h1M98 338.5h1M242 338.5h1M530 338.5h1M674 338.5h1M818 338.5h1M962 338.5h1M1106 338.5h1M1250 338.5h1M1394 338.5h1M98 343.5h1M242 343.5h1M530 343.5h1M674 343.5h1M818 343.5h1M962 343.5h1M1106 343.5h1M1250 343.5h1M1394 343.5h1M98 348.5h1M242 348.5h1M530 348.5h1M674 348.5h1M818 348.5h1M962 348.5h1M1106 348.5h1M1250 348.5h1M1394 348.5h1M98 352.5h1M242 352.5h1M530 352.5h1M674 352.5h1M818 352.5h1M962 352.5h1M1106 352.5h1M1250 352.5h1M1394 352.5h1M98 357.5h1M242 357.5h1M530 357.5h1M674 357.5h1M818 357.5h1M962 357.5h1M1106 357.5h1M1250 357.5h1M1394 357.5h1M98 362.5h1M242 362.5h1M530 362.5h1M674 362.5h1M818 362.5h1M962 362.5h1M1106 362.5h1M1250 362.5h1M1394 362.5h1M98 367.5h1M242 367.5h1M530 367.5h1M674 367.5h1M818 367.5h1M962 367.5h1M1106 367.5h1M1250 367.5h1M1394 367.5h1M98 372.5h1M242 372.5h1M530 372.5h1M674 372.5h1M818 372.5h1M962 372.5h1M1106 372.5h1M1250 372.5h1M1394 372.5h1M98 377.5h1M242 377.5h1M530 377.5h1M674 377.5h1M818 377.5h1M962 377.5h1M1106 377.5h1M1250 377.5h1M1394 377.5h1M98 381.5h1M242 381.5h1M530 381.5h1M674 381.5h1M818 381.5h1M962 381.5h1M1106 381.5h1M1250 381.5h1M1394 381.5h1M98 386.5h1M242 386.5h1M530 386.5h1M674 386.5h1M818 386.5h1M962 386.5h1M1106 386.5h1M1250 386.5h1M1394 386.5h1M98 391.5h1M242 391.5h1M530 391.5h1M674 391.5h1M818 391.5h1M962 391.5h1M1106 391.5h1M1250 391.5h1M1394 391.5h1M98 396.5h1M242 396.5h1M530 396.5h1M674 396.5h1M818 396.5h1M962 396.5h1M1106 396.5h1M1250 396.5h1M1394 396.5h1M98 401.5h1M242 401.5h1M530 401.5h1M674 401.5h1M818 401.5h1M962 401.5h1M1106 401.5h1M1250 401.5h1M1394 401.5h1M98 405.5h1M242 405.5h1M530 405.5h1M674 405.5h1M818 405.5h1M962 405.5h1M1106 405.5h1M1250 405.5h1M1394 405.5h1M98 410.5h1M242 410.5h1M530 410.5h1M674 410.5h1M818 410.5h1M962 410.5h1M1106 410.5h1M1250 410.5h1M1394 410.5h1M98 415.5h1M242 415.5h1M530 415.5h1M674 415.5h1M818 415.5h1M962 415.5h1M1106 415.5h1M1250 415.5h1M1394 415.5h1M98 420.5h1M242 420.5h1M530 420.5h1M674 420.5h1M818 420.5h1M962 420.5h1M1106 420.5h1M1250 420.5h1M1394 420.5h1M98 425.5h1M242 425.5h1M530 425.5h1M674 425.5h1M818 425.5h1M962 425.5h1M1106 425.5h1M1250 425.5h1M1394 425.5h1M98 430.5h1M242 430.5h1M530 430.5h1M674 430.5h1M818 430.5h1M962 430.5h1M1106 430.5h1M1250 430.5h1M1394 430.5h1M98 434.5h1M242 434.5h1M530 434.5h1M674 434.5h1M818 434.5h1M962 434.5h1M1106 434.5h1M1250 434.5h1M1394 434.5h1M98 439.5h1M242 439.5h1M530 439.5h1M674 439.5h1M818 439.5h1M962 439.5h1M1106 439.5h1M1250 439.5h1M1394 439.5h1M98 444.5h1M242 444.5h1M530 444.5h1M674 444.5h1M818 444.5h1M962 444.5h1M1106 444.5h1M1250 444.5h1M1394 444.5h1M98 449.5h1M242 449.5h1M530 449.5h1M674 449.5h1M818 449.5h1M962 449.5h1M1106 449.5h1M1250 449.5h1M1394 449.5h1M98 454.5h1M242 454.5h1M530 454.5h1M674 454.5h1M818 454.5h1M962 454.5h1M1106 454.5h1M1250 454.5h1M1394 454.5h1M98 458.5h1M242 458.5h1M530 458.5h1M674 458.5h1M818 458.5h1M962 458.5h1M1106 458.5h1M1250 458.5h1M1394 458.5h1M98 463.5h1M242 463.5h1M530 463.5h1M674 463.5h1M818 463.5h1M962 463.5h1M1106 463.5h1M1250 463.5h1M1394 463.5h1M98 468.5h1M242 468.5h1M530 468.5h1M674 468.5h1M818 468.5h1M962 468.5h1M1106 468.5h1M1250 468.5h1M1394 468.5h1M98 473.5h1M242 473.5h1M530 473.5h1M674 473.5h1M818 473.5h1M962 473.5h1M1106 473.5h1M1250 473.5h1M1394 473.5h1M98 478.5h1M242 478.5h1M530 478.5h1M674 478.5h1M818 478.5h1M962 478.5h1M1106 478.5h1M1250 478.5h1M1394 478.5h1M98 483.5h1M242 483.5h1M530 483.5h1M674 483.5h1M818 483.5h1M962 483.5h1M1106 483.5h1M1250 483.5h1M1394 483.5h1M98 487.5h1M242 487.5h1M530 487.5h1M674 487.5h1M818 487.5h1M962 487.5h1M1106 487.5h1M1250 487.5h1M1394 487.5h1M98 492.5h1M242 492.5h1M530 492.5h1M674 492.5h1M818 492.5h1M962 492.5h1M1106 492.5h1M1250 492.5h1M1394 492.5h1M98 497.5h1M242 497.5h1M530 497.5h1M674 497.5h1M818 497.5h1M962 497.5h1M1106 497.5h1M1250 497.5h1M1394 497.5h1M98 502.5h1M242 502.5h1M530 502.5h1M674 502.5h1M818 502.5h1M962 502.5h1M1106 502.5h1M1250 502.5h1M1394 502.5h1M98 513.5h1M242 513.5h1M530 513.5h1M674 513.5h1M818 513.5h1M962 513.5h1M1106 513.5h1M1250 513.5h1M1394 513.5h1M98 517.5h1M242 517.5h1M530 517.5h1M674 517.5h1M818 517.5h1M962 517.5h1M1106 517.5h1M1250 517.5h1M1394 517.5h1M98 522.5h1M242 522.5h1M530 522.5h1M674 522.5h1M818 522.5h1M962 522.5h1M1106 522.5h1M1250 522.5h1M1394 522.5h1M98 527.5h1M242 527.5h1M530 527.5h1M674 527.5h1M818 527.5h1M962 527.5h1M1106 527.5h1M1250 527.5h1M1394 527.5h1M98 532.5h1M242 532.5h1M530 532.5h1M674 532.5h1M818 532.5h1M962 532.5h1M1106 532.5h1M1250 532.5h1M1394 532.5h1M98 537.5h1M242 537.5h1M530 537.5h1M674 537.5h1M818 537.5h1M962 537.5h1M1106 537.5h1M1250 537.5h1M1394 537.5h1M98 541.5h1M242 541.5h1M530 541.5h1M674 541.5h1M818 541.5h1M962 541.5h1M1106 541.5h1M1250 541.5h1M1394 541.5h1M98 546.5h1M242 546.5h1M530 546.5h1M674 546.5h1M818 546.5h1M962 546.5h1M1106 546.5h1M1250 546.5h1M1394 546.5h1M98 551.5h1M242 551.5h1M530 551.5h1M674 551.5h1M818 551.5h1M962 551.5h1M1106 551.5h1M1250 551.5h1M1394 551.5h1M98 556.5h1M242 556.5h1M530 556.5h1M674 556.5h1M818 556.5h1M962 556.5h1M1106 556.5h1M1250 556.5h1M1394 556.5h1M98 561.5h1M242 561.5h1M530 561.5h1M674 561.5h1M818 561.5h1M962 561.5h1M1106 561.5h1M1250 561.5h1M1394 561.5h1M98 566.5h1M242 566.5h1M530 566.5h1M674 566.5h1M818 566.5h1M962 566.5h1M1106 566.5h1M1250 566.5h1M1394 566.5h1M98 570.5h1M242 570.5h1M530 570.5h1M674 570.5h1M818 570.5h1M962 570.5h1M1106 570.5h1M1250 570.5h1M1394 570.5h1M98 575.5h1M242 575.5h1M530 575.5h1M674 575.5h1M818 575.5h1M962 575.5h1M1106 575.5h1M1250 575.5h1M1394 575.5h1M98 580.5h1M242 580.5h1M530 580.5h1M674 580.5h1M818 580.5h1M962 580.5h1M1106 580.5h1M1250 580.5h1M1394 580.5h1M98 585.5h1M242 585.5h1M530 585.5h1M674 585.5h1M818 585.5h1M962 585.5h1M1106 585.5h1M1250 585.5h1M1394 585.5h1M98 590.5h1M242 590.5h1M530 590.5h1M674 590.5h1M818 590.5h1M962 590.5h1M1106 590.5h1M1250 590.5h1M1394 590.5h1M98 595.5h1M242 595.5h1M530 595.5h1M674 595.5h1M818 595.5h1M962 595.5h1M1106 595.5h1M1250 595.5h1M1394 595.5h1M98 599.5h1M242 599.5h1M530 599.5h1M674 599.5h1M818 599.5h1M962 599.5h1M1106 599.5h1M1250 599.5h1M1394 599.5h1M98 604.5h1M242 604.5h1M530 604.5h1M674 604.5h1M818 604.5h1M962 604.5h1M1106 604.5h1M1250 604.5h1M1394 604.5h1M98 609.5h1M242 609.5h1M530 609.5h1M674 609.5h1M818 609.5h1M962 609.5h1M1106 609.5h1M1250 609.5h1M1394 609.5h1M98 614.5h1M242 614.5h1M530 614.5h1M674 614.5h1M818 614.5h1M962 614.5h1M1106 614.5h1M1250 614.5h1M1394 614.5h1M98 619.5h1M242 619.5h1M530 619.5h1M674 619.5h1M818 619.5h1M962 619.5h1M1106 619.5h1M1250 619.5h1M1394 619.5h1M98 623.5h1M242 623.5h1M530 623.5h1M674 623.5h1M818 623.5h1M962 623.5h1M1106 623.5h1M1250 623.5h1M1394 623.5h1M98 628.5h1M242 628.5h1M530 628.5h1M674 628.5h1M818 628.5h1M962 628.5h1M1106 628.5h1M1250 628.5h1M1394 628.5h1M98 633.5h1M242 633.5h1M530 633.5h1M674 633.5h1M818 633.5h1M962 633.5h1M1106 633.5h1M1250 633.5h1M1394 633.5h1M98 638.5h1M242 638.5h1M530 638.5h1M674 638.5h1M818 638.5h1M962 638.5h1M1106 638.5h1M1250 638.5h1M1394 638.5h1M98 643.5h1M242 643.5h1M530 643.5h1M674 643.5h1M818 643.5h1M962 643.5h1M1106 643.5h1M1250 643.5h1M1394 643.5h1M98 648.5h1M242 648.5h1M530 648.5h1M674 648.5h1M818 648.5h1M962 648.5h1M1106 648.5h1M1250 648.5h1M1394 648.5h1M98 652.5h1M242 652.5h1M530 652.5h1M674 652.5h1M818 652.5h1M962 652.5h1M1106 652.5h1M1250 652.5h1M1394 652.5h1M98 657.5h1M242 657.5h1M530 657.5h1M674 657.5h1M818 657.5h1M962 657.5h1M1106 657.5h1M1250 657.5h1M1394 657.5h1M98 662.5h1M242 662.5h1M530 662.5h1M674 662.5h1M818 662.5h1M962 662.5h1M1106 662.5h1M1250 662.5h1M1394 662.5h1M98 667.5h1M242 667.5h1M530 667.5h1M674 667.5h1M818 667.5h1M962 667.5h1M1106 667.5h1M1250 667.5h1M1394 667.5h1M98 672.5h1M242 672.5h1M530 672.5h1M674 672.5h1M818 672.5h1M962 672.5h1M1106 672.5h1M1250 672.5h1M1394 672.5h1M98 676.5h1M242 676.5h1M530 676.5h1M674 676.5h1M818 676.5h1M962 676.5h1M1106 676.5h1M1250 676.5h1M1394 676.5h1M98 681.5h1M242 681.5h1M530 681.5h1M674 681.5h1M818 681.5h1M962 681.5h1M1106 681.5h1M1250 681.5h1M1394 681.5h1M98 686.5h1M242 686.5h1M530 686.5h1M674 686.5h1M818 686.5h1M962 686.5h1M1106 686.5h1M1250 686.5h1M1394 686.5h1M98 691.5h1M242 691.5h1M530 691.5h1M674 691.5h1M818 691.5h1M962 691.5h1M1106 691.5h1M1250 691.5h1M1394 691.5h1M98 696.5h1M242 696.5h1M530 696.5h1M674 696.5h1M818 696.5h1M962 696.5h1M1106 696.5h1M1250 696.5h1M1394 696.5h1M98 701.5h1M242 701.5h1M530 701.5h1M674 701.5h1M818 701.5h1M962 701.5h1M1106 701.5h1M1250 701.5h1M1394 701.5h1M98 705.5h1M242 705.5h1M530 705.5h1M674 705.5h1M818 705.5h1M962 705.5h1M1106 705.5h1M1250 705.5h1M1394 705.5h1M98 710.5h1M242 710.5h1M530 710.5h1M674 710.5h1M818 710.5h1M962 710.5h1M1106 710.5h1M1250 710.5h1M1394 710.5h1M98 715.5h1M242 715.5h1M530 715.5h1M674 715.5h1M818 715.5h1M962 715.5h1M1106 715.5h1M1250 715.5h1M1394 715.5h1M98 720.5h1M242 720.5h1M530 720.5h1M674 720.5h1M818 720.5h1M962 720.5h1M1106 720.5h1M1250 720.5h1M1394 720.5h1M98 725.5h1M242 725.5h1M530 725.5h1M674 725.5h1M818 725.5h1M962 725.5h1M1106 725.5h1M1250 725.5h1M1394 725.5h1M98 729.5h1M242 729.5h1M530 729.5h1M674 729.5h1M818 729.5h1M962 729.5h1M1106 729.5h1M1250 729.5h1M1394 729.5h1M98 734.5h1M242 734.5h1M530 734.5h1M674 734.5h1M818 734.5h1M962 734.5h1M1106 734.5h1M1250 734.5h1M1394 734.5h1M98 739.5h1M242 739.5h1M530 739.5h1M674 739.5h1M818 739.5h1M962 739.5h1M1106 739.5h1M1250 739.5h1M1394 739.5h1M98 744.5h1M242 744.5h1M530 744.5h1M674 744.5h1M818 744.5h1M962 744.5h1M1106 744.5h1M1250 744.5h1M1394 744.5h1M98 754.5h1M242 754.5h1M530 754.5h1M674 754.5h1M818 754.5h1M962 754.5h1M1106 754.5h1M1250 754.5h1M1394 754.5h1M98 758.5h1M242 758.5h1M530 758.5h1M674 758.5h1M818 758.5h1M962 758.5h1M1106 758.5h1M1250 758.5h1M1394 758.5h1M98 763.5h1M242 763.5h1M530 763.5h1M674 763.5h1M818 763.5h1M962 763.5h1M1106 763.5h1M1250 763.5h1M1394 763.5h1M98 768.5h1M242 768.5h1M530 768.5h1M674 768.5h1M818 768.5h1M962 768.5h1M1106 768.5h1M1250 768.5h1M1394 768.5h1M98 773.5h1M242 773.5h1M530 773.5h1M674 773.5h1M818 773.5h1M962 773.5h1M1106 773.5h1M1250 773.5h1M1394 773.5h1M98 778.5h1M242 778.5h1M530 778.5h1M674 778.5h1M818 778.5h1M962 778.5h1M1106 778.5h1M1250 778.5h1M1394 778.5h1M98 783.5h1M242 783.5h1M530 783.5h1M674 783.5h1M818 783.5h1M962 783.5h1M1106 783.5h1M1250 783.5h1M1394 783.5h1M98 787.5h1M242 787.5h1M530 787.5h1M674 787.5h1M818 787.5h1M962 787.5h1M1106 787.5h1M1250 787.5h1M1394 787.5h1M98 792.5h1M242 792.5h1M530 792.5h1M674 792.5h1M818 792.5h1M962 792.5h1M1106 792.5h1M1250 792.5h1M1394 792.5h1M98 797.5h1M242 797.5h1M530 797.5h1M674 797.5h1M818 797.5h1M962 797.5h1M1106 797.5h1M1250 797.5h1M1394 797.5h1M98 802.5h1M242 802.5h1M530 802.5h1M674 802.5h1M818 802.5h1M962 802.5h1M1106 802.5h1M1250 802.5h1M1394 802.5h1M98 807.5h1M242 807.5h1M530 807.5h1M674 807.5h1M818 807.5h1M962 807.5h1M1106 807.5h1M1250 807.5h1M1394 807.5h1M98 812.5h1M242 812.5h1M530 812.5h1M674 812.5h1M818 812.5h1M962 812.5h1M1106 812.5h1M1250 812.5h1M1394 812.5h1M98 816.5h1M242 816.5h1M530 816.5h1M674 816.5h1M818 816.5h1M962 816.5h1M1106 816.5h1M1250 816.5h1M1394 816.5h1M98 821.5h1M242 821.5h1M530 821.5h1M674 821.5h1M818 821.5h1M962 821.5h1M1106 821.5h1M1250 821.5h1M1394 821.5h1M98 826.5h1M242 826.5h1M530 826.5h1M674 826.5h1M818 826.5h1M962 826.5h1M1106 826.5h1M1250 826.5h1M1394 826.5h1M98 831.5h1M242 831.5h1M530 831.5h1M674 831.5h1M818 831.5h1M962 831.5h1M1106 831.5h1M1250 831.5h1M1394 831.5h1M98 836.5h1M242 836.5h1M530 836.5h1M674 836.5h1M818 836.5h1M962 836.5h1M1106 836.5h1M1250 836.5h1M1394 836.5h1M98 840.5h1M242 840.5h1M530 840.5h1M674 840.5h1M818 840.5h1M962 840.5h1M1106 840.5h1M1250 840.5h1M1394 840.5h1M98 845.5h1M242 845.5h1M530 845.5h1M674 845.5h1M818 845.5h1M962 845.5h1M1106 845.5h1M1250 845.5h1M1394 845.5h1M98 850.5h1M242 850.5h1M530 850.5h1M674 850.5h1M818 850.5h1M962 850.5h1M1106 850.5h1M1250 850.5h1M1394 850.5h1M98 855.5h1M242 855.5h1M530 855.5h1M674 855.5h1M818 855.5h1M962 855.5h1M1106 855.5h1M1250 855.5h1M1394 855.5h1M98 860.5h1M242 860.5h1M530 860.5h1M674 860.5h1M818 860.5h1M962 860.5h1M1106 860.5h1M1250 860.5h1M1394 860.5h1M98 865.5h1M242 865.5h1M530 865.5h1M674 865.5h1M818 865.5h1M962 865.5h1M1106 865.5h1M1250 865.5h1M1394 865.5h1M98 869.5h1M242 869.5h1M530 869.5h1M674 869.5h1M818 869.5h1M962 869.5h1M1106 869.5h1M1250 869.5h1M1394 869.5h1M98 874.5h1M242 874.5h1M530 874.5h1M674 874.5h1M818 874.5h1M962 874.5h1M1106 874.5h1M1250 874.5h1M1394 874.5h1M98 879.5h1M242 879.5h1M530 879.5h1M674 879.5h1M818 879.5h1M962 879.5h1M1106 879.5h1M1250 879.5h1M1394 879.5h1M98 884.5h1M242 884.5h1M530 884.5h1M674 884.5h1M818 884.5h1M962 884.5h1M1106 884.5h1M1250 884.5h1M1394 884.5h1M98 889.5h1M242 889.5h1M530 889.5h1M674 889.5h1M818 889.5h1M962 889.5h1M1106 889.5h1M1250 889.5h1M1394 889.5h1M98 893.5h1M242 893.5h1M530 893.5h1M674 893.5h1M818 893.5h1M962 893.5h1M1106 893.5h1M1250 893.5h1M1394 893.5h1M98 898.5h1M242 898.5h1M530 898.5h1M674 898.5h1M818 898.5h1M962 898.5h1M1106 898.5h1M1250 898.5h1M1394 898.5h1M98 903.5h1M242 903.5h1M530 903.5h1M674 903.5h1M818 903.5h1M962 903.5h1M1106 903.5h1M1250 903.5h1M1394 903.5h1M98 908.5h1M242 908.5h1M530 908.5h1M674 908.5h1M818 908.5h1M962 908.5h1M1106 908.5h1M1250 908.5h1M1394 908.5h1M98 913.5h1M242 913.5h1M530 913.5h1M674 913.5h1M818 913.5h1M962 913.5h1M1106 913.5h1M1250 913.5h1M1394 913.5h1M98 918.5h1M242 918.5h1M530 918.5h1M674 918.5h1M818 918.5h1M962 918.5h1M1106 918.5h1M1250 918.5h1M1394 918.5h1M98 922.5h1M242 922.5h1M530 922.5h1M674 922.5h1M818 922.5h1M962 922.5h1M1106 922.5h1M1250 922.5h1M1394 922.5h1M98 927.5h1M242 927.5h1M530 927.5h1M674 927.5h1M818 927.5h1M962 927.5h1M1106 927.5h1M1250 927.5h1M1394 927.5h1M98 932.5h1M242 932.5h1M530 932.5h1M674 932.5h1M818 932.5h1M962 932.5h1M1106 932.5h1M1250 932.5h1M1394 932.5h1M98 937.5h1M242 937.5h1M530 937.5h1M674 937.5h1M818 937.5h1M962 937.5h1M1106 937.5h1M1250 937.5h1M1394 937.5h1M98 942.5h1M242 942.5h1M530 942.5h1M674 942.5h1M818 942.5h1M962 942.5h1M1106 942.5h1M1250 942.5h1M1394 942.5h1M98 946.5h1M242 946.5h1M530 946.5h1M674 946.5h1M818 946.5h1M962 946.5h1M1106 946.5h1M1250 946.5h1M1394 946.5h1M98 951.5h1M242 951.5h1M530 951.5h1M674 951.5h1M818 951.5h1M962 951.5h1M1106 951.5h1M1250 951.5h1M1394 951.5h1M98 956.5h1M242 956.5h1M530 956.5h1M674 956.5h1M818 956.5h1M962 956.5h1M1106 956.5h1M1250 956.5h1M1394 956.5h1M98 961.5h1M242 961.5h1M530 961.5h1M674 961.5h1M818 961.5h1M962 961.5h1M1106 961.5h1M1250 961.5h1M1394 961.5h1M98 966.5h1M242 966.5h1M530 966.5h1M674 966.5h1M818 966.5h1M962 966.5h1M1106 966.5h1M1250 966.5h1M1394 966.5h1M98 971.5h1M242 971.5h1M530 971.5h1M674 971.5h1M818 971.5h1M962 971.5h1M1106 971.5h1M1250 971.5h1M1394 971.5h1" stroke="#b4b4b4" stroke-width="1" fill="none" shape-rendering="crispEdges"/>
<path d="M12 275.5h1M40 275.5h1M69 275.5h1M127 275.5h1M156 275.5h1M184 275.5h1M213 275.5h1M271 275.5h1M300 275.5h1M328 275.5h1M357 275.5h1M415 275.5h1M444 275.5h1M472 275.5h1M501 275.5h1M559 275.5h1M588 275.5h1M616 275.5h1M645 275.5h1M703 275.5h1M732 275.5h1M760 275.5h1M789 275.5h1M847 275.5h1M876 275.5h1M904 275.5h1M933 275.5h1M991 275.5h1M1020 275.5h1M1048 275.5h1M1077 275.5h1M1135 275.5h1M1164 275.5h1M1192 275.5h1M1221 275.5h1M1279 275.5h1M1308 275.5h1M1336 275.5h1M1365 275.5h1M1423 275.5h1M12 299.5h1M40 299.5h1M69 299.5h1M127 299.5h1M156 299.5h1M184 299.5h1M213 299.5h1M271 299.5h1M300 299.5h1M328 299.5h1M357 299.5h1M415 299.5h1M444 299.5h1M472 299.5h1M501 299.5h1M559 299.5h1M588 299.5h1M616 299.5h1M645 299.5h1M703 299.5h1M732 299.5h1M760 299.5h1M789 299.5h1M847 299.5h1M876 299.5h1M904 299.5h1M933 299.5h1M991 299.5h1M1020 299.5h1M1048 299.5h1M1077 299.5h1M1135 299.5h1M1164 299.5h1M1192 299.5h1M1221 299.5h1M1279 299.5h1M1308 299.5h1M1336 299.5h1M1365 299.5h1M1423 299.5h1M12 324.5h1M40 324.5h1M69 324.5h1M127 324.5h1M156 324.5h1M184 324.5h1M213 324.5h1M271 324.5h1M300 324.5h1M328 324.5h1M357 324.5h1M415 324.5h1M444 324.5h1M472 324.5h1M501 324.5h1M559 324.5h1M588 324.5h1M616 324.5h1M645 324.5h1M703 324.5h1M732 324.5h1M760 324.5h1M789 324.5h1M847 324.5h1M876 324.5h1M904 324.5h1M933 324.5h1M991 324.5h1M1020 324.5h1M1048 324.5h1M1077 324.5h1M1135 324.5h1M1164 324.5h1M1192 324.5h1M1221 324.5h1M1279 324.5h1M1308 324.5h1M1336 324.5h1M1365 324.5h1M1423 324.5h1M12 348.5h1M40 348.5h1M69 348.5h1M127 348.5h1M156 348.5h1M184 348.5h1M213 348.5h1M271 348.5h1M300 348.5h1M328 348.5h1M357 348.5h1M415 348.5h1M444 348.5h1M472 348.5h1M501 348.5h1M559 348.5h1M588 348.5h1M616 348.5h1M645 348.5h1M703 348.5h1M732 348.5h1M760 348.5h1M789 348.5h1M847 348.5h1M876 348.5h1M904 348.5h1M933 348.5h1M991 348.5h1M1020 348.5h1M1048 348.5h1M1077 348.5h1M1135 348.5h1M1164 348.5h1M1192 348.5h1M1221 348.5h1M1279 348.5h1M1308 348.5h1M1336 348.5h1M1365 348.5h1M1423 348.5h1M12 372.5h1M40 372.5h1M69 372.5h1M127 372.5h1M156 372.5h1M184 372.5h1M213 372.5h1M271 372.5h1M300 372.5h1M328 372.5h1M357 372.5h1M415 372.5h1M444 372.5h1M472 372.5h1M501 372.5h1M559 372.5h1M588 372.5h1M616 372.5h1M645 372.5h1M703 372.5h1M732 372.5h1M760 372.5h1M789 372.5h1M847 372.5h1M876 372.5h1M904 372.5h1M933 372.5h1M991 372.5h1M1020 372.5h1M1048 372.5h1M1077 372.5h1M1135 372.5h1M1164 372.5h1M1192 372.5h1M1221 372.5h1M1279 372.5h1M1308 372.5h1M1336 372.5h1M1365 372.5h1M1423 372.5h1M12 396.5h1M40 396.5h1M69 396.5h1M127 396.5h1M156 396.5h1M184 396.5h1M213 396.5h1M271 396.5h1M300 396.5h1M328 396.5h1M357 396.5h1M415 396.5h1M444 396.5h1M472 396.5h1M501 396.5h1M559 396.5h1M588 396.5h1M616 396.5h1M645 396.5h1M703 396.5h1M732 396.5h1M760 396.5h1M789 396.5h1M847 396.5h1M876 396.5h1M904 396.5h1M933 396.5h1M991 396.5h1M1020 396.5h1M1048 396.5h1M1077 396.5h1M1135 396.5h1M1164 396.5h1M1192 396.5h1M1221 396.5h1M1279 396.5h1M1308 396.5h1M1336 396.5h1M1365 396.5h1M1423 396.5h1M12 420.5h1M40 420.5h1M69 420.5h1M127 420.5h1M156 420.5h1M184 420.5h1M213 420.5h1M271 420.5h1M300 420.5h1M328 420.5h1M357 420.5h1M415 420.5h1M444 420.5h1M472 420.5h1M501 420.5h1M559 420.5h1M588 420.5h1M616 420.5h1M645 420.5h1M703 420.5h1M732 420.5h1M760 420.5h1M789 420.5h1M847 420.5h1M876 420.5h1M904 420.5h1M933 420.5h1M991 420.5h1M1020 420.5h1M1048 420.5h1M1077 420.5h1M1135 420.5h1M1164 420.5h1M1192 420.5h1M1221 420.5h1M1279 420.5h1M1308 420.5h1M1336 420.5h1M1365 420.5h1M1423 420.5h1M12 444.5h1M40 444.5h1M69 444.5h1M127 444.5h1M156 444.5h1M184 444.5h1M213 444.5h1M271 444.5h1M300 444.5h1M328 444.5h1M357 444.5h1M415 444.5h1M444 444.5h1M472 444.5h1M501 444.5h1M559 444.5h1M588 444.5h1M616 444.5h1M645 444.5h1M703 444.5h1M732 444.5h1M760 444.5h1M789 444.5h1M847 444.5h1M876 444.5h1M904 444.5h1M933 444.5h1M991 444.5h1M1020 444.5h1M1048 444.5h1M1077 444.5h1M1135 444.5h1M1164 444.5h1M1192 444.5h1M1221 444.5h1M1279 444.5h1M1308 444.5h1M1336 444.5h1M1365 444.5h1M1423 444.5h1M12 468.5h1M40 468.5h1M69 468.5h1M127 468.5h1M156 468.5h1M184 468.5h1M213 468.5h1M271 468.5h1M300 468.5h1M328 468.5h1M357 468.5h1M415 468.5h1M444 468.5h1M472 468.5h1M501 468.5h1M559 468.5h1M588 468.5h1M616 468.5h1M645 468.5h1M703 468.5h1M732 468.5h1M760 468.5h1M789 468.5h1M847 468.5h1M876 468.5h1M904 468.5h1M933 468.5h1M991 468.5h1M1020 468.5h1M1048 468.5h1M1077 468.5h1M1135 468.5h1M1164 468.5h1M1192 468.5h1M1221 468.5h1M1279 468.5h1M1308 468.5h1M1336 468.5h1M1365 468.5h1M1423 468.5h1M12 492.5h1M40 492.5h1M69 492.5h1M127 492.5h1M156 492.5h1M184 492.5h1M213 492.5h1M271 492.5h1M300 492.5h1M328 492.5h1M357 492.5h1M415 492.5h1M444 492.5h1M472 492.5h1M501 492.5h1M559 492.5h1M588 492.5h1M616 492.5h1M645 492.5h1M703 492.5h1M732 492.5h1M760 492.5h1M789 492.5h1M847 492.5h1M876 492.5h1M904 492.5h1M933 492.5h1M991 492.5h1M1020 492.5h1M1048 492.5h1M1077 492.5h1M1135 492.5h1M1164 492.5h1M1192 492.5h1M1221 492.5h1M1279 492.5h1M1308 492.5h1M1336 492.5h1M1365 492.5h1M1423 492.5h1M12 522.5h1M40 522.5h1M69 522.5h1M127 522.5h1M156 522.5h1M184 522.5h1M213 522.5h1M271 522.5h1M300 522.5h1M328 522.5h1M357 522.5h1M415 522.5h1M444 522.5h1M472 522.5h1M501 522.5h1M559 522.5h1M588 522.5h1M616 522.5h1M645 522.5h1M703 522.5h1M732 522.5h1M760 522.5h1M789 522.5h1M847 522.5h1M876 522.5h1M904 522.5h1M933 522.5h1M991 522.5h1M1020 522.5h1M1048 522.5h1M1077 522.5h1M1135 522.5h1M1164 522.5h1M1192 522.5h1M1221 522.5h1M1279 522.5h1M1308 522.5h1M1336 522.5h1M1365 522.5h1M1423 522.5h1M12 546.5h1M40 546.5h1M69 546.5h1M127 546.5h1M156 546.5h1M184 546.5h1M213 546.5h1M271 546.5h1M300 546.5h1M328 546.5h1M357 546.5h1M415 546.5h1M444 546.5h1M472 546.5h1M501 546.5h1M559 546.5h1M588 546.5h1M616 546.5h1M645 546.5h1M703 546.5h1M732 546.5h1M760 546.5h1M789 546.5h1M847 546.5h1M876 546.5h1M904 546.5h1M933 546.5h1M991 546.5h1M1020 546.5h1M1048 546.5h1M1077 546.5h1M1135 546.5h1M1164 546.5h1M1192 546.5h1M1221 546.5h1M1279 546.5h1M1308 546.5h1M1336 546.5h1M1365 546.5h1M1423 546.5h1M12 570.5h1M40 570.5h1M69 570.5h1M127 570.5h1M156 570.5h1M184 570.5h1M213 570.5h1M271 570.5h1M300 570.5h1M328 570.5h1M357 570.5h1M415 570.5h1M444 570.5h1M472 570.5h1M501 570.5h1M559 570.5h1M588 570.5h1M616 570.5h1M645 570.5h1M703 570.5h1M732 570.5h1M760 570.5h1M789 570.5h1M847 570.5h1M876 570.5h1M904 570.5h1M933 570.5h1M991 570.5h1M1020 570.5h1M1048 570.5h1M1077 570.5h1M1135 570.5h1M1164 570.5h1M1192 570.5h1M1221 570.5h1M1279 570.5h1M1308 570.5h1M1336 570.5h1M1365 570.5h1M1423 570.5h1M12 595.5h1M40 595.5h1M69 595.5h1M127 595.5h1M156 595.5h1M184 595.5h1M213 595.5h1M271 595.5h1M300 595.5h1M328 595.5h1M357 595.5h1M415 595.5h1M444 595.5h1M472 595.5h1M501 595.5h1M559 595.5h1M588 595.5h1M616 595.5h1M645 595.5h1M703 595.5h1M732 595.5h1M760 595.5h1M789 595.5h1M847 595.5h1M876 595.5h1M904 595.5h1M933 595.5h1M991 595.5h1M1020 595.5h1M1048 595.5h1M1077 595.5h1M1135 595.5h1M1164 595.5h1M1192 595.5h1M1221 595.5h1M1279 595.5h1M1308 595.5h1M1336 595.5h1M1365 595.5h1M1423 595.5h1M12 619.5h1M40 619.5h1M69 619.5h1M127 619.5h1M156 619.5h1M184 619.5h1M213 619.5h1M271 619.5h1M300 619.5h1M328 619.5h1M357 619.5h1M415 619.5h1M444 619.5h1M472 619.5h1M501 619.5h1M559 619.5h1M588 619.5h1M616 619.5h1M645 619.5h1M703 619.5h1M732 619.5h1M760 619.5h1M789 619.5h1M847 619.5h1M876 619.5h1M904 619.5h1M933 619.5h1M991 619.5h1M1020 619.5h1M1048 619.5h1M1077 619.5h1M1135 619.5h1M1164 619.5h1M1192 619.5h1M1221 619.5h1M1279 619.5h1M1308 619.5h1M1336 619.5h1M1365 619.5h1M1423 619.5h1M12 643.5h1M40 643.5h1M69 643.5h1M127 643.5h1M156 643.5h1M184 643.5h1M213 643.5h1M271 643.5h1M300 643.5h1M328 643.5h1M357 643.5h1M415 643.5h1M444 643.5h1M472 643.5h1M501 643.5h1M559 643.5h1M588 643.5h1M616 643.5h1M645 643.5h1M703 643.5h1M732 643.5h1M760 643.5h1M789 643.5h1M847 643.5h1M876 643.5h1M904 643.5h1M933 643.5h1M991 643.5h1M1020 643.5h1M1048 643.5h1M1077 643.5h1M1135 643.5h1M1164 643.5h1M1192 643.5h1M1221 643.5h1M1279 643.5h1M1308 643.5h1M1336 643.5h1M1365 643.5h1M1423 643.5h1M12 667.5h1M40 667.5h1M69 667.5h1M127 667.5h1M156 667.5h1M184 667.5h1M213 667.5h1M271 667.5h1M300 667.5h1M328 667.5h1M357 667.5h1M415 667.5h1M444 667.5h1M472 667.5h1M501 667.5h1M559 667.5h1M588 667.5h1M616 667.5h1M645 667.5h1M703 667.5h1M732 667.5h1M760 667.5h1M789 667.5h1M847 667.5h1M876 667.5h1M904 667.5h1M933 667.5h1M991 667.5h1M1020 667.5h1M1048 667.5h1M1077 667.5h1M1135 667.5h1M1164 667.5h1M1192 667.5h1M1221 667.5h1M1279 667.5h1M1308 667.5h1M1336 667.5h1M1365 667.5h1M1423 667.5h1M12 691.5h1M40 691.5h1M69 691.5h1M127 691.5h1M156 691.5h1M184 691.5h1M213 691.5h1M271 691.5h1M300 691.5h1M328 691.5h1M357 691.5h1M415 691.5h1M444 691.5h1M472 691.5h1M501 691.5h1M559 691.5h1M588 691.5h1M616 691.5h1M645 691.5h1M703 691.5h1M732 691.5h1M760 691.5h1M789 691.5h1M847 691.5h1M876 691.5h1M904 691.5h1M933 691.5h1M991 691.5h1M1020 691.5h1M1048 691.5h1M1077 691.5h1M1135 691.5h1M1164 691.5h1M1192 691.5h1M1221 691.5h1M1279 691.5h1M1308 691.5h1M1336 691.5h1M1365 691.5h1M1423 691.5h1M12 715.5h1M40 715.5h1M69 715.5h1M127 715.5h1M156 715.5h1M184 715.5h1M213 715.5h1M271 715.5h1M300 715.5h1M328 715.5h1M357 715.5h1M415 715.5h1M444 715.5h1M472 715.5h1M501 715.5h1M559 715.5h1M588 715.5h1M616 715.5h1M645 715.5h1M703 715.5h1M732 715.5h1M760 715.5h1M789 715.5h1M847 715.5h1M876 715.5h1M904 715.5h1M933 715.5h1M991 715.5h1M1020 715.5h1M1048 715.5h1M1077 715.5h1M1135 715.5h1M1164 715.5h1M1192 715.5h1M1221 715.5h1M1279 715.5h1M1308 715.5h1M1336 715.5h1M1365 715.5h1M1423 715.5h1M12 739.5h1M40 739.5h1M69 739.5h1M127 739.5h1M156 739.5h1M184 739.5h1M213 739.5h1M271 739.5h1M300 739.5h1M328 739.5h1M357 739.5h1M415 739.5h1M444 739.5h1M472 739.5h1M501 739.5h1M559 739.5h1M588 739.5h1M616 739.5h1M645 739.5h1M703 739.5h1M732 739.5h1M760 739.5h1M789 739.5h1M847 739.5h1M876 739.5h1M904 739.5h1M933 739.5h1M991 739.5h1M1020 739.5h1M1048 739.5h1M1077 739.5h1M1135 739.5h1M1164 739.5h1M1192 739.5h1M1221 739.5h1M1279 739.5h1M1308 739.5h1M1336 739.5h1M1365 739.5h1M1423 739.5h1" stroke="#a4a4a4" stroke-width="1" fill="none" shape-rendering="crispEdges"/>
<line x1="4" y1="469.5" x2="1416" y2="469.5" stroke="#c8c8c8" stroke-width="1" stroke-dasharray="6 4"/>
<line x1="4" y1="691.5" x2="1416" y2="691.5" stroke="#c8c8c8" stroke-width="1" stroke-dasharray="6 4"/>
<rect x="3" y="507.5" width="1441" height="1.6" fill="#6e6e6e"/>
<rect x="3" y="750" width="1441" height="1.6" fill="#6e6e6e"/>
<line x1="386.5" y1="277" x2="386.5" y2="507" stroke="#d0d0d0" stroke-width="1" stroke-dasharray="6 3.5"/>
<line x1="386.5" y1="510" x2="386.5" y2="746" stroke="#d0d0d0" stroke-width="1" stroke-dasharray="6 3.5"/>
<line x1="386.5" y1="780" x2="386.5" y2="975" stroke="#d0d0d0" stroke-width="1" stroke-dasharray="6 3.5"/>
<path d="M3 296.2V296.2h1V296h1V295h1V296h1V296h1V296.7h1V296.5h1V296.5h1V294.6h1V296.2h1V296.2h1V296.1h1V296.5h1V296.3h1V296.1h1V296.3h1V296.5h1V296.2h1V296.6h1V296.5h1V296.7h1V296.2h1V296.1h1V296.6h1V296h1V296.6h1V296.7h1V296.6h1V296.5h1V296.7h1V296.4h1V296h1V296.5h1V296.7h1V296.3h1V296h1V296.1h1V296.6h1V296.3h1V296h1V296.4h1V296.7h1V296.2h1V296.3h1V296.8h1V296.2h1V296.4h1V295.1h1V296.3h1V296.8h1V296.4h1V294.2h1V296.7h1V296.7h1V296.3h1V295.5h1V296.1h1V295.6h1V296h1V296h1V296.5h1V296.3h1V296.1h1V296.8h1V296.1h1V296.3h1V296.7h1V296.8h1V296.1h1V296h1V296.8h1V296.6h1V296.3h1V296.4h1V296.2h1V296.7h1V296.7h1V296.7h1V296.2h1V296.2h1V296.2h1V296.6h1V296.4h1V296.8h1V296.3h1V296.2h1V296.1h1V296.8h1V296.4h1V295h1V296.8h1V296.6h1V296.1h1V296.2h1V296.8h1V296.3h1V296.6h1V296.1h1V296.7h1V296.8h1V296.3h1V293.5h1V296.5h1V296.8h1V296.7h1V296.1h1V296.2h1V296.5h1V296.3h1V296.3h1V296.5h1V296.3h1V296.4h1V295.3h1V294h1V296.1h1V296.6h1V296.2h1V296.4h1V296h1V296.2h1V296.6h1V296.5h1V296.8h1V296.5h1V296.4h1V296.4h1V296.4h1V296.6h1V296.8h1V296.5h1V296.7h1V295.7h1V296h1V296.7h1V296.1h1V296.5h1V296.8h1V296.8h1V296.4h1V296.7h1V296.4h1V296.1h1V295.2h1V295.5h1V296.5h1V296h1V296.7h1V296h1V296h1V296.2h1V296.8h1V296.2h1V296.5h1V294.2h1V293.9h1V296.5h1V296h1V296h1V296.4h1V296.4h1V296.2h1V296.2h1V296h1V296.2h1V296.6h1V296.4h1V296h1V296h1V296.4h1V296.4h1V296h1V296.3h1V296.7h1V296.4h1V296.8h1V296.7h1V296.5h1V295.9h1V296h1V296.2h1V296.7h1V296.6h1V296.2h1V296.4h1V296.2h1V296.8h1V296.2h1V296.2h1V296h1V296.4h1V296.1h1V296h1V296h1V295.2h1V296.2h1V296.4h1V296.5h1V296.7h1V296.2h1V296.1h1V294.4h1V296.8h1V296.6h1V296.1h1V296.4h1V296.7h1V296.5h1V296.6h1V295.8h1V296.3h1V296.5h1V296.5h1V294.3h1V296.6h1V296.4h1V296h1V295.5h1V296.6h1V296.6h1V296.4h1V296.4h1V296.6h1V296.1h1V296.2h1V296.2h1V295.3h1V296.6h1V296.6h1V296.4h1V296.4h1V296.1h1V295.6h1V296.7h1V296.4h1V296.1h1V296.1h1V296.1h1V296.8h1V296.4h1V296.6h1V296.8h1V294.7h1V296.4h1V296.1h1V296.2h1V296h1V296.7h1V302.1V302.1h-1V299h-1V299.2h-1V299.1h-1V299.4h-1V299h-1V299.8h-1V299.6h-1V299.4h-1V301.9h-1V299.1h-1V299.1h-1V299.1h-1V299.4h-1V299.7h-1V299.8h-1V299.1h-1V301.7h-1V299.4h-1V299.6h-1V299.6h-1V299h-1V299.2h-1V299.2h-1V299.5h-1V299.6h-1V299.4h-1V299.4h-1V299.6h-1V299.6h-1V299.2h-1V299h-1V299.4h-1V299.6h-1V299.4h-1V299.5h-1V299.5h-1V301.4h-1V299.2h-1V299.6h-1V299.5h-1V299.7h-1V299.4h-1V299.1h-1V299.6h-1V299.8h-1V299.5h-1V299.1h-1V299.2h-1V299.7h-1V299.5h-1V299.4h-1V299.2h-1V299h-1V299h-1V299h-1V299.1h-1V299.4h-1V299h-1V299.2h-1V299.2h-1V299.8h-1V299.2h-1V300.5h-1V299.2h-1V299.6h-1V299.7h-1V299.4h-1V299h-1V299.3h-1V299.5h-1V299.7h-1V299.8h-1V299.4h-1V299.7h-1V299.3h-1V299h-1V299.4h-1V299.4h-1V299h-1V299h-1V300.3h-1V299.6h-1V299.2h-1V299h-1V299.6h-1V300.6h-1V299.4h-1V299.4h-1V299h-1V299h-1V299.5h-1V299.3h-1V299h-1V299.5h-1V301.6h-1V299.8h-1V300.3h-1V299h-1V299h-1V299.7h-1V299h-1V299.5h-1V299.3h-1V299.6h-1V299.1h-1V299.4h-1V300.8h-1V299.4h-1V299.8h-1V299.8h-1V301.8h-1V299.1h-1V299.7h-1V299h-1V299.3h-1V300h-1V299.5h-1V299.8h-1V299.6h-1V299.4h-1V299.4h-1V299.4h-1V299.5h-1V299.8h-1V299.5h-1V299.6h-1V299.2h-1V299h-1V299.4h-1V299.2h-1V299.6h-1V299.1h-1V299.1h-1V299.4h-1V299.4h-1V299.3h-1V299.5h-1V299.3h-1V301.7h-1V299.5h-1V299.2h-1V299.1h-1V299.7h-1V299.8h-1V299.5h-1V299.1h-1V299.3h-1V299.8h-1V301.8h-1V299.1h-1V299.9h-1V299.3h-1V299.8h-1V299.2h-1V299.1h-1V299.6h-1V299.8h-1V299.7h-1V299.4h-1V299.8h-1V299.1h-1V299.2h-1V299.3h-1V299.8h-1V299.4h-1V299.6h-1V299.2h-1V299.3h-1V299.2h-1V299.7h-1V299.7h-1V299.7h-1V299.2h-1V299.4h-1V301.3h-1V299.6h-1V299.8h-1V299h-1V299.1h-1V299.8h-1V299.8h-1V299.3h-1V299.4h-1V299.8h-1V299.1h-1V299.3h-1V300.2h-1V299h-1V299h-1V299h-1V299.1h-1V299h-1V301h-1V299.7h-1V299.7h-1V299.6h-1V299.4h-1V299.8h-1V299.3h-1V299.2h-1V299.4h-1V299.2h-1V300.3h-1V299.3h-1V299.2h-1V299.7h-1V299.4h-1V299h-1V299.3h-1V300.3h-1V299.3h-1V299h-1V299.3h-1V299.7h-1V299.5h-1V299h-1V299.4h-1V299.7h-1V299.5h-1V299.6h-1V299.7h-1V299.6h-1V299h-1V300.9h-1V299.1h-1V299.2h-1V299.7h-1V299.5h-1V299.6h-1V299.2h-1V299.5h-1V299.3h-1V299.1h-1V299.4h-1V299.5h-1V299.1h-1V299.2h-1V299.5h-1V299.8h-1V299.5h-1V299.5h-1V300.3h-1V300.1h-1V299h-1V299.3h-1V299h-1V300.9h-1Z" fill="#f2e51c" shape-rendering="crispEdges"/>
<path d="M1102 296.4V296.4h1V296h1V296.1h1V296.3h1V296.1h1V295.8h1V296h1V296h1V296.2h1V296.1h1V296.5h1V296.3h1V296.6h1V294.5h1V296.2h1V296.3h1V295.8h1V295.9h1V296.1h1V296.4h1V296h1V296h1V296.1h1V295.9h1V296.2h1V296.6h1V296.2h1V295.8h1V295.8h1V296h1V296.5h1V296.1h1V296.2h1V295.3h1V296.6h1V296.3h1V295.9h1V296h1V296.2h1V296.5h1V293.9h1V296.6h1V295.3h1V296.6h1V296.5h1V296h1V296.2h1V296.6h1V296.3h1V296.2h1V295.8h1V296h1V296.3h1V295.9h1V296.3h1V294.5h1V296.3h1V296h1V295.8h1V296.2h1V296.3h1V296.2h1V296h1V296.4h1V295.8h1V296.4h1V296h1V296.6h1V295.8h1V296.1h1V295.9h1V296.4h1V295.9h1V296h1V296h1V296.4h1V296.6h1V295.9h1V296.1h1V296.6h1V295.9h1V295.7h1V296.1h1V296.5h1V296.6h1V296h1V296.6h1V295.8h1V296.1h1V296h1V296h1V296.6h1V295.9h1V296.5h1V294.9h1V296.1h1V295.9h1V295.5h1V296.5h1V295.6h1V296.6h1V296.4h1V296.1h1V296.6h1V296h1V296h1V295.8h1V296.6h1V296h1V296.2h1V296.6h1V296h1V296.2h1V295.9h1V296.4h1V296.4h1V296h1V296.1h1V295.8h1V296.4h1V294.4h1V296h1V296.5h1V295.7h1V296.2h1V296.2h1V296.1h1V296.4h1V296.5h1V295.9h1V296h1V296.1h1V295.9h1V296h1V296.3h1V296.1h1V296.2h1V296.5h1V296.6h1V296.5h1V295.8h1V295.9h1V296.6h1V296.6h1V296.5h1V296h1V296.6h1V296.3h1V296.1h1V296h1V296.3h1V295.8h1V296.4h1V296h1V296.5h1V295.8h1V296.2h1V295.8h1V296.1h1V296h1V296h1V296.1h1V296.5h1V296.1h1V296.4h1V295.8h1V296.1h1V296.1h1V296.2h1V296.2h1V295h1V296.1h1V295.9h1V296.2h1V295.8h1V296.5h1V295.9h1V296.6h1V295.8h1V296.1h1V296.3h1V295.9h1V295.9h1V296.5h1V295.9h1V296.1h1V296.1h1V296.4h1V295.8h1V294.3h1V295.9h1V296.2h1V296h1V296.3h1V296.3h1V294.5h1V296.2h1V296.4h1V296.2h1V295.8h1V295.8h1V294.6h1V295.8h1V296.4h1V295.8h1V296.1h1V295.9h1V296.6h1V296.5h1V296.6h1V296.6h1V295.9h1V295.7h1V296.4h1V296h1V295.9h1V296.6h1V296h1V295.6h1V295.9h1V296.4h1V295.9h1V295.9h1V296.3h1V296.5h1V296.3h1V295.8h1V296.3h1V296.5h1V296.6h1V296.1h1V296.1h1V295.8h1V296h1V296.6h1V296.3h1V295.4h1V296.3h1V296.2h1V295.9h1V296.3h1V296.1h1V296h1V296.3h1V296.3h1V295.9h1V296h1V296.3h1V296.5h1V294.3h1V296.3h1V296.3h1V296.6h1V296h1V295.8h1V296.1h1V295.8h1V295.8h1V296.6h1V296.3h1V296.3h1V295.9h1V293.7h1V296.5h1V295.8h1V296.4h1V296.4h1V296h1V295.8h1V296.4h1V296.5h1V296h1V296.1h1V296.2h1V296.3h1V295.9h1V295.8h1V296h1V296.6h1V296h1V296h1V296.6h1V296.4h1V296.6h1V296.5h1V296.5h1V296.4h1V296h1V293.9h1V295.6h1V296.6h1V295.8h1V296.4h1V296.4h1V295.8h1V296.1h1V296.5h1V295.8h1V296.6h1V295.8h1V293.6h1V296.5h1V296.5h1V296h1V296.4h1V296h1V295.8h1V296h1V296.1h1V296.6h1V296.5h1V295.8h1V296.1h1V296.1h1V296.2h1V296.5h1V295.4h1V296.4h1V295.8h1V296.2h1V295.9h1V296.1h1V296h1V296h1V296.4h1V295.8h1V295.8h1V296.4h1V296.3h1V296.1h1V294.2h1V295.8h1V296h1V296.2h1V296.5h1V296.2h1V296.4h1V296.3h1V296h1V296.3h1V295.9h1V296.4h1V295.9h1V298.9V298.9h-1V299.4h-1V298.9h-1V299.3h-1V301.2h-1V299.3h-1V299.4h-1V299.2h-1V299.5h-1V299.2h-1V299h-1V298.8h-1V299.6h-1V299.1h-1V299.3h-1V299.4h-1V298.8h-1V298.8h-1V299.4h-1V299h-1V299h-1V299.1h-1V298.9h-1V299.2h-1V298.8h-1V299.4h-1V298.9h-1V301.7h-1V299.2h-1V299.1h-1V299.1h-1V298.8h-1V299.5h-1V299.6h-1V299.1h-1V299h-1V298.8h-1V299h-1V299.4h-1V299.3h-1V299.5h-1V299.5h-1V298.9h-1V298.8h-1V299.6h-1V298.8h-1V299.5h-1V299.1h-1V298.8h-1V299.4h-1V299.4h-1V298.9h-1V299.6h-1V298.9h-1V299.3h-1V299h-1V299.4h-1V299.5h-1V299.5h-1V299.6h-1V299.4h-1V299.6h-1V299h-1V299h-1V299.6h-1V299h-1V298.8h-1V298.9h-1V299.3h-1V299.2h-1V299.1h-1V299h-1V299.5h-1V299.4h-1V298.8h-1V299.6h-1V299.4h-1V299.4h-1V298.8h-1V299.5h-1V299h-1V298.9h-1V299.3h-1V299.3h-1V300.1h-1V298.8h-1V298.8h-1V299.1h-1V298.8h-1V299h-1V299.6h-1V299.3h-1V299.3h-1V299h-1V299.5h-1V299.3h-1V299.2h-1V298.9h-1V299.3h-1V299.3h-1V299h-1V300h-1V299.3h-1V298.9h-1V299.2h-1V299.3h-1V298.8h-1V299.3h-1V299.6h-1V299h-1V298.8h-1V301.1h-1V299.1h-1V299.6h-1V299.5h-1V299.3h-1V298.8h-1V299.3h-1V299.5h-1V299.3h-1V298.9h-1V298.9h-1V299.4h-1V298.9h-1V299h-1V299h-1V299.6h-1V298.9h-1V299h-1V301.8h-1V299.6h-1V298.9h-1V299.6h-1V299.6h-1V299.5h-1V299.6h-1V298.9h-1V299.1h-1V298.8h-1V299.4h-1V298.8h-1V299.2h-1V298.8h-1V300h-1V300.4h-1V299.4h-1V299.2h-1V299.1h-1V299.3h-1V299.3h-1V299h-1V299.2h-1V298.9h-1V299.4h-1V298.8h-1V299.4h-1V299.7h-1V299.1h-1V298.9h-1V299.5h-1V298.9h-1V298.9h-1V299.3h-1V299.1h-1V298.8h-1V299.6h-1V301.4h-1V299.5h-1V298.8h-1V299.2h-1V298.9h-1V299.1h-1V299.6h-1V299.2h-1V299.2h-1V299.1h-1V299.1h-1V298.8h-1V299.4h-1V299.1h-1V299.5h-1V299.1h-1V299h-1V299h-1V299.1h-1V300.6h-1V299.2h-1V299.8h-1V299.5h-1V299h-1V299.4h-1V298.8h-1V299.3h-1V299h-1V299.6h-1V299.3h-1V301.2h-1V299h-1V299.5h-1V299.6h-1V299.6h-1V298.9h-1V299.6h-1V299.5h-1V300.9h-1V299.5h-1V299.2h-1V299.1h-1V299.3h-1V301.3h-1V298.9h-1V299.1h-1V299h-1V298.9h-1V299.5h-1V299.4h-1V299.1h-1V299.2h-1V299.2h-1V299h-1V299.5h-1V299h-1V298.8h-1V299.4h-1V298.8h-1V299.1h-1V299h-1V299.4h-1V299.4h-1V298.9h-1V299.2h-1V299h-1V299.6h-1V299.2h-1V299.6h-1V299.6h-1V298.8h-1V299h-1V299h-1V299.6h-1V299.1h-1V299.4h-1V299.6h-1V298.8h-1V299.5h-1V299.6h-1V298.9h-1V299.1h-1V299.1h-1V299.5h-1V298.9h-1V302.1h-1V299h-1V299.1h-1V299.1h-1V298.8h-1V299.6h-1V299h-1V299.6h-1V299.5h-1V299.1h-1V298.9h-1V298.9h-1V300.6h-1V299.1h-1V298.9h-1V299.6h-1V299.4h-1V299h-1V299h-1V298.9h-1V299.4h-1V298.9h-1V299.1h-1V298.8h-1V299.6h-1V299h-1V299.4h-1V298.8h-1V299.4h-1V299h-1V299.2h-1V299.3h-1V299.2h-1V298.8h-1V299h-1V299.3h-1V298.9h-1V299.3h-1V298.9h-1V299.3h-1V299h-1V298.8h-1V299.2h-1V299.3h-1V299.6h-1V299.2h-1V299.4h-1V299.5h-1V299.6h-1V299.3h-1V299.6h-1V298.8h-1V299.5h-1V299.2h-1V299h-1V298.9h-1V299.3h-1V300.9h-1V299.1h-1V299.2h-1V299.1h-1V299.5h-1V299h-1V298.8h-1V298.8h-1V299.7h-1V299.6h-1V299.2h-1V298.9h-1V299.5h-1V299h-1V299h-1V299.4h-1V299.1h-1V298.9h-1V298.8h-1V299.3h-1V299.2h-1V299.4h-1V299.6h-1V299.3h-1V299.5h-1V299.1h-1V299.2h-1V299h-1V299h-1V301h-1V299.1h-1V299.3h-1V299.1h-1V299h-1V299.4h-1Z" fill="#f2e51c" shape-rendering="crispEdges"/>
<path d="M249.5 297.8 L250.4 297.8 L250.4 466.6 L250.7 467.8 L251.7 466.4 L252.7 467.4 L253.7 466.3 L254.7 466.5 L255.7 467 L256.7 466.7 L257.7 468 L258.7 466.2 L259.4 466.6 L259.3 466.6 L259.8 414.7 L260.2 378.5 L260.6 353.4 L261.1 335.9 L261.6 323.7 L262 315.2 L262.4 309.3 L262.9 305.2 L263.4 302.3 L263.8 300.4 L264.2 299 L264.7 298 L265 297 L265.8 297.7 L266.6 297.1 L267.4 297.4 L268.2 296.7 L268.3 296.8 L268.3 297.8 L268.3 467.2 L268.6 467.6 L269.6 467 L270.6 466.9 L271.6 467.2 L272.6 467.5 L273.6 466.9 L274.6 467.5 L275.6 466.5 L276.6 467.8 L277.4 467.2 L277.3 466.6 L277.8 414.7 L278.2 378.5 L278.6 353.4 L279.1 335.9 L279.6 323.7 L280 315.2 L280.4 309.3 L280.9 305.2 L281.4 302.3 L281.8 300.4 L282.2 299 L282.7 298 L283 297.8 L283.8 297.5 L284.6 296.9 L285.4 296.5 L286.2 297.7 L286.3 297.3 L286.3 297.8 L286.3 467.2 L286.6 466.8 L287.6 467.2 L288.6 467.4 L289.6 466.4 L290.6 467.6 L291.6 467 L292.6 466.1 L293.6 466.3 L294.6 467.9 L295.4 466.6 L295.3 466.6 L295.8 414.7 L296.2 378.5 L296.6 353.4 L297.1 335.9 L297.6 323.7 L298 315.2 L298.4 309.3 L298.9 305.2 L299.4 302.3 L299.8 300.4 L300.2 299 L300.7 298 L301 297.3 L301.8 297.6 L302.6 297.5 L303.4 297.2 L304.2 298 L304.3 297.4 L304.3 297.8 L304.3 467.2 L304.6 467.5 L305.6 468 L306.6 466.1 L307.6 466.1 L308.6 466.8 L309.6 466.7 L310.6 466.4 L311.6 467.9 L312.6 466.4 L313.4 466.9 L313.3 466.6 L313.8 414.7 L314.2 378.5 L314.6 353.4 L315.1 335.9 L315.6 323.7 L316 315.2 L316.4 309.3 L316.9 305.2 L317.4 302.3 L317.8 300.4 L318.2 299 L318.7 298 L319 296.7 L319.8 297.7 L320.6 297.4 L321.4 297.3 L322.2 298 L322.3 297.3 L322.3 297.8 L322.3 467.2 L322.6 467.6 L323.6 466.6 L324.6 466.3 L325.6 466.7 L326.6 466.5 L327.6 466.5 L328.6 468.1 L329.6 466.6 L330.6 466.6 L331.4 466.9 L331.3 466.6 L331.8 414.7 L332.2 378.5 L332.6 353.4 L333.1 335.9 L333.6 323.7 L334 315.2 L334.4 309.3 L334.9 305.2 L335.4 302.3 L335.8 300.4 L336.2 299 L336.7 298 L337 297.4 L337.8 297 L338.6 297.8 L339.4 297.8 L340.2 297.7 L340.3 297.5 L340.3 297.8 L340.3 467.2 L340.6 469.6 L341.6 467.3 L342.6 466.2 L343.6 466.5 L344.6 466.7 L345.6 467.8 L346.6 466.3 L347.6 467.2 L348.6 467.3 L349.4 467.3 L349.3 466.6 L349.8 414.7 L350.2 378.5 L350.6 353.4 L351.1 335.9 L351.6 323.7 L352 315.2 L352.4 309.3 L352.9 305.2 L353.4 302.3 L353.8 300.4 L354.2 299 L354.7 298 L355 297.8 L355.8 297.5 L356.6 297.6 L357.4 297.9 L358.2 296.8 L358.3 296.9 L358.3 297.8 L358.3 467.2 L358.6 466.1 L359.6 466.3 L360.6 467 L361.6 470.5 L362.6 466.9 L363.6 467.3 L364.6 466.7 L365.6 467.9 L366.6 467.3 L367.4 466.5 L367.3 466.6 L367.8 414.7 L368.2 378.5 L368.6 353.4 L369.1 335.9 L369.6 323.7 L370 315.2 L370.4 309.3 L370.9 305.2 L371.4 302.3 L371.8 300.4 L372.2 299 L372.7 298 L373 297.4 L373.8 298 L374.6 298.1 L375.4 297.2 L376.2 296.4 L376.3 297.3 L376.3 297.8 L376.3 467.2 L376.6 467.7 L377.6 466.9 L378.6 467.5 L379.6 466.9 L380.6 467.1 L381.6 466.6 L382.6 466.8 L383.6 466.5 L384.6 467.9 L385.4 467.3 L385.3 466.6 L385.8 414.7 L386.2 378.5 L386.6 353.4 L387.1 335.9 L387.6 323.7 L388 315.2 L388.4 309.3 L388.9 305.2 L389.4 302.3 L389.8 300.4 L390.2 299 L390.7 298 L391 296.9 L391.8 296.8 L392.6 297.4 L393.4 296.4 L394.2 297.9 L394.3 296.8 L394.3 297.8 L394.3 467.2 L394.6 466 L395.6 467.8 L396.6 467.3 L397.6 467.8 L398.6 467.2 L399.6 467.4 L400.6 467.4 L401.6 467.3 L402.6 467.5 L403.4 466.7 L403.3 466.6 L403.8 414.7 L404.2 378.5 L404.6 353.4 L405.1 335.9 L405.6 323.7 L406 315.2 L406.4 309.3 L406.9 305.2 L407.4 302.3 L407.8 300.4 L408.2 299 L408.7 298 L409 296.4 L409.8 297.9 L410.6 297 L411.4 297.7 L412.2 296.8 L412.3 297.1 L412.3 297.8 L412.3 467.2 L412.6 466.9 L413.6 467.9 L414.6 464.1 L415.6 467.6 L416.6 467.8 L417.6 466 L418.6 467.2 L419.6 468 L420.6 466.8 L421.6 467.3 L422.6 462.3 L423.6 467.4 L424.6 467.9 L425.6 467.7 L426.6 466 L427.4 466.7 L427.3 466.6 L427.8 414.7 L428.2 378.5 L428.6 353.4 L429.1 335.9 L429.6 323.7 L430 315.2 L430.4 309.3 L430.9 305.2 L431.4 302.3 L431.8 300.4 L432.2 299 L432.7 298 L433 297.6 L433.8 296.4 L434.6 297.6 L435.4 297.6 L436.2 297.4 L436.3 297.2 L436.3 297.8 L436.3 467.2 L436.6 466.5 L437.6 463.6 L438.6 467.3 L439.6 466.2 L440.6 467.5 L441.6 467.7 L442.6 466.1 L443.6 467.1 L444.6 467.4 L445.4 467.3 L445.3 466.6 L445.8 414.7 L446.2 378.5 L446.6 353.4 L447.1 335.9 L447.6 323.7 L448 315.2 L448.4 309.3 L448.9 305.2 L449.4 302.3 L449.8 300.4 L450.2 299 L450.7 298 L451 297 L451.8 297.4 L452.6 297 L453.4 298 L454.2 297.3 L454.3 296.8 L454.3 297.8 L454.3 467.2 L454.6 467.4 L455.6 466.7 L456.6 468 L457.6 467.2 L458.6 466.9 L459.6 466.8 L460.6 467.2 L461.6 467.6 L462.6 466 L463.4 466.9 L463.3 466.6 L463.8 414.7 L464.2 378.5 L464.6 353.4 L465.1 335.9 L465.6 323.7 L466 315.2 L466.4 309.3 L466.9 305.2 L467.4 302.3 L467.8 300.4 L468.2 299 L468.7 298 L469 297.4 L469.8 297.9 L470.6 297.8 L471.4 297.9 L472.2 296.8 L472.3 297.5 L472.3 297.8 L472.3 467.2 L472.6 467.8 L473.6 466.2 L474.6 467.6 L475.6 467.5 L476.6 466.5 L477.6 467.4 L478.6 466.4 L479.6 467.5 L480.6 466.9 L481.4 467.3 L481.3 466.6 L481.8 414.7 L482.2 378.5 L482.6 353.4 L483.1 335.9 L483.6 323.7 L484 315.2 L484.4 309.3 L484.9 305.2 L485.4 302.3 L485.8 300.4 L486.2 299 L486.7 298 L487 297.7 L487.8 297.3 L488.6 297.9 L489.4 297.2 L490.2 296.6 L490.3 296.9 L490.3 297.8 L490.3 467.2 L490.6 466.7 L491.6 466.8 L492.6 470.3 L493.6 466.7 L494.6 467.3 L495.6 466.3 L496.6 466.7 L497.6 470 L498.6 467.7 L499.4 467.1 L499.3 466.6 L499.8 414.7 L500.2 378.5 L500.6 353.4 L501.1 335.9 L501.6 323.7 L502 315.2 L502.4 309.3 L502.9 305.2 L503.4 302.3 L503.8 300.4 L504.2 299 L504.7 298 L505 296.8 L505.8 297.1 L506.6 297.7 L507.4 298 L508.2 296.4 L508.3 296.9 L508.3 297.8 L508.3 469.6 L508.6 466.1 L509.6 467.7 L510.6 467.9 L511.6 466.1 L512.6 466.8 L513.6 467.9 L514.6 467.1 L515.6 467.9 L516.6 466.8 L517.4 466.7 L517.3 466.6 L517.8 414.7 L518.2 378.5 L518.6 353.4 L519.1 335.9 L519.5 323.7 L520 315.2 L520.4 309.3 L520.9 305.2 L521.3 302.3 L521.8 300.4 L522.2 299 L522.7 298 L523 298 L523.8 296.7 L524.6 296.8 L525.4 297.9 L526.2 297.8 L526.3 297.5 L526.3 297.8 L526.3 467.2 L526.6 467.3 L527.6 466.1 L528.6 467.5 L529.6 467.4 L530.6 467.2 L531.6 466.2 L532.6 466.5 L533.6 467 L534.6 466.5 L535.4 467.2 L535.3 466.6 L535.8 414.7 L536.2 378.5 L536.6 353.4 L537.1 335.9 L537.5 323.7 L538 315.2 L538.4 309.3 L538.9 305.2 L539.3 302.3 L539.8 300.4 L540.2 299 L540.7 298 L541 296.3 L541.8 296.7 L542.6 298 L543.4 298 L544.2 297.9 L544.3 297.2 L544.3 297.8 L544.3 469.6 L544.6 467.9 L545.6 467.3 L546.6 466.7 L547.6 467 L548.6 466.3 L549.6 466.1 L550.6 467.1 L551.6 467.7 L552.6 466.8 L553.4 466.8 L553.3 466.6 L553.8 414.7 L554.2 378.5 L554.6 353.4 L555.1 335.9 L555.5 323.7 L556 315.2 L556.4 309.3 L556.9 305.2 L557.3 302.3 L557.8 300.4 L558.2 299 L558.7 298 L559 297.8 L559.8 296.6 L560.6 296.9 L561.4 296.5 L562.2 296.4 L562.3 297.4 L562.3 297.8 L562.3 467.2 L562.6 467 L563.6 466.5 L564.6 466.7 L565.6 468 L566.6 466.2 L567.6 467.8 L568.6 467.5 L569.6 470.4 L570.6 466.7 L571.4 466.5 L571.3 466.6 L571.8 414.7 L572.2 378.5 L572.6 353.4 L573.1 335.9 L573.5 323.7 L574 315.2 L574.4 309.3 L574.9 305.2 L575.3 302.3 L575.8 300.4 L576.2 299 L576.7 298 L577 297.8 L577.8 296.6 L578.6 297.9 L579.4 297.3 L580.2 296.6 L580.3 297.4 L580.3 297.8 L580.3 467.2 L580.6 466.2 L581.6 467.2 L582.6 466.5 L583.6 467.2 L584.6 467.6 L585.6 466.4 L586.6 467.5 L587.6 467.4 L588.6 467.6 L589.6 467.7 L590.6 470.3 L591.6 467 L592.6 466.5 L593.6 467.7 L594.6 466.3 L595.4 467.1 L595.3 466.6 L595.8 414.7 L596.2 378.5 L596.6 353.4 L597.1 335.9 L597.5 323.7 L598 315.2 L598.4 309.3 L598.9 305.2 L599.3 302.3 L599.8 300.4 L600.2 299 L600.7 298 L601 296.3 L601.8 297.1 L602.6 296.5 L603.4 297.8 L604.2 296.9 L604.3 297.1 L604.3 297.8 L604.3 467.2 L604.6 466.1 L605.6 467.9 L606.6 467 L607.6 470.8 L608.6 466.4 L609.6 466.2 L610.6 464.4 L611.6 467.4 L612.6 466 L613.4 467.1 L613.3 466.6 L613.8 414.7 L614.2 378.5 L614.6 353.4 L615.1 335.9 L615.5 323.7 L616 315.2 L616.4 309.3 L616.9 305.2 L617.3 302.3 L617.8 300.4 L618.2 299 L618.7 298 L619 297.2 L619.8 296.5 L620.6 297.6 L621.4 296.5 L622.2 297.2 L622.3 296.9 L622.3 297.8 L622.3 467.2 L622.6 466.3 L623.6 467.7 L624.6 467.1 L625.6 466.3 L626.6 467.9 L627.6 466.8 L628.6 467.1 L629.6 467.9 L630.6 466.7 L631.4 466.8 L631.3 466.6 L631.8 414.7 L632.2 378.5 L632.6 353.4 L633.1 335.9 L633.5 323.7 L634 315.2 L634.4 309.3 L634.9 305.2 L635.3 302.3 L635.8 300.4 L636.2 299 L636.7 298 L637 297.1 L637.8 297.7 L638.6 297.8 L639.4 296.4 L640.2 298 L640.3 297 L640.3 297.8 L640.3 467.2 L640.6 467.3 L641.6 467.1 L642.6 466.9 L643.6 466 L644.6 467.9 L645.6 467.9 L646.6 467.6 L647.6 468.9 L648.6 466.5 L649.4 466.8 L649.3 466.6 L649.8 414.7 L650.2 378.5 L650.6 353.4 L651.1 335.9 L651.5 323.7 L652 315.2 L652.4 309.3 L652.9 305.2 L653.3 302.3 L653.8 300.4 L654.2 299 L654.7 298 L655 297.3 L655.8 297.4 L656.6 297.2 L657.4 298 L658.2 296.8 L658.3 296.9 L658.3 297.8 L658.3 467.2 L658.6 467.9 L659.6 466.5 L660.6 467.1 L661.6 466.2 L662.6 466.6 L663.6 466.6 L664.6 466.2 L665.6 467.7 L666.6 467.1 L667.4 466.7 L667.3 466.6 L667.8 414.7 L668.2 378.5 L668.6 353.4 L669.1 335.9 L669.5 323.7 L670 315.2 L670.4 309.3 L670.9 305.2 L671.3 302.3 L671.8 300.4 L672.2 299 L672.7 298 L673 297.6 L673.8 297.3 L674.6 297.1 L675.4 296.7 L676.2 297.2 L676.3 297.3 L676.3 297.8 L676.3 469.6 L676.6 466.7 L677.6 466.5 L678.6 467 L679.6 468 L680.6 467.5 L681.6 466.1 L682.6 466.9 L683.6 466.8 L684.6 467.5 L685.4 466.7 L685.3 466.6 L685.8 414.7 L686.2 378.5 L686.6 353.4 L687.1 335.9 L687.5 323.7 L688 315.2 L688.4 309.3 L688.9 305.2 L689.3 302.3 L689.8 300.4 L690.2 299 L690.7 298 L691 298 L691.8 296.6 L692.6 296.9 L693.4 297.4 L694.2 297.8 L694.3 297.4 L694.3 297.8 L694.3 467.2 L694.6 467.5 L695.6 467.6 L696.6 467.8 L697.6 469.9 L698.6 467.2 L699.6 467.9 L700.6 466.8 L701.6 467.7 L702.6 466.8 L703.4 467 L703.3 466.6 L703.8 414.7 L704.2 378.5 L704.6 353.4 L705.1 335.9 L705.5 323.7 L706 315.2 L706.4 309.3 L706.9 305.2 L707.3 302.3 L707.8 300.4 L708.2 299 L708.7 298 L709 297.6 L709.8 297 L710.6 297 L711.4 297.7 L712.2 297.2 L712.3 296.9 L712.3 297.8 L712.3 467.2 L712.6 466.3 L713.6 467.2 L714.6 467.8 L715.6 467.7 L716.6 467.9 L717.6 466.9 L718.6 466.5 L719.6 467 L720.6 467.5 L721.4 467.5 L721.3 466.6 L721.8 414.7 L722.2 378.5 L722.6 353.4 L723.1 335.9 L723.5 323.7 L724 315.2 L724.4 309.3 L724.9 305.2 L725.3 302.3 L725.8 300.4 L726.2 299 L726.7 298 L727 297.2 L727.8 297.5 L728.6 296.9 L729.4 296.9 L730.2 297.5 L730.3 296.8 L730.3 297.8 L730.3 467.2 L730.6 466.8 L731.6 467.1 L732.6 467.9 L733.6 466.9 L734.6 468 L735.6 467.1 L736.6 466.3 L737.6 468 L738.6 467 L739.4 467.4 L739.3 466.6 L739.8 414.7 L740.2 378.5 L740.6 353.4 L741.1 335.9 L741.5 323.7 L742 315.2 L742.4 309.3 L742.9 305.2 L743.3 302.3 L743.8 300.4 L744.2 299 L744.7 298 L745 297.5 L745.8 298.1 L746.6 297.1 L747.4 296.8 L748.2 297.2 L748.3 296.9 L748.3 297.8 L748.3 467.2 L748.6 467.2 L749.6 468 L750.6 466.1 L751.6 467.6 L752.6 465.8 L753.6 467.7 L754.6 467.3 L755.6 467 L756.6 466.5 L757.6 467.1 L758.6 467.1 L759.6 466.2 L760.6 467.5 L761.6 466.2 L762.6 467 L763.4 467.1 L763.3 466.6 L763.8 414.7 L764.2 378.5 L764.6 353.4 L765.1 335.9 L765.5 323.7 L766 315.2 L766.4 309.3 L766.9 305.2 L767.3 302.3 L767.8 300.4 L768.2 299 L768.7 298 L769 297.8 L769.8 296.3 L770.6 296.9 L771.4 296.9 L772.2 296.8 L772.3 297.6 L772.3 297.8 L772.3 467.2 L772.6 466.7 L773.6 466.8 L774.6 467.8 L775.6 467.9 L776.6 467.2 L777.6 466.1 L778.6 467.7 L779.6 467.8 L780.6 466.6 L781.4 467.5 L781.3 466.6 L781.8 414.7 L782.2 378.5 L782.6 353.4 L783.1 335.9 L783.5 323.7 L784 315.2 L784.4 309.3 L784.9 305.2 L785.3 302.3 L785.8 300.4 L786.2 299 L786.7 298 L787 297.2 L787.8 296.7 L788.6 297.6 L789.4 296.9 L790.2 297.2 L790.3 297 L790.3 297.8 L790.3 467.2 L790.6 466.7 L791.6 467.9 L792.6 467.1 L793.6 467.1 L794.6 466.8 L795.6 466.2 L796.6 466.7 L797.6 466.4 L798.6 467.8 L799.4 466.8 L799.3 466.6 L799.8 414.7 L800.2 378.5 L800.6 353.4 L801.1 335.9 L801.5 323.7 L802 315.2 L802.4 309.3 L802.9 305.2 L803.3 302.3 L803.8 300.4 L804.2 299 L804.7 298 L805 296.6 L805.8 296.5 L806.6 297.8 L807.4 297.1 L808.2 297.7 L808.3 297.1 L808.3 297.8 L808.3 467.2 L808.6 466.8 L809.6 466.4 L810.6 467 L811.6 466.9 L812.6 467.4 L813.6 467.8 L814.6 466.7 L815.6 467.2 L816.6 467.7 L817.4 467 L817.3 466.6 L817.8 414.7 L818.2 378.5 L818.6 353.4 L819.1 335.9 L819.5 323.7 L820 315.2 L820.4 309.3 L820.9 305.2 L821.3 302.3 L821.8 300.4 L822.2 299 L822.7 298 L823 297.3 L823.8 297.7 L824.6 297.5 L825.4 296.9 L826.2 296.5 L826.3 297.5 L826.3 297.8 L826.3 467.2 L826.6 467.3 L827.6 467.1 L828.6 467 L829.6 466.1 L830.6 466.5 L831.6 467.4 L832.6 466.8 L833.6 467.5 L834.6 467.7 L835.4 466.8 L835.3 466.6 L835.8 414.7 L836.2 378.5 L836.6 353.4 L837.1 335.9 L837.5 323.7 L838 315.2 L838.4 309.3 L838.9 305.2 L839.3 302.3 L839.8 300.4 L840.2 299 L840.7 298 L841 296.4 L841.8 297.5 L842.6 297 L843.4 297.6 L844.2 297.8 L844.3 297.3 L844.3 297.8 L844.3 467.2 L844.6 466.2 L845.6 467.5 L846.6 463.4 L847.6 466.4 L848.6 465.2 L849.6 467.3 L850.6 467.7 L851.6 467.4 L852.6 466.9 L853.4 466.8 L853.3 466.6 L853.8 414.7 L854.2 378.5 L854.6 353.4 L855.1 335.9 L855.5 323.7 L856 315.2 L856.4 309.3 L856.9 305.2 L857.3 302.3 L857.8 300.4 L858.2 299 L858.7 298 L859 296.3 L859.8 297.7 L860.6 296.4 L861.4 297.4 L862.2 296.7 L862.3 297.5 L862.3 297.8 L862.3 467.2 L862.6 467.8 L863.6 466.2 L864.6 466.8 L865.6 467.7 L866.6 466.2 L867.6 466.8 L868.6 467.4 L869.6 467.7 L870.6 466.9 L871.4 467.2 L871.3 466.6 L871.8 414.7 L872.2 378.5 L872.6 353.4 L873.1 335.9 L873.5 323.7 L874 315.2 L874.4 309.3 L874.9 305.2 L875.3 302.3 L875.8 300.4 L876.2 299 L876.7 298 L877 297.1 L877.8 298 L878.6 297.7 L879.4 297.6 L880.2 296.8 L880.3 297.6 L880.3 297.8 L880.3 467.2 L880.6 467.1 L881.6 466.1 L882.6 466.8 L883.6 466.6 L884.6 467.4 L885.6 466.5 L886.6 467 L887.6 467.9 L888.6 466.6 L889.4 466.6 L889.3 466.6 L889.8 414.7 L890.2 378.5 L890.6 353.4 L891.1 335.9 L891.5 323.7 L892 315.2 L892.4 309.3 L892.9 305.2 L893.3 302.3 L893.8 300.4 L894.2 299 L894.7 298 L895 297.3 L895.8 297.8 L896.6 297.7 L897.4 297.5 L898.2 297.1 L898.3 297.5 L898.3 297.8 L898.3 469.6 L898.6 466.6 L899.6 466.4 L900.6 466.6 L901.6 467.4 L902.6 466.2 L903.6 466.9 L904.6 466.3 L905.6 466 L906.6 467.5 L907.4 467.2 L907.3 466.6 L907.8 414.7 L908.2 378.5 L908.6 353.4 L909.1 335.9 L909.5 323.7 L910 315.2 L910.4 309.3 L910.9 305.2 L911.3 302.3 L911.8 300.4 L912.2 299 L912.7 298 L913 298.1 L913.8 296.5 L914.6 297.1 L915.4 297.3 L916.2 298 L916.3 297.3 L916.3 297.8 L916.3 467.2 L916.6 467.3 L917.6 466.5 L918.6 466.1 L919.6 467.7 L920.6 466.4 L921.6 467.7 L922.6 466.3 L923.6 467.7 L924.6 466.7 L925.6 467.7 L926.6 466.7 L927.6 466.7 L928.6 467 L929.6 467.3 L930.6 467.4 L931.4 467.4 L931.3 466.6 L931.8 414.7 L932.2 378.5 L932.6 353.4 L933.1 335.9 L933.5 323.7 L934 315.2 L934.4 309.3 L934.9 305.2 L935.3 302.3 L935.8 300.4 L936.2 299 L936.7 298 L937 297.2 L937.8 296.6 L938.6 297.3 L939.4 297.5 L940.2 297.1 L940.3 296.8 L940.3 297.8 L940.3 469.6 L940.6 466.9 L941.6 470.2 L942.6 467.7 L943.6 466.9 L944.6 467.3 L945.6 466.8 L946.6 466.9 L947.6 467.7 L948.6 466.3 L949.4 466.9 L949.3 466.6 L949.8 414.7 L950.2 378.5 L950.6 353.4 L951.1 335.9 L951.5 323.7 L952 315.2 L952.4 309.3 L952.9 305.2 L953.3 302.3 L953.8 300.4 L954.2 299 L954.7 298 L955 297.3 L955.8 296.7 L956.6 296.9 L957.4 298 L958.2 297.9 L958.3 297.6 L958.3 297.8 L958.3 467.2 L958.6 467.6 L959.6 467.4 L960.6 466.6 L961.6 467.9 L962.6 467.3 L963.6 466.7 L964.6 466.1 L965.6 467.4 L966.6 466.2 L967.4 466.9 L967.3 466.6 L967.8 414.7 L968.2 378.5 L968.6 353.4 L969.1 335.9 L969.5 323.7 L970 315.2 L970.4 309.3 L970.9 305.2 L971.3 302.3 L971.8 300.4 L972.2 299 L972.7 298 L973 297.3 L973.8 297.3 L974.6 297 L975.4 296.6 L976.2 297.3 L976.3 297.5 L976.3 297.8 L976.3 467.2 L976.6 466.2 L977.6 466.5 L978.6 467.1 L979.6 467.1 L980.6 467 L981.6 466.2 L982.6 466.1 L983.6 467.7 L984.6 467.4 L985.4 466.6 L985.3 466.6 L985.8 414.7 L986.2 378.5 L986.6 353.4 L987.1 335.9 L987.5 323.7 L988 315.2 L988.4 309.3 L988.9 305.2 L989.3 302.3 L989.8 300.4 L990.2 299 L990.7 298 L991 298.1 L991.8 296.5 L992.6 297 L993.4 298 L994.2 297.7 L994.3 297.4 L994.3 297.8 L994.3 469.6 L994.6 466.5 L995.6 466 L996.6 466.4 L997.6 467.4 L998.6 467.8 L999.6 467.7 L1000.6 467.8 L1001.6 466.3 L1002.6 466.7 L1003.4 467.2 L1003.3 466.6 L1003.8 414.7 L1004.2 378.5 L1004.6 353.4 L1005.1 335.9 L1005.5 323.7 L1006 315.2 L1006.4 309.3 L1006.9 305.2 L1007.3 302.3 L1007.8 300.4 L1008.2 299 L1008.7 298 L1009 297.8 L1009.8 297 L1010.6 298 L1011.4 296.4 L1012.2 296.5 L1012.3 297.5 L1012.3 297.8 L1012.3 469.6 L1012.6 467.9 L1013.6 466.5 L1014.6 466.9 L1015.6 467.2 L1016.6 466 L1017.6 467.6 L1018.6 467.1 L1019.6 467.4 L1020.6 466.3 L1021.4 467 L1021.3 466.6 L1021.8 414.7 L1022.2 378.5 L1022.6 353.4 L1023.1 335.9 L1023.5 323.7 L1024 315.2 L1024.5 309.3 L1024.9 305.2 L1025.3 302.3 L1025.8 300.4 L1026.2 299 L1026.7 298 L1027 297.5 L1027.8 298 L1028.6 296.9 L1029.4 297.2 L1030.2 297.7 L1030.3 296.9 L1030.3 297.8 L1030.3 467.2 L1030.6 467.4 L1031.6 467 L1032.6 467.7 L1033.6 467.7 L1034.6 466.2 L1035.6 466.4 L1036.6 464.5 L1037.6 466.7 L1038.6 467.2 L1039.4 466.9 L1039.3 466.6 L1039.8 414.7 L1040.2 378.5 L1040.7 353.4 L1041.1 335.9 L1041.5 323.7 L1042 315.2 L1042.5 309.3 L1042.9 305.2 L1043.3 302.3 L1043.8 300.4 L1044.2 299 L1044.7 298 L1045 296.3 L1045.8 296.9 L1046.6 297.1 L1047.4 296.4 L1048.2 297.5 L1048.3 297 L1048.3 297.8 L1048.3 467.2 L1048.6 466.5 L1049.6 467.1 L1050.6 468.5 L1051.6 467.5 L1052.6 467.5 L1053.6 467.3 L1054.6 466.6 L1055.6 467.7 L1056.6 467.4 L1057.4 467.3 L1057.3 466.6 L1057.8 414.7 L1058.2 378.5 L1058.7 353.4 L1059.1 335.9 L1059.5 323.7 L1060 315.2 L1060.5 309.3 L1060.9 305.2 L1061.3 302.3 L1061.8 300.4 L1062.2 299 L1062.7 298 L1063 297.6 L1063.8 297.4 L1064.6 297.3 L1065.4 296.4 L1066.2 296.9 L1066.3 297.2 L1066.3 297.8 L1066.3 467.2 L1066.6 466.5 L1067.6 466.7 L1068.6 466 L1069.6 466.9 L1070.6 467.1 L1071.6 466.3 L1072.6 466.6 L1073.6 467.5 L1074.6 467.9 L1075.4 467.4 L1075.3 466.6 L1075.8 414.7 L1076.2 378.5 L1076.7 353.4 L1077.1 335.9 L1077.5 323.7 L1078 315.2 L1078.5 309.3 L1078.9 305.2 L1079.3 302.3 L1079.8 300.4 L1080.2 299 L1080.7 298 L1081 297.4 L1081.8 296.6 L1082.6 298.1 L1083.4 297.7 L1084.2 297.9 L1084.3 297.2 L1084.3 297.8 L1084.3 467.2 L1084.6 466.6 L1085.6 466.1 L1086.6 466.6 L1087.6 466.5 L1088.6 466.5 L1089.6 467.7 L1090.6 466.5 L1091.6 467.8 L1092.6 466.2 L1093.6 467.7 L1094.6 466.3 L1095.6 467.1 L1096.6 467.3 L1097.6 466.7 L1097.6 466.6 L1098 417.7 L1098.4 382.7 L1098.8 357.6 L1099.3 339.7 L1099.7 326.8 L1100.1 317.6 L1100.5 311 L1100.9 306.2 L1101.3 302.8 L1101.8 300.4 L1102.2 298.6 L1102.6 297.4 L1103 297.4" fill="none" stroke="#f2e51c" stroke-width="1.25" stroke-linejoin="round" shape-rendering="crispEdges"/>
<path d="M3 537.5V537.5h1V537.8h1V537.8h1V537.3h1V537.2h1V537.5h1V537.7h1V536.1h1V537.7h1V537.3h1V537.9h1V537.3h1V537.9h1V537.6h1V537.7h1V537.8h1V537.5h1V537.4h1V537.9h1V537.5h1V538.1h1V537.5h1V538h1V537.6h1V537.9h1V538.1h1V537.9h1V536.5h1V537.7h1V538h1V537.3h1V537.9h1V536.1h1V537.4h1V537.6h1V537.5h1V537.6h1V538h1V537.3h1V537.6h1V537.3h1V537.6h1V538.1h1V537.4h1V537.4h1V537.4h1V537.9h1V537.5h1V537.4h1V537.3h1V538h1V537.9h1V537.5h1V537.6h1V537.3h1V537.7h1V537.7h1V537.4h1V537.5h1V538h1V538h1V537.3h1V536.6h1V537.3h1V537.3h1V537.8h1V538h1V538h1V537.2h1V537.9h1V537.2h1V537.4h1V535.7h1V537.5h1V537.3h1V537.3h1V537.4h1V537.3h1V537.7h1V537.6h1V537.5h1V538.1h1V537.9h1V537.4h1V536.4h1V537.6h1V536.4h1V537.8h1V537.7h1V538.1h1V537.8h1V537.5h1V538.1h1V537.5h1V537.3h1V537.2h1V538h1V537.7h1V537.4h1V537.3h1V537.9h1V537.2h1V537.5h1V537.7h1V536.9h1V538h1V537.7h1V537.4h1V537.9h1V537.8h1V537.7h1V537.8h1V537.8h1V537.4h1V537.4h1V537.6h1V537.7h1V537.4h1V537.7h1V537.7h1V537.4h1V537.9h1V537.8h1V538h1V537.2h1V537.9h1V537.3h1V537.3h1V537.9h1V537.6h1V538.1h1V537.6h1V537.9h1V537.3h1V537.5h1V537.4h1V537.5h1V537.2h1V537.4h1V537.8h1V537.5h1V538h1V538h1V537.6h1V537.8h1V537.2h1V537.5h1V537.5h1V537.8h1V537.5h1V537.7h1V537.4h1V537.8h1V537.8h1V537.3h1V537.5h1V537.6h1V536.9h1V537.6h1V538h1V537.6h1V537.6h1V537.7h1V537.8h1V536.5h1V537.7h1V537.9h1V537.3h1V537.3h1V536.6h1V537.8h1V537.2h1V537.6h1V538.1h1V538h1V536.1h1V537.4h1V537.5h1V538h1V537.7h1V537.2h1V538h1V538h1V536.5h1V537.5h1V537.6h1V537.5h1V537.4h1V537.2h1V537.7h1V537.7h1V537.4h1V537.5h1V537.9h1V537.6h1V537.6h1V537.3h1V536.4h1V537.3h1V537.4h1V537.7h1V537.6h1V537.8h1V537.4h1V537.3h1V537.4h1V537.9h1V537.6h1V537.4h1V537.8h1V536.5h1V537.5h1V537.7h1V537.7h1V537.5h1V537.3h1V538.1h1V537.2h1V537.8h1V537.7h1V537.9h1V537.8h1V537.3h1V538.1h1V537.7h1V537.5h1V537.6h1V537.3h1V538h1V537.7h1V537.4h1V538h1V537.1h1V538.1h1V538h1V537.2h1V537.6h1V537.9h1V537.9h1V540.6V540.6h-1V540.6h-1V540.3h-1V539.9h-1V540.7h-1V540.8h-1V540.7h-1V540.7h-1V540.1h-1V540.6h-1V540.7h-1V540h-1V540.3h-1V540.2h-1V540.4h-1V540.8h-1V540h-1V541.8h-1V540.6h-1V541.1h-1V540.5h-1V539.9h-1V540.8h-1V540h-1V540.2h-1V541.9h-1V540.4h-1V540.2h-1V540.5h-1V540.6h-1V540.1h-1V540.3h-1V540.6h-1V540.2h-1V540h-1V540.1h-1V540.5h-1V540.3h-1V540.4h-1V540.1h-1V540h-1V540.5h-1V540h-1V540.3h-1V540.3h-1V540.6h-1V540.2h-1V540.1h-1V540.4h-1V540.4h-1V540.4h-1V540.1h-1V540.2h-1V540.3h-1V540.2h-1V540.1h-1V540.7h-1V540.7h-1V539.9h-1V540.4h-1V540.7h-1V540.2h-1V540.1h-1V540.4h-1V541.2h-1V540.8h-1V540.3h-1V539.9h-1V540.5h-1V540.4h-1V541.2h-1V540h-1V540.9h-1V540.4h-1V540.3h-1V540.5h-1V540.4h-1V540.3h-1V540.3h-1V540.7h-1V540.3h-1V540.6h-1V540.3h-1V540.2h-1V540h-1V540.5h-1V540.5h-1V540.1h-1V540.4h-1V540.2h-1V540.5h-1V540.2h-1V540.2h-1V539.9h-1V540.5h-1V540.3h-1V540.7h-1V541.7h-1V540.2h-1V540.5h-1V540.4h-1V539.9h-1V540.2h-1V540.1h-1V540.2h-1V540h-1V540.6h-1V540.3h-1V540.8h-1V540.9h-1V540.6h-1V540h-1V540.4h-1V540.6h-1V539.9h-1V540.7h-1V540.5h-1V540.6h-1V540.1h-1V540.4h-1V540.4h-1V541.6h-1V540.4h-1V540.3h-1V540.1h-1V540.1h-1V540.5h-1V540.5h-1V540.4h-1V540.5h-1V540.6h-1V540.1h-1V540.4h-1V540.7h-1V540.8h-1V540.4h-1V540.2h-1V539.9h-1V540.6h-1V540h-1V540.1h-1V540.4h-1V540.7h-1V539.9h-1V540h-1V540.2h-1V540.8h-1V540.2h-1V540.5h-1V540.8h-1V540.4h-1V540.5h-1V540.2h-1V540.3h-1V540h-1V540.1h-1V540.6h-1V540.8h-1V540.2h-1V540.3h-1V540.9h-1V540h-1V540.1h-1V540h-1V540h-1V540.2h-1V540h-1V540.1h-1V539.9h-1V540.6h-1V539.9h-1V540.7h-1V540.7h-1V541.1h-1V540h-1V540h-1V540.8h-1V540.2h-1V540.7h-1V540.7h-1V540.2h-1V540.1h-1V540.4h-1V540.4h-1V540h-1V540.3h-1V540.2h-1V540.6h-1V540.7h-1V540h-1V540.1h-1V540.2h-1V540.6h-1V540.1h-1V540.1h-1V540.1h-1V540.8h-1V540.3h-1V540h-1V540.3h-1V540h-1V541.9h-1V540.3h-1V540.2h-1V540.3h-1V540.1h-1V540h-1V540.6h-1V540h-1V540.7h-1V540.4h-1V540h-1V540.6h-1V540.8h-1V540.6h-1V540.3h-1V540.8h-1V540.2h-1V540.8h-1V540.2h-1V540.6h-1V540.1h-1V540.2h-1V540.5h-1V540.4h-1V540.3h-1V541.9h-1V540.2h-1V540.6h-1V540h-1V540.4h-1V540.3h-1V540.4h-1V540.2h-1V539.9h-1V540h-1V540.5h-1V540.5h-1V540.2h-1Z" fill="#33c5cf" shape-rendering="crispEdges"/>
<path d="M1114 536.7V536.7h1V536.7h1V537.3h1V536.2h1V536.7h1V536.7h1V536.9h1V537.2h1V536.8h1V536.9h1V537.4h1V536.7h1V536.7h1V537.1h1V536.7h1V537.1h1V536.8h1V536.8h1V537.4h1V535.9h1V537h1V537.1h1V536.8h1V536.7h1V536.6h1V537.1h1V537.4h1V536.8h1V537.3h1V536.7h1V537.1h1V536.6h1V537.2h1V536.9h1V537h1V536.6h1V537h1V536.7h1V537.3h1V536.7h1V536.7h1V536.8h1V537.5h1V537.3h1V537h1V537.4h1V537.2h1V537.2h1V537.3h1V536.9h1V537.5h1V537.3h1V537.4h1V537.3h1V537.3h1V537h1V537.3h1V536.9h1V537.1h1V536.7h1V537.3h1V537.4h1V536.8h1V536.8h1V537.4h1V537.2h1V537.3h1V537.2h1V537.3h1V536.7h1V537.4h1V537.1h1V536.5h1V536.6h1V537h1V537h1V536.8h1V537.4h1V536.9h1V537.2h1V537.2h1V536.7h1V536.6h1V536.8h1V537.5h1V536.8h1V537.1h1V537h1V537.5h1V537.5h1V537.3h1V536.8h1V537.5h1V537.3h1V536.9h1V537.4h1V536.9h1V537.4h1V536.7h1V537h1V536.9h1V537.2h1V537.1h1V537.4h1V536.9h1V536.7h1V537.2h1V537h1V537.4h1V536.8h1V536.7h1V537.4h1V536.5h1V537.3h1V536.9h1V536.9h1V537h1V537.2h1V537.2h1V537.5h1V537.2h1V536.7h1V537.3h1V536.9h1V537.4h1V537.3h1V536.4h1V536.9h1V537.5h1V536.9h1V536.8h1V537h1V537h1V537.5h1V536.8h1V537h1V537.2h1V536.9h1V537h1V537.2h1V536.8h1V537.4h1V536.9h1V536.8h1V536.6h1V537.1h1V537.4h1V535.9h1V537.3h1V537h1V536.7h1V537.2h1V537.2h1V537.3h1V537.4h1V536.9h1V537.3h1V536.8h1V537.1h1V537.2h1V536.7h1V536.7h1V537.1h1V537.2h1V537h1V536.8h1V537.3h1V536.7h1V537.3h1V537.4h1V537.3h1V537.2h1V536.7h1V537.2h1V535.9h1V537.3h1V536.8h1V536.7h1V537.5h1V536.9h1V536.7h1V535.9h1V536.7h1V536.7h1V537.1h1V536.6h1V536.7h1V537.2h1V536.9h1V536.8h1V536.8h1V537.3h1V536.6h1V536.6h1V536h1V537.3h1V537h1V537.1h1V537.4h1V537.3h1V536.9h1V536.7h1V536.7h1V537.2h1V537h1V536.8h1V536.9h1V537.3h1V537h1V537.2h1V536.8h1V537.2h1V537.3h1V537.4h1V536.9h1V536.6h1V537.2h1V536.8h1V536.7h1V537.5h1V536.6h1V536.9h1V537.3h1V536.7h1V537.3h1V537.5h1V537.3h1V537.3h1V537.1h1V536.8h1V536.6h1V537.2h1V537.5h1V537.3h1V537.3h1V536.4h1V537.1h1V536.6h1V537.3h1V536.6h1V536.6h1V537.2h1V537h1V536.8h1V537.4h1V536.7h1V536.7h1V537h1V537.2h1V535.8h1V536.6h1V537h1V537.2h1V537.2h1V537h1V536.8h1V537.5h1V537h1V537.3h1V537.1h1V537.5h1V536.2h1V537.4h1V537.2h1V537.2h1V536.8h1V537.3h1V537.2h1V537.3h1V537.1h1V537.4h1V536.6h1V537.1h1V537.1h1V537.1h1V535.8h1V536.9h1V536.6h1V536.6h1V537.3h1V536.7h1V536.8h1V536.7h1V537.1h1V536.7h1V537.4h1V536.7h1V536.9h1V536.7h1V537.5h1V536.4h1V537.2h1V537.1h1V537h1V537.2h1V537.3h1V537.4h1V536.2h1V537.4h1V537.4h1V537.4h1V537.2h1V536.9h1V536.9h1V537.5h1V537.4h1V537.4h1V537.3h1V536.8h1V536.6h1V537.4h1V536.9h1V537.3h1V537.3h1V536.7h1V536.9h1V536.9h1V537.5h1V537.1h1V537.1h1V537h1V537.2h1V536.7h1V536.9h1V536.6h1V537.2h1V536.8h1V537.2h1V537.3h1V536.8h1V536.6h1V539.3V539.3h-1V539.5h-1V540h-1V539.9h-1V539.5h-1V539.9h-1V539.3h-1V539.6h-1V539.4h-1V539.9h-1V539.7h-1V539.8h-1V539.8h-1V540.2h-1V539.6h-1V539.6h-1V539.4h-1V540h-1V540h-1V539.6h-1V540.1h-1V539.3h-1V539.5h-1V540h-1V540.1h-1V540.1h-1V540.2h-1V540.3h-1V539.6h-1V539.9h-1V540.1h-1V540.1h-1V540.1h-1V539.9h-1V540.1h-1V540h-1V539.9h-1V539.7h-1V539.8h-1V539.9h-1V539.3h-1V540.2h-1V539.4h-1V539.6h-1V539.4h-1V540.1h-1V539.4h-1V539.8h-1V539.4h-1V539.5h-1V539.4h-1V540h-1V539.3h-1V539.3h-1V539.6h-1V539.4h-1V539.8h-1V539.8h-1V539.8h-1V539.3h-1V540.1h-1V541h-1V540h-1V539.9h-1V541.5h-1V539.6h-1V539.9h-1V539.9h-1V540.1h-1V539.3h-1V540.2h-1V540h-1V540h-1V539.7h-1V540.2h-1V539.8h-1V541.2h-1V539.9h-1V539.9h-1V539.7h-1V539.3h-1V539.7h-1V539.9h-1V539.7h-1V539.4h-1V539.4h-1V540.1h-1V539.5h-1V539.7h-1V539.9h-1V539.8h-1V539.3h-1V540h-1V539.3h-1V539.8h-1V539.4h-1V540h-1V540h-1V540.2h-1V539.9h-1V539.3h-1V539.5h-1V539.8h-1V540.2h-1V540h-1V540.2h-1V540h-1V539.6h-1V540h-1V539.6h-1V539.3h-1V540.2h-1V539.4h-1V539.5h-1V539.9h-1V539.3h-1V539.9h-1V540.1h-1V540h-1V539.9h-1V539.5h-1V539.9h-1V539.7h-1V540h-1V539.6h-1V539.5h-1V539.7h-1V539.9h-1V539.4h-1V539.4h-1V539.6h-1V540h-1V540.1h-1V539.8h-1V539.7h-1V540h-1V539.7h-1V539.3h-1V539.3h-1V540h-1V539.5h-1V539.5h-1V539.6h-1V539.9h-1V539.4h-1V539.3h-1V539.8h-1V539.4h-1V539.4h-1V539.6h-1V539.4h-1V539.6h-1V540.2h-1V539.4h-1V539.5h-1V540h-1V539.5h-1V539.9h-1V539.4h-1V539.9h-1V540h-1V540.1h-1V540h-1V539.4h-1V540h-1V539.5h-1V539.7h-1V539.9h-1V539.8h-1V539.4h-1V539.4h-1V539.9h-1V539.8h-1V539.5h-1V540h-1V539.6h-1V540.1h-1V540h-1V539.9h-1V539.9h-1V539.4h-1V539.7h-1V540h-1V539.5h-1V540.1h-1V539.8h-1V539.3h-1V539.5h-1V539.6h-1V540.1h-1V539.5h-1V539.9h-1V539.7h-1V540.8h-1V539.9h-1V539.7h-1V539.5h-1V540.2h-1V539.7h-1V540.1h-1V539.5h-1V539.6h-1V540.2h-1V539.6h-1V539.6h-1V540h-1V540.1h-1V540.4h-1V540h-1V539.4h-1V539.9h-1V540.2h-1V539.9h-1V539.9h-1V539.7h-1V539.6h-1V539.6h-1V540h-1V539.8h-1V541h-1V539.4h-1V540h-1V540.1h-1V539.7h-1V539.9h-1V539.4h-1V539.6h-1V540.1h-1V539.8h-1V539.9h-1V539.6h-1V539.7h-1V539.4h-1V540.1h-1V539.6h-1V540.1h-1V540.5h-1V540h-1V540.2h-1V539.8h-1V540h-1V540.2h-1V540.2h-1V539.7h-1V539.8h-1V539.5h-1V540.2h-1V539.5h-1V539.3h-1V539.4h-1V539.9h-1V539.9h-1V540h-1V540.1h-1V539.5h-1V539.7h-1V539.7h-1V540.6h-1V540h-1V539.8h-1V540.1h-1V539.4h-1V540h-1V539.9h-1V540h-1V539.9h-1V540.1h-1V539.5h-1V539.5h-1V540.1h-1V540h-1V539.4h-1V539.8h-1V539.6h-1V540h-1V539.7h-1V540h-1V540h-1V540.1h-1V541.3h-1V540.2h-1V539.6h-1V541.2h-1V539.9h-1V539.9h-1V540.1h-1V539.7h-1V540h-1V540.2h-1V539.5h-1V539.4h-1V539.4h-1V540h-1V539.4h-1V539.7h-1V539.3h-1V539.7h-1V539.6h-1V539.9h-1V539.3h-1V539.8h-1V539.4h-1V540h-1V539.5h-1V541h-1V539.8h-1V539.3h-1V539.4h-1V539.5h-1V539.8h-1V539.7h-1V540.1h-1V540.1h-1V539.9h-1V539.5h-1V539.8h-1V539.4h-1V540.5h-1V539.4h-1V540.8h-1V540.1h-1V539.6h-1V539.5h-1V539.9h-1V539.6h-1V539.4h-1V539.4h-1V539.7h-1V540h-1V539.4h-1V539.4h-1Z" fill="#33c5cf" shape-rendering="crispEdges"/>
<path d="M240.5 538.9 L241.5 538.9 L241.5 693.2 L241.8 693.2 L242.8 694.5 L243.8 693.9 L244.8 693.9 L245.8 693.3 L246.8 692 L247.8 693.1 L248.8 693.7 L249.8 694 L250.8 694.2 L251.8 693 L252.8 693.5 L253.8 693.6 L254.5 693.3 L254.5 693.2 L255 648.6 L255.5 616.6 L256 593.7 L256.5 577.2 L257 565.5 L257.6 557 L258.1 551 L258.6 546.7 L259.1 543.6 L259.6 541.3 L260.1 539.7 L260.6 538.6 L260.3 539.3 L261.2 541.7 L262.1 537.9 L263 539 L263.9 535.5 L264.8 539.2 L265.7 538.7 L266.6 538.7 L267.5 537.7 L268.4 539.4 L269.3 538.7 L270.2 537.8 L271.1 537.4 L272 537.7 L272.5 538.3 L272.5 538.9 L272.5 694.7 L272.8 694.1 L273.8 694.2 L274.8 693.5 L275.8 693 L276.8 694.2 L277.8 693.5 L278.8 693.2 L279.8 693.2 L280.8 693.5 L281.8 693.6 L282.8 692.9 L283.8 694.3 L284.8 692.9 L285.8 693 L286.8 694.1 L287.8 693 L288.8 693.1 L289.8 693.6 L290.5 693.3 L290.5 693.2 L291 648.6 L291.5 616.6 L292 593.7 L292.5 577.2 L293 565.5 L293.6 557 L294.1 551 L294.6 546.7 L295.1 543.6 L295.6 541.3 L296.1 539.7 L296.6 538.6 L296.3 538.1 L297.2 539.3 L298.1 537.5 L299 538.9 L299.9 539.1 L300.8 539.1 L301.7 539.3 L302.6 537.9 L303.5 539.1 L304.4 537.6 L305.3 539.2 L306.2 538.9 L307.1 538.3 L308 537.8 L308.7 538.3 L308.7 538.9 L308.7 694.7 L309 693 L310 693.7 L311 692.8 L312 693.5 L313 694.1 L314 693.2 L315 693.9 L316 693.1 L317 694.5 L318 694.3 L319 694.4 L320 693.2 L321 694.4 L322 692.8 L323 693.1 L324 694.1 L325 694.5 L326 697.2 L327 693.2 L328 693.7 L329 693.7 L330 693.9 L331 694.3 L332 694.6 L333 693.2 L334 693.4 L335 693.4 L336 692.8 L337 693.1 L338 692.8 L339 693.3 L340 693.8 L341 693 L342 693 L343 693.1 L344 693.7 L345 694.4 L346 693.2 L347 693.9 L348 693.5 L349 694 L350 694.5 L351 694.5 L352 692.9 L353 691.5 L354 693.3 L355 694.4 L356 693.8 L357 694.3 L358 693.7 L359 693.2 L360 693.9 L361 694.4 L362 693.1 L363 694.4 L364 693.1 L365 693.3 L366 693.5 L367 694 L368 694.1 L369 693.6 L370 694.1 L371 694 L372 694 L373 694.5 L374 693.2 L375 694.5 L376 693.5 L377 694.4 L378 694.1 L379 694 L380 693.4 L380 693.2 L380.5 648.6 L381 616.6 L381.6 593.7 L382.1 577.2 L382.6 565.5 L383.1 557 L383.6 551 L384.1 546.7 L384.7 543.6 L385.2 541.3 L385.7 539.7 L386.2 538.6 L385.9 537.8 L386.8 535 L387.7 538.2 L388.6 537.6 L389.5 539.3 L390.4 538.1 L391.3 538.3 L392.2 539.8 L393.1 537.7 L394 539.3 L394.5 538.7 L394.5 538.9 L394.5 694.7 L394.8 694 L395.8 694.1 L396.8 693.2 L397.8 693.3 L398.8 694.3 L399.8 694.3 L400.8 693.9 L401.8 692.8 L402.8 694.1 L403.8 690.6 L404.8 692.2 L405.8 693.3 L406.8 691.9 L407.8 694.5 L408.8 693.1 L409.8 693.7 L410.8 693.6 L411.8 693.3 L412.8 693 L413.8 693 L414.8 694.1 L415.8 694.2 L416.8 693.4 L417.8 693.1 L418.8 693.8 L419.8 693.1 L420.8 693.5 L421.8 693.2 L422.8 694.2 L423.8 693.9 L424.8 694.1 L425.8 694.2 L426.8 693 L427.8 693.8 L428.8 693.1 L429.8 693 L430.8 693.2 L431.8 693.6 L432.8 695.7 L433.8 693.2 L434.8 694 L435.8 693.9 L436.8 693.2 L437.8 694 L438.8 693.1 L439.8 694.2 L440.8 694.1 L441.8 694.2 L442.8 693.4 L443.8 692.9 L444.8 693 L445.8 693.7 L446.8 694.5 L447.8 693.6 L448.8 693 L449.8 693.7 L450.8 694.1 L451.8 694.2 L452.8 692.9 L453.8 693.7 L454.8 694 L455.2 693.5 L455.2 693.2 L455.6 648.6 L456.1 616.6 L456.6 593.7 L457 577.2 L457.4 565.5 L457.9 557 L458.4 551 L458.8 546.7 L459.2 543.6 L459.7 541.3 L460.2 539.7 L460.6 538.6 L460.3 538.4 L461.2 538.9 L462.1 538.3 L463 539.3 L463.9 537.6 L464.8 538.7 L465.7 537.5 L466.6 539.2 L467.5 538.3 L468.4 538 L469.3 538.9 L470.2 538.3 L471.1 538.2 L472 537.6 L472.9 538.9 L473.7 538 L473.7 538.9 L473.7 694.7 L474 692.9 L475 693.8 L476 693.1 L477 694.2 L478 693.4 L479 693.2 L480 693 L481 694.1 L482 694.4 L483 694.5 L484 693.3 L485 694.1 L486 693 L487 694.5 L488 694.3 L489 693.2 L490 693.6 L491 693.1 L491.8 693.5 L491.8 693.2 L492.2 648.6 L492.6 616.6 L493.1 593.7 L493.5 577.2 L493.9 565.5 L494.3 557 L494.7 551 L495.1 546.7 L495.6 543.6 L496 541.3 L496.4 539.7 L496.8 538.6 L496.5 537.7 L497.4 538.1 L498.3 538.2 L499.2 539.1 L500.1 537.4 L501 538.6 L501.9 539.3 L502.8 539.1 L503.7 537.9 L504.6 538.1 L505.5 538.2 L506.4 537.9 L507.3 538.2 L508.2 539.2 L509.1 537.9 L510 539 L510.9 538.9 L511.8 539 L512.7 538.7 L513.6 539.1 L514.5 538.5 L515.4 539 L516.3 539.1 L517.2 539.2 L518.1 539.3 L519 538.8 L519.9 537.5 L520.8 538.5 L521.7 538.1 L522.6 539 L523.5 537.8 L524.4 537.9 L525.3 540.4 L526.2 537.9 L527.1 537.5 L528 537.8 L528.9 538.2 L529.8 539.3 L530.7 538.7 L531.6 538.3 L532.5 538.9 L533.4 539.1 L534.3 537.6 L535.2 539.1 L536.1 538.4 L537 539.2 L537.9 537.8 L538.8 538.1 L539.7 538.8 L540.6 540 L541.5 538.3 L542.4 538.3 L543.3 538.4 L544.2 539 L545.1 537.8 L545.5 538.7 L545.5 538.9 L545.5 694.7 L545.8 693.2 L546.8 694.6 L547.8 693.5 L548.8 694.5 L549.8 693.3 L550.8 694.1 L551.8 693.8 L552.8 694 L553.8 694.5 L554.8 693.8 L555.8 693.1 L556.8 693.8 L557.8 694.4 L558.8 694.5 L559.8 692.8 L560.8 694.4 L561.8 694.5 L562.8 694.5 L563.6 693.4 L563.6 693.2 L563.9 666.2 L564.2 643.4 L564.5 624.1 L564.8 607.8 L565.1 593.9 L565.4 582.2 L565.7 572.3 L566 563.9 L566.3 556.8 L566.6 550.8 L566.9 545.7 L567.2 541.4 L568 540.9 L568 699.2 L568.3 693.9 L569.3 693.6 L570.3 693.3 L571.3 693.6 L572.3 693.6 L573.3 692.8 L574.3 694.1 L575.3 693.2 L576.3 693.7 L577.3 693.9 L578.3 693.2 L579.3 694.1 L580.3 694.1 L581.3 693.3 L582.3 694.5 L583.3 694.5 L584.3 693 L585.3 694.2 L586.3 693.1 L587.3 693.9 L588.3 693.4 L589.3 693.2 L590.3 693.1 L591.3 693.9 L592.3 693.1 L593.3 693 L594.3 693.4 L595.3 693.1 L596.3 693.6 L597.3 693.7 L598.3 693.6 L599.3 693.9 L600.3 693.1 L601.3 694.1 L602.3 693.5 L603.3 693.6 L604.3 694 L605.3 693.1 L606.3 696.3 L607.3 694.1 L608.3 693.9 L609.3 693.5 L610.3 693.3 L611.3 694 L612.3 694.5 L613.3 693.5 L614.3 694.2 L615.3 694 L616.3 694.5 L617.3 693.5 L618.3 693 L619.3 693 L620.3 693.7 L621.3 693.5 L622.3 693.4 L623 694.1 L623 693.2 L623.4 648.6 L623.8 616.6 L624.2 593.7 L624.6 577.2 L625 565.5 L625.4 557 L625.8 551 L626.2 546.7 L626.6 543.6 L627 541.3 L627.4 539.7 L627.8 538.6 L627.5 538.7 L628.4 538.1 L629.3 538.6 L630.2 537.9 L631.1 538.2 L632 539.2 L632.9 538 L633.8 539 L634.7 536.3 L635.6 537.5 L636.5 537.7 L637.4 537.5 L638.3 538.9 L639.2 539.2 L640.1 538.5 L641 537.6 L641.9 538.3 L642.8 538.9 L643.7 538.2 L644.6 539.1 L645.5 538.6 L646.4 534.5 L647.3 537.4 L648.2 538.7 L649.1 537.7 L650 538.6 L650.9 539.3 L651.8 539.4 L652.7 538.2 L653.6 537.9 L654.5 539.4 L655.4 537.8 L656.3 537.7 L657.2 539.1 L658.1 538.3 L659 539 L659.4 538.4 L659.4 538.9 L659.4 694.7 L659.7 694.4 L660.7 693.4 L661.7 694.5 L662.7 694.4 L663.7 693.1 L664.7 693.5 L665.7 692.8 L666.7 694.2 L667.7 692.8 L668.7 693.5 L669.7 693.8 L670.7 693.5 L671.7 694.5 L672.7 693.9 L673.7 693.5 L674.7 694.4 L675.7 694.2 L676.7 694.6 L677.7 693.4 L678.7 693.3 L679.7 693.1 L680.7 693.7 L681.7 694.5 L682.7 694.5 L683.7 693.1 L684.7 693.8 L685.7 693.9 L686.7 694.5 L687.7 694.2 L688.7 693.3 L689.7 694.4 L690.7 694.1 L691.7 694.1 L692.7 693 L693.7 694.1 L694.7 694 L695.7 693.5 L696.7 694.5 L697.7 693.6 L698.7 694.3 L699.7 693.6 L700.7 693.5 L701.7 693.7 L702.7 694.1 L703.7 694 L704.7 694.6 L705.7 694.1 L706.7 693.9 L707.7 693.2 L708.7 692.9 L709.7 693 L710.7 694.2 L711.7 693.6 L712.7 694.1 L713.7 694.5 L714.7 693 L715.7 693 L716.7 693.7 L717.7 693.1 L718.7 693.7 L719.7 693.3 L720.7 693.2 L721.7 693.9 L722.7 694.2 L723.7 693.8 L724.7 693.6 L725.7 694.4 L726.7 694 L727.7 693.2 L728.7 694.3 L729.7 694.5 L730.7 694 L731.7 693.5 L731.7 693.4 L731.7 693.2 L732 666.2 L732.2 643.4 L732.5 624.1 L732.8 607.8 L733 593.9 L733.3 582.2 L733.6 572.3 L733.8 563.9 L734.1 556.8 L734.4 550.8 L734.6 545.7 L734.9 541.4 L735.7 540.9 L735.7 699.2 L736 693.6 L737 693.3 L738 693.8 L739 693.9 L740 694.4 L741 694.5 L742 693.1 L743 694.5 L744 693.8 L745 692.9 L746 693 L747 693.9 L748 694.5 L749 693.5 L750 693.9 L751 694.4 L752 693.4 L753 693.3 L754 693.2 L755 693.3 L756 693.2 L757 693 L758 694 L759 694.5 L760 694 L761 692.8 L762 693.6 L763 693.4 L764 692.8 L765 694.4 L766 692.2 L767 693.1 L768 693 L769 693.3 L770 693.7 L771 694.5 L772 694.1 L773 694.3 L774 693 L775 693.3 L776 693.5 L777 694.5 L778 694.6 L779 694 L780 694.1 L781 693.4 L782 693.3 L783 693.1 L784 693.9 L785 693.1 L786 693.8 L787 693.5 L788 692.8 L789 693.6 L790 694.2 L791 694.3 L791.3 693.3 L791.3 693.2 L791.7 648.6 L792 616.6 L792.4 593.7 L792.8 577.2 L793.2 565.5 L793.5 557 L793.9 551 L794.3 546.7 L794.7 543.6 L795.1 541.3 L795.4 539.7 L795.8 538.6 L795.5 538.4 L796.4 538.1 L797.3 537.8 L798.2 539.1 L799.1 538.4 L800 538.6 L800.9 537.5 L801.8 538.1 L802.7 538.7 L803.6 538 L804.5 539.3 L805.4 537.7 L806.3 538 L807.2 538.8 L808.1 534.7 L809 539.1 L809.9 537.7 L810.8 537.5 L811.7 538.1 L812.6 538.9 L813.5 538.4 L814.4 538.7 L815.3 538.7 L816.2 537 L817.1 538.2 L818 537.6 L818.9 539.4 L819.8 537.9 L820.7 537.8 L821.6 538.8 L822.5 537.7 L823.4 538.5 L824.3 539.2 L825.2 538.4 L826.1 537.8 L827 538.4 L827.2 538.2 L827.2 538.9 L827.2 694.7 L827.5 694.5 L828.5 693.7 L829.5 693.7 L830.5 694 L831.5 693.8 L832.5 692.9 L833.5 694.2 L834.5 693.4 L835.5 693.8 L836.5 693.4 L837.5 693.5 L838.5 693.3 L839.5 690.7 L840.5 694.1 L841.5 693.9 L842.5 694.4 L843.5 693 L844.5 690.8 L845.5 693.4 L846.5 694.6 L847.5 694.4 L848.5 694.4 L849.5 694.5 L850.5 694.5 L851.5 693.2 L852.5 693.7 L853.5 693.5 L854.5 693.9 L855.5 693.3 L856.5 693.7 L857.5 694 L858.5 693.8 L859.5 694.2 L860.5 694.2 L861.5 693.2 L862.5 693.7 L862.8 693.5 L862.8 693.2 L863.2 648.6 L863.5 616.6 L863.9 593.7 L864.3 577.2 L864.7 565.5 L865 557 L865.4 551 L865.8 546.7 L866.2 543.6 L866.6 541.3 L866.9 539.7 L867.3 538.6 L867 538.2 L867.9 539 L868.8 538.9 L869.7 538.3 L870.6 538 L871.5 538.9 L872.4 537.8 L873.3 539 L874.2 538.8 L875.1 538.8 L876 537.5 L876.9 537.5 L877.8 538.4 L878.7 539.3 L879.6 537.9 L880.5 537.6 L881.3 538.6 L881.3 538.9 L881.3 694.7 L881.6 693.7 L882.6 693.3 L883.6 694.1 L884.6 694.3 L885.6 693.6 L886.6 693.4 L887.6 693.1 L888.6 693.3 L889.6 694.3 L890.6 694.3 L891.6 693.6 L892.6 694.2 L893.6 693 L894.6 693.6 L895.6 693.9 L896.6 692.8 L897.6 692.6 L898.6 694.2 L899 693.9 L899 693.2 L899.3 666.2 L899.7 643.4 L900 624.1 L900.3 607.8 L900.7 593.9 L901 582.2 L901.3 572.3 L901.7 563.9 L902 556.8 L902.3 550.8 L902.7 545.7 L903 541.4 L903.5 540.9 L903.5 699.2 L903.8 693.9 L904.8 692.8 L905.8 693.9 L906.8 693.2 L907.8 694.4 L908.8 693.9 L909.8 692.2 L910.8 694 L911.8 693.7 L912.8 693.2 L913.8 693.5 L914.8 694.4 L915.8 694.6 L916.8 694.3 L917.8 693.9 L918.8 692.9 L919.8 694.3 L920.8 694.2 L921.8 694.6 L922.8 693.5 L923.8 693.9 L924.8 694.3 L925.8 693.5 L926.8 693 L927.8 694.2 L928.8 694.6 L929.8 693.6 L930.8 692.8 L931.8 693 L932.8 693.6 L933.8 693.3 L934.8 693.7 L935.8 693.1 L936.8 693.7 L937.8 694.4 L938.8 694.4 L939.8 693.4 L940.8 693.8 L941.8 693 L942.8 693.5 L943.8 694 L944.8 693.4 L945.8 694.3 L946.8 693.6 L947.8 693.4 L948.8 693.1 L949.8 694 L950.8 693.5 L951.8 694.2 L952.8 694.3 L953.8 692.2 L954.8 694.5 L955.8 694 L956.8 693.7 L957.8 693.1 L958.4 693.9 L958.4 693.2 L958.8 648.6 L959.2 616.6 L959.6 593.7 L960.1 577.2 L960.5 565.5 L960.9 557 L961.3 551 L961.7 546.7 L962.1 543.6 L962.6 541.3 L963 539.7 L963.4 538.6 L963.1 537.9 L964 537.7 L964.9 537.7 L965.8 538 L966.7 537.7 L967.6 538.6 L968.5 538 L969.4 538.5 L970.3 539 L971.2 537.8 L972.1 539.1 L973 538.9 L973.9 538.3 L974.8 539 L975.7 537.6 L976.6 537.5 L977.5 539.3 L978.4 537.9 L979.3 537.8 L980.2 541.6 L981.1 538.3 L982 538.8 L982.9 539.1 L983.8 539.2 L984.7 537.5 L985.6 537.5 L986.5 538.6 L987.4 537.7 L988.3 538 L989.2 539.2 L990.1 539.4 L991 539 L991.9 539.3 L992.8 538.9 L993.7 537.6 L994.3 538.5 L994.3 538.9 L994.3 694.7 L994.6 693.9 L995.6 693.1 L996.6 693.6 L997.6 693.6 L998.6 694.5 L999.6 694.1 L1000.6 693.2 L1001.6 693.5 L1002.6 693.2 L1003.6 693.5 L1004.6 695.5 L1005.6 694.1 L1006.6 693.4 L1007.6 693.4 L1008.6 694 L1009.6 693.7 L1010.6 694.5 L1011.6 693.7 L1012.4 693.4 L1012.4 693.2 L1012.8 648.6 L1013.2 616.6 L1013.6 593.7 L1014.1 577.2 L1014.5 565.5 L1014.9 557 L1015.3 551 L1015.7 546.7 L1016.1 543.6 L1016.6 541.3 L1017 539.7 L1017.4 538.6 L1017.1 538.8 L1018 539 L1018.9 538 L1019.8 538.4 L1020.7 538.6 L1021.6 540.7 L1022.5 537.9 L1023.4 538.5 L1024.3 538.7 L1025.2 539 L1026.1 539.1 L1027 538.8 L1027.9 538.3 L1028.8 539.3 L1029.7 537.6 L1030.2 538.4 L1030.2 538.9 L1030.2 694.7 L1030.5 693.1 L1031.5 694.4 L1032.5 693.1 L1033.5 693.8 L1034.5 693.7 L1035.5 693.6 L1036.5 697.3 L1037.5 695 L1038.5 693.8 L1039.5 693.2 L1040.5 693.4 L1041.5 693.2 L1042.5 694 L1043.5 693.7 L1044.5 694 L1045.5 693.1 L1046.5 694.1 L1047.5 694.3 L1048.5 692.9 L1049.5 693 L1050.5 693 L1051.5 693.3 L1052.5 693.6 L1053.5 694.2 L1054.5 693 L1055.5 692.8 L1056.5 693 L1057.5 694.2 L1058.5 695 L1059.5 693.5 L1060.5 693.5 L1061.5 692.9 L1062.5 693.7 L1063.5 693.6 L1064.5 694.3 L1065.5 693.1 L1066.5 694.4 L1066.6 693.8 L1066.6 693.2 L1067 648.6 L1067.5 616.6 L1067.9 593.7 L1068.3 577.2 L1068.8 565.5 L1069.2 557 L1069.6 551 L1070.1 546.7 L1070.5 543.6 L1070.9 541.3 L1071.4 539.7 L1071.8 538.6 L1071.5 538.5 L1072.4 538.5 L1073.3 538.5 L1074.2 537.6 L1075.1 539.2 L1076 537.4 L1076.9 538.7 L1077.8 538.3 L1078.7 538 L1079.6 538.9 L1080.5 538.7 L1081.4 538.2 L1082.3 538 L1083.2 538.1 L1084.1 538.7 L1085 539 L1085.9 538.5 L1086.8 537.6 L1087.7 537.5 L1088.6 537.5 L1089.5 538.1 L1090.4 538.2 L1091.3 538.2 L1092.2 538.4 L1093.1 539.3 L1093.7 538.3 L1093.7 538.9 L1093.7 694.7 L1094 693.3 L1095 693.4 L1096 694.2 L1097 694.1 L1098 693.1 L1099 693.6 L1100 693.2 L1101 694.1 L1102 693.1 L1103 693.6 L1104 694.3 L1105 693.8 L1106 693 L1107 694.4 L1108 693.8 L1108.8 693.4 L1108.8 693.2 L1109.2 648.5 L1109.6 616.4 L1110 593.5 L1110.5 577 L1110.9 565.2 L1111.3 556.8 L1111.7 550.7 L1112.1 546.4 L1112.5 543.3 L1113 541 L1113.4 539.4 L1113.8 538.3 L1114.5 538.1" fill="none" stroke="#33c5cf" stroke-width="1.25" stroke-linejoin="round" shape-rendering="crispEdges"/>
<path d="M377 267 L396 267 L386.5 275.8Z" fill="#f58a1f"/>
<rect x="3" y="869.8" width="1441" height="4.2" fill="#ff00ff"/>
<rect x="241" y="860" width="1.2" height="25" fill="#20e020"/>
<rect x="1108" y="860" width="1.2" height="25" fill="#ff1010"/>
<path d="M258.8 872 L263 859.7 L399 859.7 L403.2 872 L399 884.3 L263 884.3Z" fill="#000" stroke="#c9b800" stroke-width="1.2"/><text x="331" y="879.9" text-anchor="middle" font-family='"DejaVu Sans Condensed", "Liberation Sans Narrow", "Liberation Sans", sans-serif' font-weight="bold" font-size="22.3" fill="#fff">A:50h:R</text>
<path d="M428.8 872 L433 859.7 L569 859.7 L573.2 872 L569 884.3 L433 884.3Z" fill="#000" stroke="#00a8b4" stroke-width="1.2"/><text x="501" y="879.9" text-anchor="middle" font-family='"DejaVu Sans Condensed", "Liberation Sans Narrow", "Liberation Sans", sans-serif' font-weight="bold" font-size="22.3" fill="#fff">Data:2Eh</text>
<path d="M596.2 872 L600.4 859.7 L736.4 859.7 L740.6 872 L736.4 884.3 L600.4 884.3Z" fill="#000" stroke="#00a8b4" stroke-width="1.2"/><text x="668.4" y="879.9" text-anchor="middle" font-family='"DejaVu Sans Condensed", "Liberation Sans Narrow", "Liberation Sans", sans-serif' font-weight="bold" font-size="22.3" fill="#fff">Data:30h</text>
<path d="M763.6 872 L767.8 859.7 L903.8 859.7 L908 872 L903.8 884.3 L767.8 884.3Z" fill="#000" stroke="#00a8b4" stroke-width="1.2"/><text x="835.8" y="879.9" text-anchor="middle" font-family='"DejaVu Sans Condensed", "Liberation Sans Narrow", "Liberation Sans", sans-serif' font-weight="bold" font-size="22.3" fill="#fff">Data:32h</text>
<path d="M931 872 L935.2 859.7 L1071.2 859.7 L1075.4 872 L1071.2 884.3 L935.2 884.3Z" fill="#000" stroke="#00a8b4" stroke-width="1.2"/><text x="1003.2" y="879.9" text-anchor="middle" font-family='"DejaVu Sans Condensed", "Liberation Sans Narrow", "Liberation Sans", sans-serif' font-weight="bold" font-size="22.3" fill="#fff">Data:34h</text>
<path d="M377.6 753.4 H395.4 V772.4 H390.6 L386.5 778.4 L382.4 772.4 H377.6Z" fill="#000" stroke="#f58a1f" stroke-width="1.8"/>
<text x="386.5" y="768.6" text-anchor="middle" font-family='"DejaVu Sans", "Liberation Sans", sans-serif' font-weight="bold" font-size="13" fill="#f58a1f">T</text>
<path d="M31.5 810.5 L43.8 832.5 L19.2 832.5Z" fill="#d9222c" stroke="#2a2a60" stroke-width="1.3" stroke-linejoin="round"/>
<text x="31.5" y="830" text-anchor="middle" font-family='"DejaVu Sans", "Liberation Sans", sans-serif' font-weight="bold" font-size="14" fill="#fff">!</text>
<text x="53.5" y="857.6" font-family='"DejaVu Sans Condensed", "Liberation Sans Narrow", "Liberation Sans", sans-serif' font-size="18.6" fill="#cc99ff">I2C</text>
<rect x="54.5" y="863.5" width="37" height="17" fill="#3a3a3a" fill-opacity="0.85" stroke="#5a5a5a" stroke-width="1"/>
<path d="M67.5 872H78.5M73 866.5V877.5" stroke="#8a8a8a" stroke-width="1.6" fill="none"/>
<path d="M9 860.3 H31 L40.6 872 L31 883.7 H9 Q7 883.7 7 881.7 V862.3 Q7 860.3 9 860.3Z" fill="#cc99ff"/>
<text x="22.8" y="876.3" text-anchor="middle" font-family='"DejaVu Sans", "Liberation Sans", sans-serif' font-size="11.5" fill="#222">B1</text>
<path d="M8.5 374.5 H30.5 L41.3 387 L30.5 399.5 H8.5 Q6.7 399.5 6.7 397.5 V376.5 Q6.7 374.5 8.5 374.5Z" fill="#1c1a08" stroke="#e6d81e" stroke-width="1.5" stroke-linejoin="round"/>
<text x="23.3" y="391.2" text-anchor="middle" font-family='"DejaVu Sans", "Liberation Sans", sans-serif' font-size="13" fill="#f4e824">C 1</text>
<path d="M8.5 617.5 H30.5 L41.3 630 L30.5 642.5 H8.5 Q6.7 642.5 6.7 640.5 V619.5 Q6.7 617.5 8.5 617.5Z" fill="#08282a" stroke="#2fb8c2" stroke-width="1.5" stroke-linejoin="round"/>
<text x="23.3" y="634.2" text-anchor="middle" font-family='"DejaVu Sans", "Liberation Sans", sans-serif' font-size="13" fill="#3cd0da">C 2</text>
<text x="1438.6" y="280.1" text-anchor="end" font-family='"DejaVu Sans", "Liberation Sans", sans-serif' font-size="11.75" fill="#f0e526">5.44 V</text>
<text x="1438.6" y="304.2" text-anchor="end" font-family='"DejaVu Sans", "Liberation Sans", sans-serif' font-size="11.75" fill="#f0e526">4.76 V</text>
<text x="1438.6" y="328.3" text-anchor="end" font-family='"DejaVu Sans", "Liberation Sans", sans-serif' font-size="11.75" fill="#f0e526">4.08 V</text>
<text x="1438.6" y="352.4" text-anchor="end" font-family='"DejaVu Sans", "Liberation Sans", sans-serif' font-size="11.75" fill="#f0e526">3.40 V</text>
<text x="1438.6" y="376.5" text-anchor="end" font-family='"DejaVu Sans", "Liberation Sans", sans-serif' font-size="11.75" fill="#f0e526">2.72 V</text>
<text x="1438.6" y="400.6" text-anchor="end" font-family='"DejaVu Sans", "Liberation Sans", sans-serif' font-size="11.75" fill="#f0e526">2.04 V</text>
<text x="1438.6" y="424.7" text-anchor="end" font-family='"DejaVu Sans", "Liberation Sans", sans-serif' font-size="11.75" fill="#f0e526">1.36 V</text>
<text x="1438.6" y="448.8" text-anchor="end" font-family='"DejaVu Sans", "Liberation Sans", sans-serif' font-size="11.75" fill="#f0e526">680 mV</text>
<text x="1438.6" y="472.9" text-anchor="end" font-family='"DejaVu Sans", "Liberation Sans", sans-serif' font-size="11.75" fill="#f0e526">0 V</text>
<text x="1438.6" y="497" text-anchor="end" font-family='"DejaVu Sans", "Liberation Sans", sans-serif' font-size="11.75" fill="#f0e526">-680 mV</text>
<text x="1438.6" y="527" text-anchor="end" font-family='"DejaVu Sans", "Liberation Sans", sans-serif' font-size="11.75" fill="#35cdd7">5.46 V</text>
<text x="1438.6" y="551.1" text-anchor="end" font-family='"DejaVu Sans", "Liberation Sans", sans-serif' font-size="11.75" fill="#35cdd7">4.68 V</text>
<text x="1438.6" y="575.2" text-anchor="end" font-family='"DejaVu Sans", "Liberation Sans", sans-serif' font-size="11.75" fill="#35cdd7">3.90 V</text>
<text x="1438.6" y="599.3" text-anchor="end" font-family='"DejaVu Sans", "Liberation Sans", sans-serif' font-size="11.75" fill="#35cdd7">3.12 V</text>
<text x="1438.6" y="623.4" text-anchor="end" font-family='"DejaVu Sans", "Liberation Sans", sans-serif' font-size="11.75" fill="#35cdd7">2.34 V</text>
<text x="1438.6" y="647.5" text-anchor="end" font-family='"DejaVu Sans", "Liberation Sans", sans-serif' font-size="11.75" fill="#35cdd7">1.56 V</text>
<text x="1438.6" y="671.6" text-anchor="end" font-family='"DejaVu Sans", "Liberation Sans", sans-serif' font-size="11.75" fill="#35cdd7">780 mV</text>
<text x="1438.6" y="695.7" text-anchor="end" font-family='"DejaVu Sans", "Liberation Sans", sans-serif' font-size="11.75" fill="#35cdd7">0 V</text>
<text x="1438.6" y="719.8" text-anchor="end" font-family='"DejaVu Sans", "Liberation Sans", sans-serif' font-size="11.75" fill="#35cdd7">-780 mV</text>
<text x="1438.6" y="743.9" text-anchor="end" font-family='"DejaVu Sans", "Liberation Sans", sans-serif' font-size="11.75" fill="#35cdd7">-1.56 V</text>
<text x="98" y="985.6" text-anchor="middle" font-family='"DejaVu Sans", "Liberation Sans", sans-serif' font-size="11.75" fill="#c4c4c4">-80 µs</text>
<text x="242" y="985.6" text-anchor="middle" font-family='"DejaVu Sans", "Liberation Sans", sans-serif' font-size="11.75" fill="#c4c4c4">-40 µs</text>
<text x="386" y="985.6" text-anchor="middle" font-family='"DejaVu Sans", "Liberation Sans", sans-serif' font-size="11.75" fill="#c4c4c4">0 s</text>
<text x="530" y="985.6" text-anchor="middle" font-family='"DejaVu Sans", "Liberation Sans", sans-serif' font-size="11.75" fill="#c4c4c4">40 µs</text>
<text x="674" y="985.6" text-anchor="middle" font-family='"DejaVu Sans", "Liberation Sans", sans-serif' font-size="11.75" fill="#c4c4c4">80 µs</text>
<text x="818" y="985.6" text-anchor="middle" font-family='"DejaVu Sans", "Liberation Sans", sans-serif' font-size="11.75" fill="#c4c4c4">120 µs</text>
<text x="962" y="985.6" text-anchor="middle" font-family='"DejaVu Sans", "Liberation Sans", sans-serif' font-size="11.75" fill="#c4c4c4">160 µs</text>
<text x="1106" y="985.6" text-anchor="middle" font-family='"DejaVu Sans", "Liberation Sans", sans-serif' font-size="11.75" fill="#c4c4c4">200 µs</text>
<text x="1250" y="985.6" text-anchor="middle" font-family='"DejaVu Sans", "Liberation Sans", sans-serif' font-size="11.75" fill="#c4c4c4">240 µs</text>
<text x="1394" y="985.6" text-anchor="middle" font-family='"DejaVu Sans", "Liberation Sans", sans-serif' font-size="11.75" fill="#c4c4c4">280 µs</text>
</g>
</svg>
<div id="bdr" class="abs"></div>
<div id="bdtitle" class="abs"><span>Bus Decode Results</span></div>
<svg class="abs" width="20" height="20" style="left:1873px;top:31px"><path d="M4.3 5.6L15.2 16.6M15.2 5.6L4.3 16.6" stroke="#b4b4b4" stroke-width="2.1" fill="none"/></svg>
<div id="bdtabs" class="abs"></div>
<div id="bdtab" class="abs"><span style="position:absolute;left:7.4px;top:0.2px;white-space:nowrap">Bus 1 (I2C)</span></div>
<div id="bdbody" class="abs"></div>
<div id="bdhead" class="abs"><span style="left:3px">Index</span><span style="left:103px">Start Time</span><span style="left:222px">Address (h)</span><span style="left:328px">Data (h)</span><i style="left:100.9px"></i><i style="left:219.9px"></i><i style="left:325.9px"></i></div>
<div class="row r0" style="top:110.5px"><span class="c c1">25</span><span class="c c2">-8.458336ms</span><span class="c c3">50:Read</span><span class="c c4">3E</span></div>
<div class="row r1" style="top:138.5px"><span class="c c1">26</span><span class="c c2">-8.055284ms</span><span class="c c3">102:Write</span><span class="c c4">F3 BE</span></div>
<div class="row r0" style="top:166.5px"><span class="c c1">27</span><span class="c c2">-7.554259ms</span><span class="c c3">103:Write</span><span class="c c4">66 BB</span></div>
<div class="row r1" style="top:194.5px"><span class="c c1">28</span><span class="c c2">-7.05314ms</span><span class="c c3">152:Write</span><span class="c c4">--</span></div>
<div class="row r0" style="top:222.5px"><span class="c c1">29</span><span class="c c2">-6.954772ms</span><span class="c c3">79:Read</span><span class="c c4">77 A7</span></div>
<div class="row r1" style="top:250.5px"><span class="c c1">30</span><span class="c c2">-6.551988ms</span><span class="c c3">153:Write</span><span class="c c4">BE EB</span></div>
<div class="row r0" style="top:278.5px"><span class="c c1">31</span><span class="c c2">-6.361748ms</span><span class="c c3">79:Read</span><span class="c c4">BE EB</span></div>
<div class="row r1" style="top:306.5px"><span class="c c1">32</span><span class="c c2">-3.546419ms</span><span class="c c3">00:Write</span><span class="c c4">--</span></div>
<div class="row r0" style="top:334.5px"><span class="c c1">33</span><span class="c c2">-3.045908ms</span><span class="c c3">50:Write</span><span class="c c4">00</span></div>
<div class="row r1" style="top:362.5px"><span class="c c1">34</span><span class="c c2">-2.947764ms</span><span class="c c3">50:Read</span><span class="c c4">10</span></div>
<div class="row r0" style="top:390.5px"><span class="c c1">35</span><span class="c c2">-2.544948ms</span><span class="c c3">50:Read</span><span class="c c4">12</span></div>
<div class="row r1" style="top:418.5px"><span class="c c1">36</span><span class="c c2">-2.043988ms</span><span class="c c3">50:Read</span><span class="c c4">14 16</span></div>
<div class="row r0" style="top:446.5px"><span class="c c1">37</span><span class="c c2">-1.54306ms</span><span class="c c3">50:Read</span><span class="c c4">18 1A 1C</span></div>
<div class="row r1" style="top:474.5px"><span class="c c1">38</span><span class="c c2">-1.042036ms</span><span class="c c3">50:Read</span><span class="c c4">1E 20 22 24</span></div>
<div class="row r0" style="top:502.5px"><span class="c c1">39</span><span class="c c2">-540.9793µs</span><span class="c c3">50:Read</span><span class="c c4">26 28 2A 2C</span></div>
<div class="row r1 sel" style="top:530.5px"><span class="c c1">40</span><span class="c c2">-40.21165µs</span><span class="c c3">50:Read</span><span class="c c4">2E 30 32 34</span></div>
<div class="row r0" style="top:558.5px"><span class="c c1">41</span><span class="c c2">460.8433µs</span><span class="c c3">50:Read</span><span class="c c4">36 38 3A 3C</span></div>
<div class="row r1" style="top:586.5px"><span class="c c1">42</span><span class="c c2">961.9325µs</span><span class="c c3">50:Write</span><span class="c c4">17</span></div>
<div class="row r0" style="top:614.5px"><span class="c c1">43</span><span class="c c2">1.060076ms</span><span class="c c3">50:Read</span><span class="c c4">3E</span></div>
<div class="row r1" style="top:642.5px"><span class="c c1">44</span><span class="c c2">1.463148ms</span><span class="c c3">102:Write</span><span class="c c4">F3 BE</span></div>
<div class="row r0" style="top:670.5px"><span class="c c1">45</span><span class="c c2">1.964107ms</span><span class="c c3">103:Write</span><span class="c c4">66 BB</span></div>
<div class="row r1" style="top:698.5px"><span class="c c1">46</span><span class="c c2">2.465229ms</span><span class="c c3">152:Write</span><span class="c c4">--</span></div>
<div class="row r0" style="top:726.5px"><span class="c c1">47</span><span class="c c2">2.563563ms</span><span class="c c3">79:Read</span><span class="c c4">77 A7</span></div>
<div class="row r1" style="top:754.5px"><span class="c c1">48</span><span class="c c2">2.966349ms</span><span class="c c3">153:Write</span><span class="c c4">BE EB</span></div>
<div class="row r0" style="top:782.5px"><span class="c c1">49</span><span class="c c2">3.156592ms</span><span class="c c3">79:Read</span><span class="c c4">BE EB</span></div>
<div class="row r1" style="top:810.5px"><span class="c c1">50</span><span class="c c2">5.971915ms</span><span class="c c3">00:Write</span><span class="c c4">--</span></div>
<div class="row r0" style="top:838.5px"><span class="c c1">51</span><span class="c c2">6.472428ms</span><span class="c c3">50:Write</span><span class="c c4">00</span></div>
<div class="row r1" style="top:866.5px"><span class="c c1">52</span><span class="c c2">6.570571ms</span><span class="c c3">50:Read</span><span class="c c4">10</span></div>
<div class="row r0" style="top:894.5px"><span class="c c1">53</span><span class="c c2">6.97342ms</span><span class="c c3">50:Read</span><span class="c c4">12</span></div>
<div class="row r1" style="top:922.5px"><span class="c c1">54</span><span class="c c2">7.474349ms</span><span class="c c3">50:Read</span><span class="c c4">14 16</span></div>
<div class="row r0" style="top:950.5px"><span class="c c1">55</span><span class="c c2">7.975287ms</span><span class="c c3">50:Read</span><span class="c c4">18 1A 1C</span></div>
<div class="abs" style="left:1450px;top:978.5px;width:451px;height:13.5px;background:#e4e4e4"></div>
<div class="abs" style="left:1451px;top:985px;width:204px;height:3.6px;background:#757575"></div>
<div class="abs" style="left:1889px;top:109px;width:12px;height:883px;background:#e4e4e4"></div>
<div class="abs" style="left:1894px;top:386px;width:4px;height:330px;background:#757575"></div>
<div class="abs" style="left:1447.2px;top:991px;width:456.6px;height:4px;background:#8e8b8b"></div>
<div class="abs" style="left:1910px;top:500px;width:4px;height:4px;border-radius:2px;background:#c8c8c8"></div>
<div class="abs" style="left:1910px;top:508.5px;width:4px;height:4px;border-radius:2px;background:#c8c8c8"></div>
<div class="abs" style="left:1910px;top:517px;width:4px;height:4px;border-radius:2px;background:#c8c8c8"></div>
<div class="badge" style="left:4px;width:90px"><div class="hd" style="background:#4f4a25;color:#f2e51c;font-size:13.3px;line-height:21px">Ch 1</div><span style="left:7.2px;top:23.9px;font-size:13.6px">680 mV/div</span><span style="left:7.8px;top:61.7px;font-size:13.6px">1 GHz</span><span style="left:73.6px;top:57.2px;font-size:8.8px">B<span style="position:static;font-size:8.4px;vertical-align:-3.6px;margin-left:0.8px">w</span></span></div>
<div class="badge" style="left:99px;width:90px"><div class="hd" style="background:#1f4545;color:#34c8d2;font-size:13.3px;line-height:21px">Ch 2</div><span style="left:7.2px;top:23.9px;font-size:13.6px">780 mV/div</span><span style="left:7.8px;top:61.7px;font-size:13.6px">1 GHz</span><span style="left:73.6px;top:57.2px;font-size:8.8px">B<span style="position:static;font-size:8.4px;vertical-align:-3.6px;margin-left:0.8px">w</span></span></div>
<div class="badge" style="left:194px;width:90px"><div class="hd" style="background:#cc99ff;color:#1a1a1a;font-size:13.3px;line-height:21px">Bus 1</div><span style="left:7px;top:23.2px">I2C</span></div>
<svg class="abs" width="20" height="16" style="left:11px;top:1040px"><path d="M2.2 11.5Q1.6 2.2 8.2 2.2Q14 2.2 14 9" fill="none" stroke="#1a1a1a" stroke-width="1.2"/><circle cx="8.1" cy="6.2" r="2.5" fill="none" stroke="#1a1a1a" stroke-width="1.2"/><rect x="12" y="8.2" width="3.8" height="5.2" rx="0.8" fill="#f0f0f0" stroke="#1a1a1a" stroke-width="1"/><rect x="1.2" y="7.8" width="2.2" height="4.4" rx="0.9" fill="#e8e8e8" stroke="#1a1a1a" stroke-width="0.8"/></svg>
<svg class="abs" width="20" height="16" style="left:106px;top:1040px"><path d="M2.2 11.5Q1.6 2.2 8.2 2.2Q14 2.2 14 9" fill="none" stroke="#1a1a1a" stroke-width="1.2"/><circle cx="8.1" cy="6.2" r="2.5" fill="none" stroke="#1a1a1a" stroke-width="1.2"/><rect x="12" y="8.2" width="3.8" height="5.2" rx="0.8" fill="#f0f0f0" stroke="#1a1a1a" stroke-width="1"/><rect x="1.2" y="7.8" width="2.2" height="4.4" rx="0.9" fill="#e8e8e8" stroke="#1a1a1a" stroke-width="0.8"/></svg>
<div class="btn" style="left:912px"><i style="background:#e0344e"></i><span style="top:26.5px;font-size:21px;line-height:24px;font-family:'DejaVu Sans Condensed', 'Liberation Sans Narrow', 'Liberation Sans', sans-serif">3</span></div>
<div class="btn" style="left:957px"><i style="background:#86d21c"></i><span style="top:26.5px;font-size:21px;line-height:24px;font-family:'DejaVu Sans Condensed', 'Liberation Sans Narrow', 'Liberation Sans', sans-serif">4</span></div>
<div class="vsep" style="left:1007px"></div>
<div class="btn" style="left:1018px"><i style="background:#f0851c"></i><span style="top:16.3px;font-size:14.7px;line-height:17.7px">Add</span><span style="top:32.3px;font-size:14.7px;line-height:17.7px">New</span><span style="top:48.3px;font-size:14.7px;line-height:17.7px">Math</span></div>
<div class="btn" style="left:1063px"><i style="background:#c4c4d4"></i><span style="top:16.3px;font-size:14.7px;line-height:17.7px">Add</span><span style="top:32.3px;font-size:14.7px;line-height:17.7px">New</span><span style="top:48.3px;font-size:14.7px;line-height:17.7px">Ref</span></div>
<div class="btn" style="left:1108px"><i style="background:#c25cf0"></i><span style="top:16.3px;font-size:14.7px;line-height:17.7px">Add</span><span style="top:32.3px;font-size:14.7px;line-height:17.7px">New</span><span style="top:48.3px;font-size:14.7px;line-height:17.7px">Bus</span></div>
<div class="vsep" style="left:1158px"></div>
<div class="btn" style="left:1168.5px"><i style="background:#4e4e4e"></i><span style="top:32.3px;font-size:14.7px;line-height:17.7px">DVM</span></div>
<div class="btn" style="left:1218.5px"><i style="background:#4e4e4e"></i><span style="top:32.3px;font-size:14.7px;line-height:17.7px">AFG</span></div>
<div class="vsep" style="left:1269px"></div>
<div class="badge" style="left:1280px;width:200px"><div class="hd" style="background:#595959;color:#e6e6e6">Horizontal</div><span style="left:7px;top:23.2px">4 ms/div</span><span style="left:112px;top:23.2px">40 ms</span><span style="left:7px;top:42.0px">SR: 31.25 MS/s</span><span style="left:112px;top:42.0px">32 ns/pt</span><span style="left:7px;top:61.1px">RL: 1.25 Mpts</span><span style="left:127px;top:61.1px">50%</span><svg width="10" height="12" style="left:112.5px;top:62px"><path d="M0.8 0.8H8.2V7.4H6L4.5 10.6L3 7.4H0.8Z" fill="#000" stroke="#f58a1f" stroke-width="1.3"/><path d="M2.7 2.8H6.3M4.5 2.8V6.6" stroke="#fff" stroke-width="1.2"/></svg></div>
<div class="badge" style="left:1490px;width:160px"><div class="hd" style="background:#595959;color:#e6e6e6">Trigger</div><div style="position:absolute;left:7px;top:24px;width:29.5px;height:16px;box-sizing:border-box;border:1px solid #222;border-radius:4.5px;background:#cc99ff"></div><span style="left:12.4px;top:23.2px;font-size:14px">B1</span><span style="left:47px;top:23.2px">I2C</span><span style="left:7px;top:42.0px;font-size:13.9px">Address</span></div>
<div class="badge" style="left:1660px;width:150px"><div class="hd" style="background:#595959;color:#e6e6e6">Acquisition</div><span style="left:7px;top:23.2px;font-size:14px">Auto,</span><span style="left:66.4px;top:23.2px;font-size:14px">Analyze</span><span style="left:7px;top:42.0px;font-size:13.55px">Sample: 12 bits</span><span style="left:7px;top:61.1px;font-size:13.5px">Single: 1 /1</span></div>
<div class="abs" style="left:1820px;top:998px;width:89.5px;height:35.6px;border-radius:5px;background:#ff1b2a;box-shadow:0 0 0 1px #6a5a5a inset;color:#fff;font-weight:bold;font-size:12.2px;font-family:'DejaVu Sans Condensed', 'Liberation Sans Narrow', 'Liberation Sans', sans-serif;text-align:center;line-height:34px">Stopped</div>
</div></body></html>
